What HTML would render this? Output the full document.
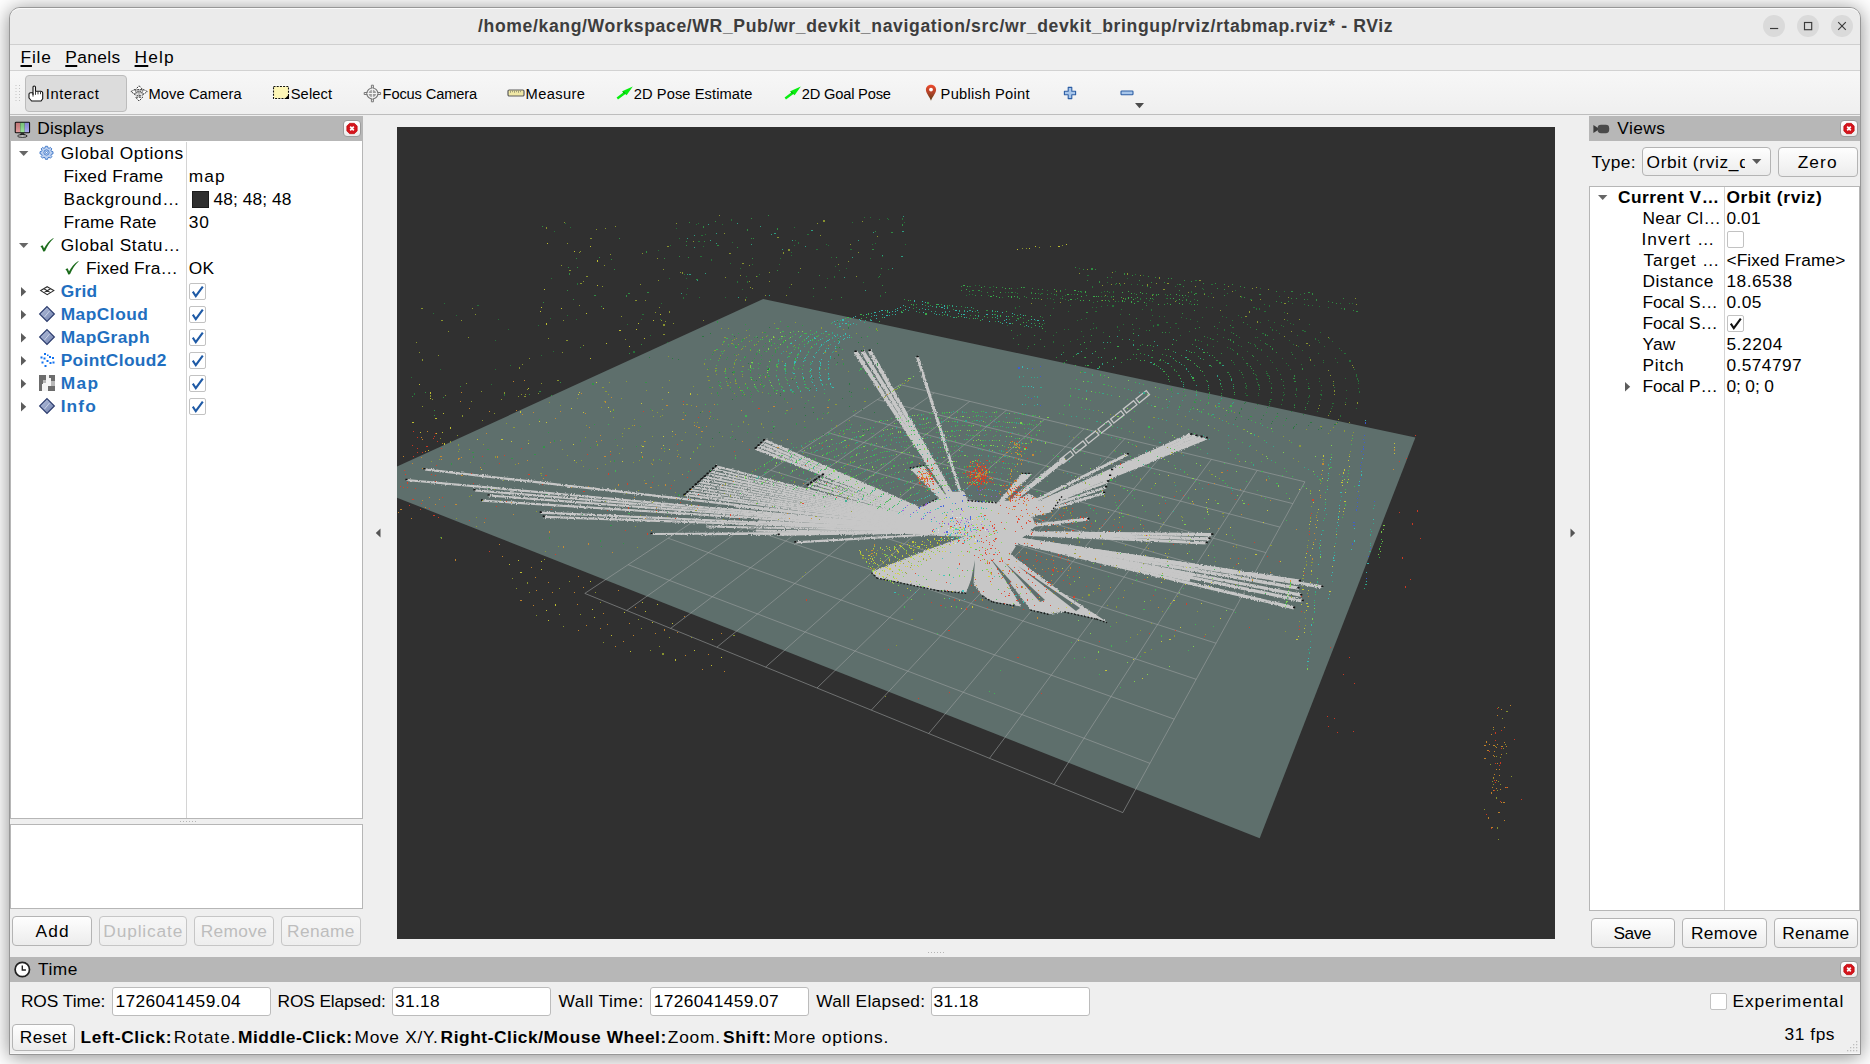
<!DOCTYPE html><html><head><meta charset="utf-8"><title>RViz</title><style>
html,body{margin:0;padding:0}
body{width:1870px;height:1064px;position:relative;overflow:hidden;background:#fff;font-family:'Liberation Sans',sans-serif;color:#000}
.a{position:absolute;box-sizing:border-box}
.t{position:absolute;white-space:pre;line-height:1;font-size:17.33px}
.t u{text-decoration-thickness:1.5px;text-underline-offset:2px}
#win{left:9px;top:7px;width:1852px;height:1048px;border:1px solid #979797;border-radius:11px 11px 0 0;background:#efefef;box-shadow:0 2px 20px rgba(0,0,0,.46);overflow:hidden}
.btn{border:1px solid #b4b4b4;border-radius:4px;background:linear-gradient(#fefefe,#ececec)}
.btn.dis{border-color:#c6c6c6;background:linear-gradient(#f6f6f6,#eeeeee)}
.inp{border:1px solid #bcbcbc;border-radius:3px;background:#fff}
.hdr{background:#b7b7b7}
.box{background:#fff;border:1px solid #b6b6b6}
.cb{width:17px;height:17px;border:1px solid #c2c2c2;border-radius:2px;background:#fff}
.cls{width:18px;height:17px;border:1px solid #9c9c9c;border-radius:4px;background:linear-gradient(#ffffff,#ececec)}
.vl{width:1px;background:#d4d4d4}
svg{position:absolute;overflow:visible}
</style></head><body>
<div id="win" class="a"></div>
<div class="a" style="left:10px;top:8px;width:1850px;height:36px;background:#ebebeb;border-radius:10px 10px 0 0;border-top:1px solid #fafafa"></div>
<div class="a" style="left:10px;top:44px;width:1850px;height:1px;background:#cfcfcf"></div>
<div class="a" style="left:1763px;top:15px;width:22px;height:22px;border-radius:11px;background:#dadada"></div>
<div class="a" style="left:1797px;top:15px;width:22px;height:22px;border-radius:11px;background:#dadada"></div>
<div class="a" style="left:1831px;top:15px;width:22px;height:22px;border-radius:11px;background:#dadada"></div>
<svg style="left:1763px;top:15px" width="92" height="22" fill="none" stroke="#3a3a3a" stroke-width="1.15"><path d="M7 13.5h8.2"/><rect x="41.5" y="7.5" width="7.2" height="7.2"/><path d="M75.2 7.2l7.6 7.6M82.8 7.2l-7.6 7.6"/></svg>
<div class="a" style="left:10px;top:70px;width:1850px;height:1px;background:#d2d2d2"></div>
<div class="a" style="left:10px;top:71px;width:1850px;height:43px;background:linear-gradient(#f7f7f7,#efefef)"></div>
<div class="a" style="left:10px;top:114px;width:1850px;height:1px;background:#bdbdbd"></div>
<svg style="left:15px;top:84px" width="6" height="20"><path d="M1 1v18M4.5 1v18" stroke="#c4c4c4" stroke-width="1" stroke-dasharray="1 2"/></svg>
<div class="a" style="left:25px;top:75px;width:102px;height:37px;background:#dcdcdc;border:1px solid #bcbcbc;border-radius:4px"></div>

<svg style="left:28px;top:85px" width="16" height="17" viewBox="0 0 16 17"><path d="M5 9.5V2.2a1.25 1.25 0 0 1 2.5 0V6.2h5.2a2 2 0 0 1 2 2v5.6l-1.6 2.2H3.6L1 13V9.2a1.5 1.5 0 0 1 1.5-1.5H5z" fill="#fff" stroke="#111" stroke-width="1.1" stroke-linejoin="round"/><path d="M7.5 6.2v3.6M10 6.4v3M12.5 6.6v2.6M5 8v3.6" stroke="#222" stroke-width=".9" fill="none"/></svg>
<svg style="left:130px;top:85px" width="18" height="17" viewBox="0 0 18 17"><rect x="8" y="4" width="2.2" height="9" fill="#bdbdbd"/><g fill="#fff" stroke="#3c3c3c" stroke-width="1" stroke-dasharray="2 .9" stroke-linejoin="round"><path d="M9.100.8L12.700 4.600H5.500Z"/><path d="M9.100 16L5.500 12.200H12.700Z"/><path d="M.9 6.600L5 4.400V6H8V7.800H5V9.400Z"/><path d="M17.300 6.600L13.200 4.400V6H10.200V7.800H13.200V9.400Z"/></g><path d="M4.200 9.200C6 11 12.200 11 14 9.200" fill="none" stroke="#3c3c3c" stroke-width=".9" stroke-dasharray="1.600 1"/></svg>
<svg style="left:272px;top:85px" width="18" height="15" viewBox="0 0 18 15"><rect x=".5" y=".5" width="17" height="14" fill="#fff" opacity=".9"/><rect x="1.5" y="1.5" width="15" height="12" fill="#fdf6b6" stroke="#111" stroke-width="1.1" stroke-dasharray="2 1.2"/><polygon points="17,9.5 17,14 12.6,14" fill="#000"/></svg>
<svg style="left:363px;top:84px" width="19" height="19" viewBox="0 0 19 19" fill="none" stroke="#777"><path d="M8.400 1.200h2v3.200h-2zM8.400 14.600h2v3.200h-2zM1.200 8.500h3.200v2h-3.200zM14.400 8.500h3.200v2h-3.200z" fill="#eee" stroke-width="1"/><circle cx="9.400" cy="9.500" r="5.500" fill="#f2f2f2" stroke-width="1.200"/><circle cx="9.400" cy="9.500" r="3.300" fill="#9a9a9a" stroke="#8a8a8a" stroke-width=".8" stroke-dasharray="1.200 .8"/><path d="M9.400 4.500v10M4.400 9.500h10" stroke-width="1" stroke="#f4f4f4"/><path d="M7.600 7.700h3.600M7.600 11.300h3.600" stroke="#ddd" stroke-width=".6" stroke-dasharray=".8 .8"/></svg>
<svg style="left:507px;top:89px" width="18" height="8" viewBox="0 0 18 8"><rect x="1" y="1" width="16" height="6" rx="1.2" fill="#f0e8a6" stroke="#5c5c5c" stroke-width="1.2"/><path d="M3.5 1.6v2.2M5.5 1.6v1.6M7.5 1.6v2.2M9.5 1.6v1.6M11.5 1.6v2.2M13.5 1.6v1.6" stroke="#8a8a70" stroke-width=".8"/></svg>
<svg style="left:615.5px;top:85.5px" width="18" height="14" viewBox="0 0 18 14"><path d="M0.6 11.6L7.2 6.4 6.2 5.2 16.8.6 10.6 9.2 9.4 8 2 13.4Z" fill="#08ee10"/><path d="M6.2 5.2L7.2 6.4 9.4 8 10.2 8.8 8.4 6.2Z" fill="#0a8a10"/></svg><svg style="left:783.5px;top:85.5px" width="18" height="14" viewBox="0 0 18 14"><path d="M0.6 11.6L7.2 6.4 6.2 5.2 16.8.6 10.6 9.2 9.4 8 2 13.4Z" fill="#08ee10"/><path d="M6.2 5.2L7.2 6.4 9.4 8 10.2 8.8 8.4 6.2Z" fill="#0a8a10"/></svg><svg style="left:925px;top:84px" width="12" height="18" viewBox="0 0 12 18"><defs><linearGradient id="pg" x1="0" y1="0" x2="0" y2="1"><stop offset="0" stop-color="#ee4a2c"/><stop offset=".5" stop-color="#b0442a"/><stop offset="1" stop-color="#5a3a10"/></linearGradient></defs><path d="M6 .8C3 .8.9 3 .9 5.8c0 3.4 3.4 6.4 5.1 11 1.700-4.600 5.100-7.600 5.100-11C11.100 3 9 .8 6 .8Z" fill="url(#pg)"/><circle cx="6" cy="5.600" r="1.900" fill="#fff"/></svg>
<svg style="left:1063px;top:86px" width="14" height="14" viewBox="0 0 14 14"><path d="M5.2 1.400h3.600v3.800h3.800v3.600h-3.800v3.800h-3.600v-3.800h-3.800v-3.600h3.800z" fill="#a8c6ea" stroke="#2c5ea4" stroke-width="1.100" stroke-linejoin="round"/></svg>
<svg style="left:1120px;top:90px" width="14" height="6" viewBox="0 0 14 6"><rect x="1" y="1" width="12" height="3.800" rx=".8" fill="#a8c6ea" stroke="#2c5ea4" stroke-width="1.100"/></svg>
<svg style="left:1135px;top:103px" width="10" height="6"><polygon points="0,0 9,0 4.500,5.200" fill="#4c4c4c"/></svg>


<div class="a hdr" style="left:10px;top:116px;width:353px;height:26px"></div>
<div class="a cls" style="left:343px;top:120px"></div><svg style="left:346px;top:123px" width="12" height="11" viewBox="0 0 12 11"><polygon points="3.6,0.3 8.4,0.3 11.2,3.1 11.2,7.9 8.4,10.7 3.6,10.7 0.8,7.9 0.8,3.1" fill="#d4141c" stroke="#b00" stroke-width=".6"/><path d="M4.2 3.7l3.6 3.6M7.8 3.7l-3.6 3.6" stroke="#fff" stroke-width="1.7"/></svg>
<svg style="left:14px;top:121px" width="17" height="17" viewBox="0 0 17 17"><rect x=".7" y=".7" width="15.400" height="11.600" rx="1.400" fill="#111"/><rect x="1.800" y="1.800" width="4.500" height="9.400" fill="#d88"/><rect x="6.300" y="1.800" width="4.400" height="9.400" fill="#8d8"/><rect x="10.700" y="1.800" width="4.300" height="9.400" fill="#99e"/><rect x="1.800" y="1.800" width="13.200" height="9.400" fill="url(#mg)"/><defs><linearGradient id="mg" x1="0" y1="0" x2="0" y2="1"><stop offset="0" stop-color="#000" stop-opacity=".12"/><stop offset="1" stop-color="#fff" stop-opacity=".18"/></linearGradient></defs><path d="M6.800 12.300h3.200l1 1.800h-5.200z" fill="#111"/><ellipse cx="8.400" cy="15" rx="4.800" ry="1.300" fill="#ddd" stroke="#111" stroke-width=".9"/></svg>
<div class="a box" style="left:10px;top:141px;width:353px;height:678px;border-top:none"></div>
<div class="a vl" style="left:186px;top:142px;height:676px"></div>
<div class="a box" style="left:10px;top:824px;width:353px;height:85px"></div>
<svg style="left:180px;top:821px" width="18" height="2"><path d="M0 .5h18" stroke="#b5b5b5" stroke-dasharray="1 2"/></svg>
<div class="a btn" style="left:12px;top:916px;width:80px;height:30px"></div>
<div class="a btn dis" style="left:99px;top:916px;width:88px;height:30px"></div>
<div class="a btn dis" style="left:194px;top:916px;width:80px;height:30px"></div>
<div class="a btn dis" style="left:281px;top:916px;width:80px;height:30px"></div>
<svg style="left:18.8px;top:151.1px" width="10" height="6"><polygon points="0,0 9.4,0 4.7,5" fill="#666"/></svg>
<svg style="left:18.8px;top:243.1px" width="10" height="6"><polygon points="0,0 9.4,0 4.7,5" fill="#666"/></svg>
<svg style="left:20.9px;top:286.6px" width="6" height="10"><polygon points="0,0 5.2,4.7 0,9.4" fill="#5c5c5c"/></svg>
<svg style="left:20.9px;top:309.6px" width="6" height="10"><polygon points="0,0 5.2,4.7 0,9.4" fill="#5c5c5c"/></svg>
<svg style="left:20.9px;top:332.6px" width="6" height="10"><polygon points="0,0 5.2,4.7 0,9.4" fill="#5c5c5c"/></svg>
<svg style="left:20.9px;top:355.6px" width="6" height="10"><polygon points="0,0 5.2,4.7 0,9.4" fill="#5c5c5c"/></svg>
<svg style="left:20.9px;top:378.6px" width="6" height="10"><polygon points="0,0 5.2,4.7 0,9.4" fill="#5c5c5c"/></svg>
<svg style="left:20.9px;top:401.6px" width="6" height="10"><polygon points="0,0 5.2,4.7 0,9.4" fill="#5c5c5c"/></svg>
<svg style="left:40px;top:146px" width="13" height="13" viewBox="-6.5 -6.5 13 13"><g fill="#bcd0f0" stroke="#3a74c6" stroke-width=".9"><path d="M-1.1-6.2h2.2l.3 1.5 1.2.5 1.3-.9 1.5 1.5-.9 1.3.5 1.2 1.5.3v2.2l-1.5.3-.5 1.2.9 1.3-1.5 1.5-1.3-.9-1.2.5-.3 1.5h-2.2l-.3-1.5-1.2-.5-1.3.9-1.5-1.5.9-1.3-.5-1.2-1.5-.3v-2.2l1.5-.3.5-1.2-.9-1.3 1.5-1.5 1.3.9 1.2-.5z"/><circle r="2.6" fill="#e6eefb"/><circle r="1.1" fill="#fff"/></g></svg>
<svg style="left:40px;top:238px" width="14" height="14" viewBox="0 0 14 14"><path d="M0.4 8.2 L2.6 7.2 C3.3 8.6 3.7 9.6 4 10.6 C6.2 6.2 9.4 2.4 13.4 0 L13.6 0.5 C10.2 3.6 7.2 8 5 13.2 L3.2 13.4 C2.6 11.4 1.6 9.6 0.4 8.2Z" fill="#1b6b1b"/></svg>
<svg style="left:65px;top:261px" width="14" height="14" viewBox="0 0 14 14"><path d="M0.4 8.2 L2.6 7.2 C3.3 8.6 3.7 9.6 4 10.6 C6.2 6.2 9.4 2.4 13.4 0 L13.6 0.5 C10.2 3.6 7.2 8 5 13.2 L3.2 13.4 C2.6 11.4 1.6 9.6 0.4 8.2Z" fill="#1b6b1b"/></svg>
<svg style="left:40px;top:286px" width="15" height="10" viewBox="0 0 15 10" fill="none" stroke="#2c2c2c" stroke-width="1.1"><path d="M7.2 .7L13.8 4.6 7.2 8.6.7 4.6Z M3.9 2.7l6.6 3.9M10.5 2.7L3.9 6.6"/></svg>
<svg style="left:39px;top:306px" width="16" height="16" viewBox="0 0 16 16"><defs><linearGradient id="dg39306" x1="0" y1="0" x2="1" y2="1"><stop offset="0" stop-color="#b9c4e0"/><stop offset="1" stop-color="#6e7eaa"/></linearGradient></defs><polygon points="8,0.6 15.4,8 8,15.4 0.6,8" fill="url(#dg39306)" stroke="#28386a" stroke-width="1.1"/><path d="M5.5 11 L10.5 5" stroke="#dfe6f5" stroke-width="1" opacity=".7"/></svg>
<svg style="left:39px;top:329px" width="16" height="16" viewBox="0 0 16 16"><defs><linearGradient id="dg39329" x1="0" y1="0" x2="1" y2="1"><stop offset="0" stop-color="#b9c4e0"/><stop offset="1" stop-color="#6e7eaa"/></linearGradient></defs><polygon points="8,0.6 15.4,8 8,15.4 0.6,8" fill="url(#dg39329)" stroke="#28386a" stroke-width="1.1"/><path d="M5.5 11 L10.5 5" stroke="#dfe6f5" stroke-width="1" opacity=".7"/></svg>
<svg style="left:39px;top:398px" width="16" height="16" viewBox="0 0 16 16"><defs><linearGradient id="dg39398" x1="0" y1="0" x2="1" y2="1"><stop offset="0" stop-color="#b9c4e0"/><stop offset="1" stop-color="#6e7eaa"/></linearGradient></defs><polygon points="8,0.6 15.4,8 8,15.4 0.6,8" fill="url(#dg39398)" stroke="#28386a" stroke-width="1.1"/><path d="M5.5 11 L10.5 5" stroke="#dfe6f5" stroke-width="1" opacity=".7"/></svg>
<svg style="left:39px;top:352px" width="16" height="16" fill="#1272f0"><rect x="5" y="1" width="2" height="2"/><rect x="1.5" y="4.5" width="2" height="2"/><rect x="4.5" y="5.5" width="2" height="2"/><rect x="10" y="4" width="2" height="2"/><rect x="13" y="5" width="2" height="2"/><rect x="7.5" y="8" width="2" height="2"/><rect x="2.5" y="9.5" width="2" height="2"/><rect x="10.5" y="10" width="2" height="2"/><rect x="13.5" y="9.5" width="2" height="2"/><rect x="5.5" y="13" width="2" height="2"/><rect x="8" y="2.5" width="1.5" height="1.5"/></svg>
<svg style="left:39px;top:375px" width="16" height="16"><rect width="16" height="16" fill="#f4f4f4"/><path d="M0 0h7v5h-3v4h-1v7h-3zM10 0h6v6h-4v-3h-2zM9 11h7v5h-7z" fill="#6c6c6c"/><path d="M4 5h3v3h-3zM12 6h4v5h-4z" fill="#b8b8b8"/></svg>
<div class="a" style="left:192px;top:191px;width:17px;height:17px;background:#2f2f2f;border:1px solid #1c1c1c"></div>
<div class="a cb" style="left:189px;top:283px"></div><svg style="left:192px;top:286px" width="12" height="12" viewBox="0 0 12 12"><path d="M0.8 5.6 L3.8 10.2 L10.8 0.6" fill="none" stroke="#1e5aa6" stroke-width="2.1" stroke-linejoin="miter"/></svg>
<div class="a cb" style="left:189px;top:306px"></div><svg style="left:192px;top:309px" width="12" height="12" viewBox="0 0 12 12"><path d="M0.8 5.6 L3.8 10.2 L10.8 0.6" fill="none" stroke="#1e5aa6" stroke-width="2.1" stroke-linejoin="miter"/></svg>
<div class="a cb" style="left:189px;top:329px"></div><svg style="left:192px;top:332px" width="12" height="12" viewBox="0 0 12 12"><path d="M0.8 5.6 L3.8 10.2 L10.8 0.6" fill="none" stroke="#1e5aa6" stroke-width="2.1" stroke-linejoin="miter"/></svg>
<div class="a cb" style="left:189px;top:352px"></div><svg style="left:192px;top:355px" width="12" height="12" viewBox="0 0 12 12"><path d="M0.8 5.6 L3.8 10.2 L10.8 0.6" fill="none" stroke="#1e5aa6" stroke-width="2.1" stroke-linejoin="miter"/></svg>
<div class="a cb" style="left:189px;top:375px"></div><svg style="left:192px;top:378px" width="12" height="12" viewBox="0 0 12 12"><path d="M0.8 5.6 L3.8 10.2 L10.8 0.6" fill="none" stroke="#1e5aa6" stroke-width="2.1" stroke-linejoin="miter"/></svg>
<div class="a cb" style="left:189px;top:398px"></div><svg style="left:192px;top:401px" width="12" height="12" viewBox="0 0 12 12"><path d="M0.8 5.6 L3.8 10.2 L10.8 0.6" fill="none" stroke="#1e5aa6" stroke-width="2.1" stroke-linejoin="miter"/></svg>
<svg style="left:375px;top:528px" width="6" height="10"><polygon points="5.5,0.5 0.8,5 5.5,9.5" fill="#555"/></svg>
<svg style="left:1570px;top:528px" width="6" height="10"><polygon points="0.5,0.5 5.2,5 0.5,9.5" fill="#555"/></svg>
<svg style="left:928px;top:952px" width="18" height="2"><path d="M0 .5h18" stroke="#b5b5b5" stroke-dasharray="1 2"/></svg>
<div class="a hdr" style="left:1589px;top:116px;width:271px;height:25px"></div>
<div class="a cls" style="left:1840px;top:120px"></div><svg style="left:1843px;top:123px" width="12" height="11" viewBox="0 0 12 11"><polygon points="3.6,0.3 8.4,0.3 11.2,3.1 11.2,7.9 8.4,10.7 3.6,10.7 0.8,7.9 0.8,3.1" fill="#d4141c" stroke="#b00" stroke-width=".6"/><path d="M4.2 3.7l3.6 3.6M7.8 3.7l-3.6 3.6" stroke="#fff" stroke-width="1.7"/></svg>
<svg style="left:1593px;top:124px" width="17" height="10"><polygon points="0.4,1 5,4 5,6 0.4,9" fill="#3c3c3c"/><rect x="4.6" y=".8" width="11.6" height="8.4" rx="3.4" fill="#4a4a4a"/></svg>
<div class="a btn" style="left:1642px;top:147px;width:129px;height:29px"></div>
<div class="a" style="left:1646.5px;top:153px;width:98.700px;height:22px;overflow:hidden"><span class="t" style="left:0;top:0.8px;letter-spacing:0.66px">Orbit (rviz_default_plugins)</span></div>
<svg style="left:1751.5px;top:159.2px" width="10" height="6"><polygon points="0,0 9.4,0 4.7,5" fill="#5a5a5a"/></svg>
<div class="a btn" style="left:1778px;top:147px;width:80px;height:30px"></div>
<div class="a box" style="left:1589px;top:186px;width:271px;height:725px"></div>
<div class="a vl" style="left:1724px;top:187px;height:723px"></div>
<svg style="left:1597.8px;top:194.9px" width="10" height="6"><polygon points="0,0 9.4,0 4.7,5" fill="#666"/></svg>
<svg style="left:1625.2px;top:381.6px" width="6" height="10"><polygon points="0,0 5.2,4.7 0,9.4" fill="#5c5c5c"/></svg>
<div class="a cb" style="left:1727px;top:231px"></div>
<div class="a cb" style="left:1727px;top:315px"></div><svg style="left:1730px;top:318px" width="12" height="12" viewBox="0 0 12 12"><path d="M0.8 5.6 L3.8 10.2 L10.8 0.6" fill="none" stroke="#111" stroke-width="2.1" stroke-linejoin="miter"/></svg>
<div class="a btn" style="left:1591px;top:918px;width:84px;height:30px"></div>
<div class="a btn" style="left:1682px;top:918px;width:85px;height:30px"></div>
<div class="a btn" style="left:1774px;top:918px;width:84px;height:30px"></div>
<div class="a hdr" style="left:10px;top:957px;width:1850px;height:25px"></div>
<div class="a cls" style="left:1840px;top:961px"></div><svg style="left:1843px;top:964px" width="12" height="11" viewBox="0 0 12 11"><polygon points="3.6,0.3 8.4,0.3 11.2,3.1 11.2,7.9 8.4,10.7 3.6,10.7 0.8,7.9 0.8,3.1" fill="#d4141c" stroke="#b00" stroke-width=".6"/><path d="M4.2 3.7l3.6 3.6M7.8 3.7l-3.6 3.6" stroke="#fff" stroke-width="1.7"/></svg>
<svg style="left:14px;top:961px" width="17" height="17"><circle cx="8.3" cy="8.5" r="7.2" fill="#fff" stroke="#222" stroke-width="1.7"/><path d="M8.3 4.4v4.6h3.6" fill="none" stroke="#222" stroke-width="1.4"/></svg>
<div class="a inp" style="left:112px;top:987px;width:159px;height:29px"></div>
<div class="a inp" style="left:392px;top:987px;width:159px;height:29px"></div>
<div class="a inp" style="left:650px;top:987px;width:159px;height:29px"></div>
<div class="a inp" style="left:931px;top:987px;width:159px;height:29px"></div>
<div class="a cb" style="left:1710px;top:993px"></div>
<div class="a btn" style="left:12px;top:1024px;width:63px;height:27px"></div>
<div class="a" style="left:10px;top:1053px;width:1850px;height:1px;background:#f8f8f8"></div>
<svg style="left:1846px;top:1040px" width="14" height="14" fill="#bdbdbd"><rect x="10" y="1" width="1.3" height="1.3"/><rect x="7" y="4" width="1.3" height="1.3"/><rect x="10" y="4" width="1.3" height="1.3"/><rect x="4" y="7" width="1.3" height="1.3"/><rect x="7" y="7" width="1.3" height="1.3"/><rect x="10" y="7" width="1.3" height="1.3"/><rect x="1" y="10" width="1.3" height="1.3"/><rect x="4" y="10" width="1.3" height="1.3"/><rect x="7" y="10" width="1.3" height="1.3"/><rect x="10" y="10" width="1.3" height="1.3"/></svg>
<svg style="position:absolute;left:397px;top:127px;overflow:hidden" width="1158" height="812" viewBox="0 0 1158 812" shape-rendering="auto">
<defs><filter id="jag" x="-2%" y="-2%" width="104%" height="104%"><feTurbulence type="fractalNoise" baseFrequency=".7" numOctaves="1" seed="3" result="n"/><feDisplacementMap in="SourceGraphic" in2="n" scale="3.2" xChannelSelector="R" yChannelSelector="G"/></filter></defs>
<rect width="1158" height="812" fill="#303030"/>
<polygon points="-36.5,356.3 862.7,711.2 1018.4,310.4 366.2,172.1" fill="#5e6f6c"/>
<path d="M187.8 466.4L503 257.6M187.8 466.4L725.8 685.6M229.7 483.5L537.3 265.8M231.2 437.7L752.9 636.3M273.6 501.4L572.8 274.3M271.1 411.2L777.2 592.1M319.9 520.2L609.5 283.2M307.9 386.8L799.2 552.3M368.6 540.1L647.5 292.3M342 364.2L819 516.2M420 561L687 301.8M373.6 343.3L837.2 483.3M474.3 583.1L727.9 311.6M403.1 323.8L853.7 453.2M531.7 606.5L770.3 321.8M430.6 305.6L868.9 425.6M592.5 631.3L814.4 332.4M456.3 288.5L882.9 400.1M657.1 657.6L860.2 343.4M480.4 272.6L895.9 376.6M725.8 685.6L907.9 354.8M503 257.6L907.9 354.8" stroke="#a0a4a4" stroke-opacity=".56" stroke-width="1" fill="none"/>
<g filter="url(#jag)" fill="#c7c7c7"><polygon points="576.5,403.8 367.8,311.9 366.6,314.5 575.5,406.2"/><polygon points="576.5,403.8 364.8,314.7 363.8,317.3 575.5,406.2"/><polygon points="576.5,403.8 361.9,317.4 360.9,320 575.5,406.2"/><polygon points="576.5,403.8 359,320.2 358,322.8 575.5,406.2"/><polygon points="576.4,403.9 426.4,346.7 425.4,349.1 575.6,406.1"/><polygon points="576.4,403.9 422.5,349.3 421.6,351.8 575.6,406.1"/><polygon points="576.4,403.9 418.6,352 417.8,354.4 575.6,406.1"/><polygon points="576.3,403.9 414.7,354.6 414,357.1 575.7,406.1"/><polygon points="576.3,403.9 410.9,357.2 410.1,359.8 575.7,406.1"/><polygon points="576.2,404.1 319.2,338.2 318.8,340.2 575.8,405.9"/><polygon points="576.2,404.1 316.4,340.9 315.9,342.8 575.8,405.9"/><polygon points="576.2,404.1 313.5,343.5 313,345.4 575.8,405.9"/><polygon points="576.2,404.1 310.6,346.1 310.1,348.1 575.8,405.9"/><polygon points="576.2,404.1 307.7,348.7 307.3,350.7 575.8,405.9"/><polygon points="576.2,404.1 304.8,351.4 304.4,353.3 575.8,405.9"/><polygon points="576.2,404.1 301.9,354 301.5,355.9 575.8,405.9"/><polygon points="576.2,404.1 299,356.6 298.7,358.6 575.8,405.9"/><polygon points="576.1,404.1 296.1,359.2 295.8,361.2 575.9,405.9"/><polygon points="576.1,404.1 293.2,361.9 292.9,363.8 575.9,405.9"/><polygon points="576.1,404.1 290.3,364.5 290,366.5 575.9,405.9"/><polygon points="576.1,404.1 287.4,367.1 287.2,369.1 575.9,405.9"/><polygon points="576.1,404 27.5,341.2 27.3,343.4 575.9,406"/><polygon points="576.1,404 9.5,351.9 9.3,354.1 575.9,406"/><polygon points="576.1,404 77.5,362.2 77.3,364.4 575.9,406"/><polygon points="576.1,404 91.7,367.4 91.5,369.6 575.9,406"/><polygon points="576.1,404 85.1,372.5 84.9,374.7 575.9,406"/><polygon points="576,404 143.8,384.5 143.6,386.7 576,406"/><polygon points="576,404 146.7,388.7 146.7,390.9 576,406"/><polygon points="576,404 254.5,405.9 254.5,408.1 576,406"/><polygon points="576,404 381.6,406.6 381.6,408.8 576,406"/><polygon points="575.9,404 398.2,414.3 398.4,416.5 576.1,406"/><polygon points="576.1,404.1 338.7,378.4 338.5,380.4 575.9,405.9"/><polygon points="576.1,404.1 319.7,380 319.5,382 575.9,405.9"/><polygon points="576.1,404.1 374.7,388.1 374.5,390.1 575.9,405.9"/><polygon points="576.1,404.1 311,386.9 310.9,388.9 575.9,405.9"/><polygon points="576,404.1 362,393.3 361.9,395.3 576,405.9"/><polygon points="576,404.1 343.3,395.7 343.2,397.7 576,405.9"/><polygon points="576,404.1 309.4,398.4 309.4,400.4 576,405.9"/><polygon points="576,404.1 358.8,402.6 358.8,404.6 576,405.9"/><polygon points="576,404.1 307.1,406.2 307.1,408.2 576,405.9"/><polygon points="576,405 526.2,379.1 541.4,371.6"/><polygon points="576,405 512.8,341.6 527.1,338.9"/><polygon points="577.5,404 460.2,223.7 456.8,225.9 574.5,406"/><polygon points="577.5,404.1 467.3,223.2 463.8,225.3 574.5,405.9"/><polygon points="577.6,404.1 474.3,222.7 470.9,224.7 574.4,405.9"/><polygon points="577.3,404.6 521.9,229.5 519.1,230.5 574.7,405.4"/><polygon points="576,405 624.4,346.9 635.1,346.9"/><polygon points="577.3,406.6 669.6,333.4 666.7,329.8 574.7,403.4"/><polygon points="576.6,406.2 731.3,328.5 729.9,325.9 575.4,403.8"/><polygon points="576.6,406.3 794.8,309 793.4,306 575.4,403.7"/><polygon points="576.6,406.3 799.9,310.2 798.6,307.2 575.4,403.7"/><polygon points="576.6,406.3 805,311.4 803.8,308.4 575.4,403.7"/><polygon points="576.5,406.3 810.2,312.6 809,309.6 575.5,403.7"/><polygon points="576.4,406 763.5,323.1 762.5,320.9 575.6,404"/><polygon points="576.4,406 758.5,329.6 757.5,327.4 575.6,404"/><polygon points="576.4,406 753.4,336.1 752.6,333.9 575.6,404"/><polygon points="576.5,406.1 715.5,344.2 714.5,341.8 575.5,403.9"/><polygon points="576.5,406.1 713.5,350 712.5,347.5 575.5,403.9"/><polygon points="576.4,406.1 711.5,355.8 710.5,353.2 575.6,403.9"/><polygon points="576.4,406.2 709.4,361.5 708.6,359 575.6,403.8"/><polygon points="576.3,406.2 707.4,367.3 706.6,364.7 575.7,403.8"/><polygon points="576,405 665,370 654.5,385"/><polygon points="576.2,406.5 691.4,393.8 691,390.4 575.8,403.5"/><polygon points="576,406.4 815.2,409.2 815.2,406 576,403.6"/><polygon points="576,406.4 812.4,413.4 812.4,410.2 576,403.6"/><polygon points="575.9,406.4 809.5,417.6 809.7,414.4 576.1,403.6"/><polygon points="575.8,406.4 925,461.4 925.4,458.2 576.2,403.6"/><polygon points="575.8,406.4 902.5,455.7 902.9,452.5 576.2,403.6"/><polygon points="575.8,406.4 901,462.8 901.6,459.6 576.2,403.6"/><polygon points="575.7,406.4 903.8,469.8 904.4,466.6 576.3,403.6"/><polygon points="575.7,406.4 905.2,475.5 905.8,472.3 576.3,403.6"/><polygon points="575.7,406.4 896.6,482.5 897.4,479.3 576.3,403.6"/><polygon points="575.8,406.3 802.8,440.5 803.2,437.5 576.2,403.7"/><polygon points="575.8,406.3 799.4,445.1 799.9,442.2 576.2,403.7"/><polygon points="575.7,406.3 796,449.8 796.6,446.9 576.3,403.7"/><polygon points="575.7,406.3 792.7,454.5 793.3,451.5 576.3,403.7"/><polygon points="508,386 526.2,379.1 541.4,371.6 553,364.8 567.3,364.8 570.9,373.7 601.2,375.5 608.4,373.7 619,373.7 631.6,366.6 643,373 633,385 639,399 623,413 613.7,427.3 576,411 567.3,409.4 543,409 513,406 493,400"/></g>
<g fill="none" stroke="#c7c7c7" stroke-width="1.3"><polygon points="666.2,336.4 676.6,328.2 673.4,324.1 663,332.4"/><polygon points="678.9,326.3 689.3,318.1 686,314 675.6,322.3"/><polygon points="691.5,316.3 701.9,308 698.7,303.9 688.3,312.2"/><polygon points="704.2,306.2 714.6,297.9 711.3,293.8 701,302.1"/><polygon points="716.8,296.1 727.2,287.8 724,283.8 713.6,292"/><polygon points="729.5,286 739.9,277.7 736.6,273.7 726.3,281.9"/><polygon points="742.2,275.9 752.5,267.6 749.3,263.6 738.9,271.9"/></g>
<polygon points="576,405 567.3,409.4 528,423.7 474.4,445.1 479.8,450.5 540.5,463 569.1,465.7 574,453 585.1,468.4 595.9,474.6 617.3,478.2 624,479.5 603,443 633.4,482.6 653,487.1 667.3,484.4 699.4,491.6 710.1,495.1 663.7,464.8 613.7,427.3" fill="#c7c7c7" filter="url(#jag)"/>
<g fill="#5e6f6c"><polygon points="593,431 611,457 614.5,455"/><polygon points="607,435 643,475 648,473"/><polygon points="621,439 679,484 683,481"/><polygon points="578,433 572,463 576,465"/></g>
<path d="M474.4 445.6L479.8 451M479.8 451L540.5 463.6M540.5 463.6L569.1 466.3M585.1 469L595.9 475.2M595.9 475.2L617.3 478.8M633.4 483.2L653 487.7M667.3 485L699.4 492.2M699.4 492.2L710.1 495.7M526.2 378.5L541.4 371M512.8 341L527.1 338.3M624.4 346.3L635.1 346.3M665 369.4L654.5 384.4M570.9 373.6L601.2 375.9M319 338.8L287.3 367.7M425.9 347.5L410.5 358.1M367.2 312.8L358.5 321.1" stroke="#181818" stroke-width="1.3" stroke-dasharray="1.6 1.8" fill="none"/>
<path d="M366.2 312.7h2.2M363.3 315.5h2.2M360.4 318.2h2.2M357.5 321h2.2M424.9 347.4h2.2M421 350h2.2M417.2 352.7h2.2M413.4 355.4h2.2M409.5 358h2.2M318 338.7h2.2M315.1 341.3h2.2M312.2 344h2.2M309.4 346.6h2.2M306.5 349.2h2.2M303.6 351.8h2.2M300.7 354.5h2.2M297.8 357.1h2.2M294.9 359.7h2.2M292.1 362.3h2.2M289.2 365h2.2M286.3 367.6h2.2M26.4 341.8h2.2M8.4 352.5h2.2M76.4 362.8h2.2M90.6 368h2.2M84 373.1h2.2M142.7 385.1h2.2M145.7 389.3h2.2M253.5 406.5h2.2M380.6 407.2h2.2M397.3 414.9h2.2M457.5 224.3h2.2M464.5 223.8h2.2M471.6 223.2h2.2M519.5 229.5h2.2M729.6 326.7h2.2M793.1 307h2.2M798.3 308.2h2.2M803.4 309.4h2.2M808.6 310.6h2.2M714 342.5h2.2M712 348.2h2.2M710 354h2.2M708 359.8h2.2M706 365.5h2.2M690.2 391.6h2.2M814.2 407.1h2.2M811.4 411.3h2.2M808.6 415.5h2.2M924.2 459.3h2.2M901.7 453.6h2.2M900.3 460.7h2.2M903.1 467.7h2.2M904.5 473.4h2.2M896 480.4h2.2" stroke="#111" stroke-width="1.6"/>
<g stroke-width="1.1" opacity=".85" fill="none" shape-rendering="crispEdges"><path d="M431.4 207.8h1.1M428.7 209.9h1.1M421.2 213.3h1.1M416.9 217.2h1.1M414.3 220h1.1M413.1 221.7h1.1M410.9 224.8h1.1M409.7 227.3h1.1M406.1 238.7h1.1M404.9 242.7h1.1M404.8 246.2h1.1M404.6 249.5h1.1M405.6 252.7h1.1M406.5 254.4h1.1M408.1 257.3h1.1M408.4 260.1h1.1M410.8 261.8h1.1M426.1 206.5h1.1M419.4 209.2h1.1M414.7 213h1.1M410.7 215.6h1.1M409.8 216.5h1.1M406.9 217.9h1.1M401 227h1.1M399.6 227.9h1.1M398.2 232h1.1M396.9 237.6h1.1M396.7 238.2h1.1M396 241h1.1M397 242.3h1.1M397.5 249.8h1.1M397 251.9h1.1M401.3 261h1.1M402.7 263.2h1.1M419.3 205.7h1.1M417.3 206.7h1.1M412.9 207.5h1.1M409.9 210.6h1.1M407 213h1.1M405.1 214.2h1.1M402 217.4h1.1M397.9 220.4h1.1M392.4 226.8h1.1M391.4 229.1h1.1M387.6 237.3h1.1M388.1 239.7h1.1M387.4 242h1.1M387.7 243h1.1M388.2 250.7h1.1M389 252.4h1.1M390 253.6h1.1M389.9 256.8h1.1M413 203.9h1.1M409 206.2h1.1M407.4 206.9h1.1M403.5 208.9h1.1M402.1 210.1h1.1M393.8 215.3h1.1M389.9 220h1.1M380.7 232.7h1.1M380.5 234.8h1.1M379.4 237.2h1.1M378.5 239h1.1M379.5 240.8h1.1M378.9 243.9h1.1M378.8 248.1h1.1M379.1 249.9h1.1M380.5 253.9h1.1M381.9 256.8h1.1M382.2 257.2h1.1M383.5 259.6h1.1M384.5 260.9h1.1M386.5 264.9h1.1M398.1 207.7h1.1M395.2 209.3h1.1M391.8 211.6h1.1M386.2 215h1.1M381.2 220.6h1.1M371.5 237.6h1.1M370 239.5h1.1M370.4 243.9h1.1M370.6 248.1h1.1M371.7 253.8h1.1M375.1 259.7h1.1M376.3 261.8h1.1M395.5 204.1h1.1M387 209.6h1.1M383.5 211.1h1.1M382.1 212.1h1.1M376.8 216.7h1.1M373.7 218.5h1.1M369.2 224.4h1.1M360.8 241.1h1.1M362.7 248.8h1.1M366.2 260h1.1M366.2 260.6h1.1M371.2 266.4h1.1M385.4 204.2h1.1M371.7 213h1.1M362.3 222.1h1.1M360.1 224.5h1.1M354.5 236.6h1.1M353.6 241.3h1.1M352.9 243.6h1.1M353.4 250.8h1.1M357.4 259.9h1.1M357.9 260.9h1.1M358.6 261.8h1.1M361.3 264.3h1.1M369.9 208.5h1.1M362.9 212.7h1.1M352.8 222.9h1.1M347.2 230.9h1.1M344.4 244.3h1.1M348.1 258h1.1M349.6 261h1.1M359.3 209.1h1.1M353.7 213.2h1.1M345.6 219.5h1.1M337.3 235.8h1.1M337.8 252.8h1.1M343.7 214.9h1.1M338.4 220.2h1.1M327.7 244h1.1M328.2 246.5h1.1M328.4 250.2h1.1M330.1 256.9h1.1M332.9 260.8h1.1M331.1 217.5h1.1M325.6 224.2h1.1M324.1 224.9h1.1M325.2 226.6h1.1M320.7 233.2h1.1M319.1 238.1h1.1M319.1 243.1h1.1M322.7 255.7h1.1M321.8 258.5h1.1M322.9 259.2h1.1M335.1 207.9h1.1M329.4 211.3h1.1M326.2 215h1.1M319.4 222.1h1.1M312.7 232.4h1.1M447.9 191.8h1.1M450.4 190.9h1.1M453 191.4h1.1M463.4 187.8h1.1M465.9 188.1h1.1M471.1 187h1.1M434.1 196.6h1.1M464.1 191.5h1.1M469.2 190.9h1.1M489.7 185h1.1M505.6 183.4h1.1M439.8 200.2h1.1M450.5 198h1.1M484.7 190.8h1.1M503.5 185h1.1M511.3 173.9h1.1M539.4 177.5h1.1M597.5 184.4h1.1M609.3 184.8h1.1M619.7 188.3h1.1M628.1 188.2h1.1M633.8 189.3h1.1M514.1 177.8h1.1M542 179.4h1.1M602.7 189h1.1M611 189.4h1.1M614.6 189.6h1.1M622.5 190.7h1.1M631 193.4h1.1M508.1 179.7h1.1M578.1 188.9h1.1M586.6 189.9h1.1M594.5 190.4h1.1M625.5 195.2h1.1M642.3 196.7h1.1M528.4 187h1.1M546.8 187.4h1.1M559.3 190.9h1.1M561.2 189.9h1.1M563.9 189.6h1.1M575.6 191.2h1.1M582.6 193.2h1.1M602.8 195.2h1.1M614.9 196.1h1.1M622.9 197.7h1.1M637.7 198.9h1.1M645.3 201.8h1.1M566.4 158.6h1.1M569.6 159.4h1.1M583.5 160.7h1.1M599 160.7h1.1M607.9 161.2h1.1M611.7 161.2h1.1M624 160.8h1.1M656.6 162.9h1.1M677.4 163.3h1.1M687.9 165h1.1M724.7 165.9h1.1M731 164.8h1.1M733.8 166.8h1.1M743.3 165.6h1.1M745.1 166.6h1.1M760.7 167.1h1.1M779.3 167.4h1.1M785.1 168.3h1.1M797 167.7h1.1M568.9 162.7h1.1M602.6 165.9h1.1M637.7 166.7h1.1M670.4 167.5h1.1M680 167.8h1.1M683.5 169.6h1.1M696.4 169.1h1.1M698.8 169.6h1.1M700.7 169.6h1.1M715.5 169.9h1.1M724.3 170.4h1.1M730.7 171h1.1M733.8 170.2h1.1M735.7 172.2h1.1M739.5 170.5h1.1M752.9 171.2h1.1M775.9 171.8h1.1M782 172.8h1.1M593.4 169.2h1.1M595.8 168.9h1.1M599.2 169.2h1.1M601.7 170.7h1.1M610.9 169.3h1.1M613.8 170h1.1M617 169.6h1.1M635.3 171.2h1.1M673.4 172.8h1.1M682.5 173.2h1.1M686.1 173.6h1.1M692 173.4h1.1M707.7 173.7h1.1M724.9 174h1.1M733.9 175h1.1M737.1 176.4h1.1M746.6 175.8h1.1M760.8 177.5h1.1M773 177.3h1.1M782.1 176.6h1.1M785.3 177.1h1.1M792 176.8h1.1M797 177.7h1.1M770.7 252.7h1.1M770.5 249.4h1.1M766.4 244.8h1.1M756.8 237h1.1M746.6 233.1h1.1M743.3 233.3h1.1M707.3 248.3h1.1M782 280h1.1M786.5 262.4h1.1M782.9 251.8h1.1M763.3 232.7h1.1M718 231h1.1M709.5 235.2h1.1M702 240h1.1M792.9 282.5h1.1M798.5 265.9h1.1M795.4 251h1.1M772.7 229.7h1.1M754.9 223.5h1.1M690.4 238.5h1.1M804.3 285h1.1M805.5 282.6h1.1M809.9 254.6h1.1M805 244.6h1.1M802.7 243.4h1.1M800 239.6h1.1M796.6 236.7h1.1M792.8 233.5h1.1M790.4 232.5h1.1M770.6 222.9h1.1M749.7 218.2h1.1M720.4 219.6h1.1M697.5 224.6h1.1M687.7 230.4h1.1M677.7 238.3h1.1M821.4 279.4h1.1M813.2 238.6h1.1M794.3 225.6h1.1M775.2 217.6h1.1M678.9 227.4h1.1M833.4 279h1.1M837.2 265.8h1.1M806.4 225.4h1.1M735.9 206.5h1.1M711.6 209.2h1.1M686.9 215.8h1.1M586.1 381.2h1.1M576 380.1h1.1M560.6 381.6h1.1M558.5 382.4h1.1M547.1 385.7h1.1M590.1 374.9h1.1M582.5 374.6h1.1M538.2 374.2h1.1M602.2 364.6h1.1M592.8 362.9h1.1M587.8 362.7h1.1M562.9 362.2h1.1M526.6 371.3h1.1M521.9 372.5h1.1M501.5 385.2h1.1M601.6 357.5h1.1M599 357.4h1.1M589.1 357.1h1.1M586.7 356.8h1.1M574.5 356h1.1M572 356.4h1.1M559.8 357.1h1.1M555.1 358.1h1.1M552.2 357.3h1.1M549.7 357.6h1.1M544.9 358.4h1.1M542.9 359.4h1.1M540.9 360.3h1.1M534.7 362.5h1.1M531.4 362h1.1M527.9 364.1h1.1M521.5 363.8h1.1M520.8 365.7h1.1M516.7 367.2h1.1M514.2 367.8h1.1M511.6 370.3h1.1M510.1 371.4h1.1M507.9 372.1h1.1M502.1 374.9h1.1M500.9 376.1h1.1M497.3 378.2h1.1M496.3 379.5h1.1M491.6 381.2h1.1M492.1 382.9h1.1M489.6 383.9h1.1M602.8 351.6h1.1M585.5 351.6h1.1M583.2 350.7h1.1M580.8 350.4h1.1M573.5 350.5h1.1M571.1 350.6h1.1M568.6 350.5h1.1M566.1 350.4h1.1M558.8 350.8h1.1M554.2 351.9h1.1M544.9 353.7h1.1M542.3 353.5h1.1M540.2 354.3h1.1M535.2 354.8h1.1M532.5 354.8h1.1M524 357.6h1.1M511.7 362.2h1.1M509.7 363h1.1M507.5 363.7h1.1M503.2 365.2h1.1M496.6 369.3h1.1M493.9 369.9h1.1M492.8 371.2h1.1M492.4 372.7h1.1M490.6 373.7h1.1M489.4 374.9h1.1M487.6 375.9h1.1M486.5 377.2h1.1M482.7 377.6h1.1M482.4 379.1h1.1M481 380.3h1.1M479.7 381.5h1.1M611 347.2h1.1M594.4 345.1h1.1M589.4 345.6h1.1M584.6 345.3h1.1M577.4 344.5h1.1M570.1 344.7h1.1M567.7 345h1.1M565.3 345.2h1.1M560.4 345.2h1.1M553.2 345.8h1.1M539.2 348.1h1.1M537.1 348.8h1.1M534.4 348.6h1.1M528.4 351.1h1.1M525.3 350.7h1.1M524.1 352.3h1.1M517.2 353.8h1.1M509.9 355h1.1M508.9 356.6h1.1M500.2 359.2h1.1M496.1 360.8h1.1M486.3 367h1.1M483.9 367.7h1.1M478.1 372.2h1.1M472.7 375.3h1.1M471.2 377.9h1.1M616.7 342.3h1.1M614.3 342.2h1.1M609.8 341.2h1.1M605.2 340.4h1.1M597.9 340.1h1.1M593.3 339.3h1.1M586 339.5h1.1M581.2 339.7h1.1M576.4 339.5h1.1M571.6 338.9h1.1M569.2 339.6h1.1M566.9 340h1.1M562 339.5h1.1M557.3 340.3h1.1M554.8 339.9h1.1M538.7 342.7h1.1M536.2 342.7h1.1M533.9 343.1h1.1M522.6 345.5h1.1M515 346.2h1.1M513.6 347.5h1.1M495.8 354.6h1.1M491.2 355.7h1.1M489.1 356.5h1.1M485 358.1h1.1M482.1 358.5h1.1M482.6 360.6h1.1M477.9 362h1.1M473.7 365.4h1.1M472.5 366.5h1.1M470.2 367.4h1.1M465.5 369h1.1M461.9 374.2h1.1M459.9 375.2h1.1M615.3 336.7h1.1M610.7 336.1h1.1M608.3 336.1h1.1M601.6 334.6h1.1M596.8 334.4h1.1M594.2 335.2h1.1M580.2 334h1.1M554.2 335.1h1.1M552 335.5h1.1M544.9 336.1h1.1M542.3 335.7h1.1M540 336.1h1.1M537.9 336.8h1.1M533.6 338h1.1M531.3 338.4h1.1M528.8 338.4h1.1M526.8 339.1h1.1M524.3 339.3h1.1M522.3 340.1h1.1M519.8 340.2h1.1M507.3 344.1h1.1M501.9 344.3h1.1M496.5 347.1h1.1M494.2 347.6h1.1M491.7 348.1h1.1M486.3 350.7h1.1M484.4 351.6h1.1M479.5 352.7h1.1M478.5 354h1.1M474.6 355.7h1.1M471.9 356.2h1.1M472.8 358.4h1.1M467 361h1.1M463.7 363h1.1M450.5 369.9h1.1M618.9 331.2h1.1M609.5 330.5h1.1M602.4 330.1h1.1M597.8 329.6h1.1M576.8 328.7h1.1M569.8 329.1h1.1M562.6 328.1h1.1M560.5 329.6h1.1M558 328.8h1.1M555.8 329.5h1.1M532.5 331.6h1.1M530.2 332h1.1M514.4 335h1.1M512.6 336h1.1M510 336h1.1M501.2 338.2h1.1M496.4 339h1.1M488.9 342.4h1.1M481.1 345.6h1.1M477.3 347.2h1.1M473.5 348.9h1.1M470.5 351h1.1M465.8 352.3h1.1M459.2 354.5h1.1M453.6 359.1h1.1M450.7 361.3h1.1M448.6 363.7h1.1M444.8 365.7h1.1M441.5 367.8h1.1M437.7 372.9h1.1M626.8 326.7h1.1M621.8 327h1.1M613.3 324.4h1.1M606.1 324.5h1.1M601.5 323.9h1.1M585.2 323.4h1.1M557.2 323.7h1.1M552.7 324.4h1.1M550.3 324.2h1.1M545.8 324.9h1.1M543.3 324.8h1.1M541.3 325.6h1.1M512.2 330.5h1.1M508 331.7h1.1M502.9 331.9h1.1M496.8 333.9h1.1M493.9 333.9h1.1M493 335.5h1.1M488 336.1h1.1M486.3 337h1.1M482.5 338.6h1.1M478.7 340.2h1.1M472.2 342.1h1.1M464.5 345.4h1.1M463.1 346.5h1.1M460.9 347.2h1.1M457.5 349.1h1.1M455.7 350h1.1M451 353.1h1.1M448.7 353.8h1.1M445.7 355.9h1.1M443.1 356.6h1.1M435.2 361.9h1.1M434.8 363.3h1.1M428.3 369.2h1.1M425.7 370h1.1M607.2 319.3h1.1M586.4 319h1.1M581.9 318.2h1.1M579.6 318.6h1.1M577.3 318.5h1.1M565.8 318.7h1.1M563.5 318.7h1.1M558.9 318.8h1.1M556.7 319.5h1.1M554.3 319.1h1.1M547.5 320h1.1M535.9 320.4h1.1M522.4 322.5h1.1M520.4 323.2h1.1M509.5 325.5h1.1M507.1 325.7h1.1M496.3 328.2h1.1M492.3 329.5h1.1M485.4 330.8h1.1M482.2 332.8h1.1M479.6 333h1.1M473.7 335.3h1.1M467.3 337.2h1.1M461.8 339.7h1.1M453.9 342.8h1.1M453.3 344.3h1.1M448.5 345.5h1.1M447.4 346.7h1.1M440.9 349.1h1.1M434.3 354.7h1.1M431.1 355.2h1.1M429.1 357.7h1.1M427.4 358.7h1.1M420.9 362.9h1.1M419.3 365.5h1.1M630.9 316.7h1.1M617.2 315.6h1.1M599.2 313.7h1.1M596.8 313.9h1.1M587.8 313.4h1.1M585.4 313.6h1.1M569.4 312.6h1.1M558.1 314h1.1M553.5 313.9h1.1M551.3 314.3h1.1M544.5 314.9h1.1M542.2 314.9h1.1M539.9 315h1.1M526.5 316.7h1.1M524.7 317.8h1.1M522 317.3h1.1M515.7 319h1.1M510.5 318.7h1.1M509.1 320.2h1.1M506.6 320.2h1.1M495.7 322.5h1.1M489.4 324.1h1.1M486.9 324.3h1.1M485.3 325.3h1.1M482.6 325.4h1.1M479 327.1h1.1M477.2 328h1.1M473.4 329.4h1.1M466.8 331.1h1.1M465.2 332.1h1.1M462.9 332.6h1.1M455.4 335.7h1.1M450.8 336.9h1.1M447.4 338.8h1.1M440.9 342.6h1.1M437.7 342.9h1.1M434 346.4h1.1M431.9 347.1h1.1M428.5 349.1h1.1M424.9 351h1.1M421.9 353.1h1.1M414.8 358.6h1.1M412.2 360.9h1.1M408.5 362.9h1.1M635.8 312.9h1.1M633.4 313h1.1M629.7 311.1h1.1M627.1 311.6h1.1M619.9 311.9h1.1M611.6 309.5h1.1M598.1 308.6h1.1M595.6 309.6h1.1M589.1 307.9h1.1M580 308.3h1.1M577.7 308.6h1.1M575.4 308.9h1.1M573.2 308.1h1.1M568.5 307.1h1.1M557.4 309.1h1.1M555.1 308.8h1.1M543.9 309.9h1.1M532.5 310.5h1.1M528.3 311.6h1.1M515.2 313.8h1.1M513 314.1h1.1M508.6 314.8h1.1M505.9 314.5h1.1M493.1 317.4h1.1M478.4 321.2h1.1M476.7 322.2h1.1M468.5 324.6h1.1M466.6 325.4h1.1M459.5 326.6h1.1M454.4 329.3h1.1M453 330.4h1.1M447 332.5h1.1M441.9 335.2h1.1M435.5 337.3h1.1M430.7 338.5h1.1M429.6 339.7h1.1M428.7 341h1.1M427.4 342.2h1.1M424.2 342.5h1.1M420.6 345.9h1.1M417.4 347.9h1.1M408.5 352.8h1.1M400.1 359.5h1.1M399.2 360.7h1.1M397 361.7h1.1M396.2 362.9h1.1M639 308h1.1M633.8 308.7h1.1M628.2 306.3h1.1M620.9 306.9h1.1M610.2 305.1h1.1M601.5 303.9h1.1M599 304.7h1.1M592.5 303.4h1.1M583.5 303.5h1.1M581.3 303.3h1.1M576.8 303.8h1.1M561 303.3h1.1M554.4 304h1.1M541.1 305.3h1.1M538.7 305.1h1.1M527.7 306.4h1.1M525.7 307.1h1.1M516.7 307.9h1.1M514.2 307.8h1.1M504 310.6h1.1M501.7 310.8h1.1M493.6 313h1.1M486.7 313.9h1.1M474.1 317h1.1M472.9 318.2h1.1M464.2 320.2h1.1M462 320.7h1.1M457.6 321.8h1.1M454.8 323.9h1.1M452.6 324.5h1.1M448.3 325.6h1.1M444.2 326.9h1.1M436.6 330h1.1M432.3 331.4h1.1M429.8 333.6h1.1M425.2 334.9h1.1M421.1 336.4h1.1M416.5 339.4h1.1M410.5 343.5h1.1M405.6 345h1.1M402.3 348.5h1.1M394 353.6h1.1M389 358.3h1.1M639.6 303.4h1.1M635 303.3h1.1M626.9 301.1h1.1M609 300.1h1.1M602.5 299.3h1.1M600.3 299.3h1.1M598 299.7h1.1M591.4 298.7h1.1M582.5 299h1.1M573.7 299h1.1M571.4 298.7h1.1M567 298.8h1.1M564.7 298.8h1.1M560.3 298.9h1.1M558.1 299h1.1M542.6 300.1h1.1M536 300.7h1.1M534.1 301.7h1.1M531.5 300.8h1.1M529.2 300.9h1.1M527.1 301.5h1.1M524.7 301.3h1.1M520.7 302.5h1.1M516.4 303.2h1.1M514.2 303.5h1.1M492.5 307h1.1M491.2 308.3h1.1M484.2 309h1.1M478 310.5h1.1M470.2 313.1h1.1M467.8 313.4h1.1M457.7 316.3h1.1M452 318.5h1.1M449.3 318.6h1.1M445.7 320.2h1.1M439.3 322h1.1M435.6 323.6h1.1M433.8 324.4h1.1M432.1 325.3h1.1M430.2 326h1.1M428.6 327h1.1M425.9 327.4h1.1M417.7 332h1.1M415.2 332.5h1.1M411.4 334.2h1.1M397.3 343.2h1.1M392.9 346.3h1.1M388.7 348.1h1.1M385.6 350.2h1.1M384.7 351.5h1.1M376.2 356.7h1.1M376 358.1h1.1M642.7 298.7h1.1M640.2 298.9h1.1M638.6 297.8h1.1M636 298.2h1.1M633.9 297.8h1.1M632 297h1.1M629.6 297.2h1.1M627.3 297.4h1.1M625.2 297h1.1M614.4 295.8h1.1M607.9 295.3h1.1M605.8 294.7h1.1M601.4 294.6h1.1M592.6 293.9h1.1M588.1 295.1h1.1M577.2 293.9h1.1M575 294.1h1.1M566.2 294.1h1.1M557.4 294.8h1.1M555.2 294.7h1.1M548.6 294.8h1.1M533 295.5h1.1M527 297.4h1.1M524.6 297.3h1.1M512.1 299.7h1.1M502.5 299.5h1.1M492.6 302.4h1.1M487.5 302.2h1.1M476.1 306.2h1.1M474 306.7h1.1M467.1 307.6h1.1M463.7 309.2h1.1M461.5 309.7h1.1M457.3 310.7h1.1M451.5 312.7h1.1M441.8 316.1h1.1M423.9 322.1h1.1M416.8 325.5h1.1M409.5 328.8h1.1M406.6 330.8h1.1M404.2 331.4h1.1M398.5 334h1.1M398.4 335.5h1.1M393.1 338.2h1.1M387.1 340.8h1.1M377 348.2h1.1M375 349.1h1.1M370.1 352.3h1.1M645.3 294.7h1.1M637.1 293.1h1.1M619.7 291.6h1.1M617.5 291.5h1.1M600.2 290.2h1.1M598.1 289.9h1.1M593.8 289.7h1.1M589.3 290.3h1.1M585 289.3h1.1M582.8 289.5h1.1M578.5 289h1.1M576.3 289.4h1.1M569.8 290.2h1.1M563.2 289.9h1.1M550 289.7h1.1M543.8 291.3h1.1M541.4 290.8h1.1M532.9 291.9h1.1M528.5 292h1.1M524.2 292.6h1.1M521.6 291.8h1.1M518.2 294.2h1.1M515.5 293.4h1.1M511.2 294h1.1M509.3 294.7h1.1M502.8 295.4h1.1M498.6 296.3h1.1M473.3 301h1.1M466.9 302.3h1.1M464.8 302.8h1.1M456.8 305.1h1.1M454.6 305.5h1.1M446.3 307.7h1.1M443 309.4h1.1M440.8 309.9h1.1M435.2 312.1h1.1M427.5 314.8h1.1M424.8 315.1h1.1M423.8 316.3h1.1M417.7 318.3h1.1M416.2 319.3h1.1M410.3 321.5h1.1M397.3 327.1h1.1M393.9 329h1.1M386.9 334.1h1.1M370.4 342.3h1.1M368.7 344.8h1.1M367.4 345.9h1.1M637.6 288.9h1.1M635.4 288.9h1.1M627.1 287.5h1.1M625.1 287h1.1M616.5 286.2h1.1M607.8 286.1h1.1M599.3 285h1.1M594.9 285.4h1.1M586.3 284.5h1.1M584.1 284.2h1.1M579.7 285.2h1.1M577.6 285.2h1.1M575.4 284.6h1.1M569 285.8h1.1M560.3 285h1.1M549.4 285.3h1.1M547.3 286h1.1M545.2 286h1.1M534.4 286.8h1.1M532.2 286.9h1.1M525.8 287.4h1.1M521.3 287.5h1.1M511.1 289.7h1.1M500.5 291.2h1.1M498.6 291.9h1.1M493.7 291.6h1.1M488.2 293.7h1.1M483.4 293.8h1.1M477.7 295.6h1.1M462.6 298.1h1.1M451.6 302.3h1.1M449.4 302.7h1.1M445.6 304h1.1M442.7 303.9h1.1M436.8 305.7h1.1M432.4 306.7h1.1M429.2 308.5h1.1M422.9 310.2h1.1M421.6 311.2h1.1M418.9 311.5h1.1M414.1 314.1h1.1M411.5 314.4h1.1M407.9 316.1h1.1M399.3 320.3h1.1M391.4 323.3h1.1M391.1 324.8h1.1M384.4 328.4h1.1M381.5 328.8h1.1M376.2 331.5h1.1M373.6 333.6h1.1M371.8 334.6h1.1M369.8 335.4h1.1M369.3 336.7h1.1M366.9 339h1.1M362.8 339.2h1.1M361.1 341.7h1.1M357.5 343.6h1.1M355.2 344.4h1.1M353.5 346.9h1.1M348 351.4h1.1M678 394.3h1.1M675.6 391.6h1.1M670.1 383.4h1.1M645.9 368.6h1.1M642.5 366.6h1.1M639.4 364.3h1.1M626.2 360.1h1.1M698.6 386.3h1.1M696 383.7h1.1M691.4 378.5h1.1M681.4 368.6h1.1M650.3 354.1h1.1M642.4 350.8h1.1M633.3 348.6h1.1M725.4 389.4h1.1M724.1 383.6h1.1M721.3 381h1.1M719.3 378.4h1.1M717.8 375.6h1.1M704.7 366.5h1.1M703.3 363.7h1.1M640.7 336.8h1.1M748 384.1h1.1M737 371.1h1.1M734.5 368.7h1.1M726.4 361.5h1.1M717.6 354.8h1.1M713.4 353h1.1M660.4 329.4h1.1M655.8 328.5h1.1M642.9 324.9h1.1M637.7 324.9h1.1M761.9 368.5h1.1M739.2 349.9h1.1M734.8 348.2h1.1M686.5 326.1h1.1M683 324.3h1.1M679 322.8h1.1M653.7 315.6h1.1M790.7 371h1.1M783 363.6h1.1M750.6 339h1.1M740.6 333.1h1.1M735.9 331.7h1.1M732.6 329.8h1.1M724.2 326.9h1.1M681.1 310.9h1.1M645.5 304.5h1.1M801.6 356.3h1.1M797.5 354.2h1.1M786.6 345h1.1M777.2 338.7h1.1M759.9 329.1h1.1M738.2 318.7h1.1M734.5 317.1h1.1M722.4 312.9h1.1M718.9 311.3h1.1M710.9 308.6h1.1M703 306h1.1M681.6 300.9h1.1M830.1 358.7h1.1M828 356.2h1.1M825.4 353.8h1.1M778.9 325.2h1.1M776.8 322.8h1.1M772.9 321.2h1.1M755.7 312.3h1.1M751.9 310.7h1.1M731.7 304.1h1.1M723.9 301.4h1.1M715.1 299.5h1.1M707.8 296.6h1.1M703.3 295.8h1.1M692.2 291.5h1.1M686.9 291.7h1.1M666.1 287.2h1.1M661.6 286.7h1.1M867.9 371.5h1.1M860.2 363.9h1.1M848.9 354.2h1.1M826.5 336.1h1.1M803 322.3h1.1M800 320.3h1.1M767.8 305.1h1.1M755.3 301.4h1.1M751.4 300h1.1M732.9 292.9h1.1M725 290.5h1.1M692.2 282.5h1.1M683.9 280.8h1.1M671.7 278h1.1M666.6 278.6h1.1M888.8 366.5h1.1M879.4 356.4h1.1M872.2 351.8h1.1M864.4 344.7h1.1M853.5 335.6h1.1M840.4 327.3h1.1M832.5 323.8h1.1M796.9 306.3h1.1M790.6 302.7h1.1M736.8 284.2h1.1M692.5 273.7h1.1M684.6 271.8h1.1M680.7 270.8h1.1M672.7 269h1.1M905.9 359.2h1.1M895.2 349.5h1.1M889.3 344.8h1.1M878.3 335.7h1.1M845.1 315.7h1.1M838.1 312.1h1.1M821.2 303.2h1.1M799.6 293.6h1.1M779.9 287.1h1.1M765.3 281.6h1.1M749.8 276.9h1.1M741.9 274.7h1.1M729.5 272.2h1.1M709.5 267.7h1.1M701.6 265.9h1.1M697.5 265.2h1.1M677.5 261.2h1.1M672.9 261.3h1.1M929.9 359.5h1.1M923.7 354.7h1.1M922.4 352.1h1.1M917.3 347.2h1.1M866.8 313.6h1.1M839.7 299.3h1.1M831.3 296.6h1.1M817.3 290.2h1.1M814 288.6h1.1M810.6 287h1.1M795.5 281.6h1.1M761.3 270.7h1.1M733.9 263.7h1.1M726.8 261.2h1.1M718 260.3h1.1M710.5 258.3h1.1M706.4 257.6h1.1M690.4 254.8h1.1M678.6 252.5h1.1M956.6 359.5h1.1M949.6 354.7h1.1M933.4 340.4h1.1M931.1 338h1.1M874.7 304.2h1.1M869.5 300.1h1.1M862.5 296.7h1.1M858.1 295.4h1.1M854.2 293.9h1.1M843.5 289.1h1.1M834 284h1.1M811.2 276h1.1M803.2 273.7h1.1M788.3 268.7h1.1M761.5 261.1h1.1M746 257.2h1.1M738.2 255.4h1.1M703.3 248h1.1M694.8 247.4h1.1M680.3 399.5h1.1M661.5 463.3h1.1M711.1 449.8h1.1M723.3 426.5h1.1M720.6 471.9h1.1M738.7 453h1.1M738.7 448.3h1.1M739.6 390.2h1.1M673.5 515.2h1.1M713.1 499.1h1.1M728.9 488.9h1.1M757.5 463h1.1M770.4 438.9h1.1M762.7 391.8h1.1M687.2 530.7h1.1M713.7 519h1.1M728.7 514.7h1.1M770.7 481.4h1.1M773.2 477.1h1.1M785.9 461.5h1.1M792.1 424.3h1.1M701.9 547.2h1.1M742.7 529.6h1.1M817.1 442.9h1.1M816.7 430.4h1.1M815.8 418.4h1.1M806.6 391.6h1.1M723.3 560.4h1.1M790.6 523.2h1.1M816 499.5h1.1M835.3 408.5h1.1M578.4 422.8h1.1M569.6 443.3h1.1M584.6 443.7h1.1M608.3 439.2h1.1M534.1 443.6h1.1M552.1 448h1.1M601.9 449.3h1.1M528.6 452.6h1.1M522 457.1h1.1M600.8 462.8h1.1M527.2 467.2h1.1M582.9 472.9h1.1M598.7 472.7h1.1M501.3 467.4h1.1M509.9 470.5h1.1M547.9 480.3h1.1M558.8 480h1.1M934.1 327.5h1.1M930.8 348.4h1.1M928.1 365.5h1.1M928.3 377.8h1.1M927.3 391.3h1.1M917.7 467.3h1.1M917.3 475.7h1.1M915.6 495.7h1.1M913.1 504.7h1.1M984.2 412.1h1.1M983.8 416.7h1.1M981.9 422h1.1M981.8 430.6h1.1M954.6 311.1h1.1M954.2 317.5h1.1M950.8 343.7h1.1M950.5 346.3h1.1M949.7 349.8h1.1M948.3 362.6h1.1M947.5 378h1.1M944.8 390.4h1.1M893.3 456h1.1M890.9 465.4h1.1M890.2 470.5h1.1M889.3 472.3h1.1M888.3 476.7h1.1M888.8 477.9h1.1M444.9 362.8h1.1M435.3 317.8h1.1M337.9 331h1.1M414 325.9h1.1M410.6 273.7h1.1M429.9 286.1h1.1M456.2 284.4h1.1M343 366.4h1.1M312.9 343.7h1.1M336.9 357.7h1.1M261.7 332.3h1.1M413.3 337.5h1.1M320.3 277.6h1.1M364.4 356.3h1.1M281.9 368.6h1.1M302.4 317.2h1.1M290.7 344.3h1.1M360.3 376.7h1.1M231.4 386.3h1.1M426.6 379.9h1.1M354.7 274.9h1.1M430.8 273.7h1.1M255.8 349.2h1.1M416.4 368.5h1.1M376.9 379.5h1.1M332.7 310.6h1.1M393.9 316.7h1.1M267.3 321.2h1.1M210.5 297.5h1.1M398.6 360.1h1.1M361.2 310.8h1.1M296.3 325h1.1M356.8 354.3h1.1M217.6 344h1.1M414.3 359.6h1.1M717.9 324.7h1.1M838.1 331.7h1.1M864 334.5h1.1M737 363.3h1.1M725.1 340.1h1.1M838.3 485.7h1.1M757 346.9h1.1M798 497.4h1.1M885 348.6h1.1M746.4 482.1h1.1M830.5 315.6h1.1M764.2 509h1.1M757.3 358.8h1.1M764.4 448.7h1.1M893.6 315.8h1.1M841 458.3h1.1M867.6 466.6h1.1M886.8 341.6h1.1M889.2 393.5h1.1M852.8 318.1h1.1M506.6 480h1.1M602.9 543.5h1.1M671.7 450.5h1.1M591.9 564.6h1.1M676.6 531.2h1.1M540.3 506.3h1.1M596.5 566.5h1.1M439 237.8h1.1M482.2 194.2h1.1M434.3 293.5h1.1M379.4 201.5h1.1M312.6 285.8h1.1M364.6 212.7h1.1M453.8 297.6h1.1M387.7 286.8h1.1M454.2 210.6h1.1M341 299.7h1.1M398.8 233.3h1.1M379.4 263.4h1.1M376.4 299.2h1.1M482.2 294.1h1.1M351.2 242.7h1.1M476 300.2h1.1M360.9 236.1h1.1M475.2 310.1h1.1M415.4 280.4h1.1M433.5 301.9h1.1M308.3 232.2h1.1M445 222.3h1.1M333.7 297.1h1.1M400 228.8h1.1M342.8 233.1h1.1M463 310h1.1M454.7 311.6h1.1M476.1 249.7h1.1M429.2 257.9h1.1M383.3 194.8h1.1M400.5 241.8h1.1M395.3 265.5h1.1M419.7 292h1.1M428.7 214.3h1.1M464.6 223.6h1.1M412.4 244.3h1.1M401.3 221h1.1M413.2 235.7h1.1M359.8 263.5h1.1M344.4 263.2h1.1M461.9 243.1h1.1M463.4 242h1.1M348.4 289h1.1M308.3 277.1h1.1M426.9 266.8h1.1M355.9 241.4h1.1M470.7 235.9h1.1M396.2 219.6h1.1M469.6 209.5h1.1M336.1 217.2h1.1M422.6 241.3h1.1M397.1 222.4h1.1M386.4 264h1.1M441 213.7h1.1M367.2 258.1h1.1M372.2 242h1.1M362.2 225.2h1.1M356.6 217.3h1.1M421.1 208.4h1.1M345.9 265.7h1.1" stroke="#3cc04e"/><path d="M387.2 214h1.1M385.1 216.5h1.1M379.5 222.7h1.1M377.5 224h1.1M377.5 225h1.1M374.7 228.1h1.1M372.7 232.3h1.1M372.8 233.5h1.1M371.5 237.9h1.1M370.1 247.1h1.1M370.5 249.5h1.1M377 264h1.1M391.9 206.9h1.1M387.7 208.3h1.1M380.9 211.9h1.1M372.3 220.4h1.1M367.3 224.9h1.1M364 232.7h1.1M362.6 236.8h1.1M361.8 238.7h1.1M363.6 252.3h1.1M364 254.6h1.1M364.4 257.7h1.1M373.2 268.5h1.1M368.2 216.1h1.1M365.5 219.9h1.1M359.1 227h1.1M357.2 231.3h1.1M355.2 233.8h1.1M352.9 245h1.1M366.3 210.5h1.1M360.3 215.8h1.1M353.3 221.5h1.1M348.2 229.3h1.1M346.7 232.3h1.1M347.7 258.8h1.1M351.2 261.5h1.1M353.1 264.8h1.1M353.5 267.3h1.1M367.4 205.6h1.1M356.9 210.8h1.1M336.4 245h1.1M337.5 251.1h1.1M340.6 260h1.1M344.6 265.4h1.1M344.5 213h1.1M338.7 219.3h1.1M330.3 230.4h1.1M329.2 232.9h1.1M333.2 262.2h1.1M334.5 264.3h1.1M339 269.6h1.1M330.6 219.6h1.1M322.5 230.3h1.1M320.7 254.7h1.1M315.6 225.6h1.1M315.1 227.4h1.1M310.7 241.1h1.1M319.6 266h1.1M320.8 268.4h1.1M507.3 172.8h1.1M513.3 173.9h1.1M530.4 176h1.1M543.8 177.4h1.1M550.1 179h1.1M552.3 178.3h1.1M564.2 179.6h1.1M567.5 180.2h1.1M575.5 181.9h1.1M589.4 183.7h1.1M642.7 189.7h1.1M515.8 178h1.1M519.3 177.5h1.1M527.5 178.8h1.1M532.7 178.9h1.1M555.5 182.7h1.1M578.3 184.5h1.1M581 185.9h1.1M597.4 187.8h1.1M620.4 191.7h1.1M516.2 181.2h1.1M519.2 180.8h1.1M573 188.5h1.1M589.6 190.6h1.1M612.2 192.4h1.1M628.8 195.7h1.1M637.1 196.7h1.1M644.8 197.1h1.1M522.3 185.4h1.1M545 188.1h1.1M552.5 189.1h1.1M572.3 191.5h1.1M580 191.9h1.1M597.6 194.5h1.1M626.5 199.5h1.1M633.7 200.2h1.1M564 159.5h1.1M587.2 159.9h1.1M604.5 160.8h1.1M614 161.4h1.1M626.4 160.6h1.1M635.3 161.6h1.1M641.3 162.1h1.1M644.5 162.8h1.1M662.7 164h1.1M680.5 164.1h1.1M683 164.7h1.1M709.8 164.9h1.1M739 167.8h1.1M748.5 166.5h1.1M755.4 167.5h1.1M758.6 168h1.1M770.2 168.2h1.1M772.7 167.5h1.1M782.1 168.1h1.1M788.1 168.7h1.1M563.6 163.3h1.1M572 164.2h1.1M575.4 163.6h1.1M581.4 163.2h1.1M589.5 165.2h1.1M595.9 164.5h1.1M614.4 165.5h1.1M634.3 166h1.1M649.9 167.7h1.1M656.6 167.3h1.1M688.7 168.6h1.1M728.1 172h1.1M749.2 171.3h1.1M755.1 171.4h1.1M772.8 171.9h1.1M779.2 173.2h1.1M785.2 173.4h1.1M789.2 173h1.1M793.2 174.9h1.1M800.1 173.1h1.1M578 168.3h1.1M583.7 168.6h1.1M620 170h1.1M622.2 171.2h1.1M627.1 169.8h1.1M629.1 170.1h1.1M637.9 171.1h1.1M640.7 171.2h1.1M664.8 171.9h1.1M670.7 173.4h1.1M680.1 171.8h1.1M699.5 174.5h1.1M703.8 173.6h1.1M710.9 173.4h1.1M712.1 174.3h1.1M718.2 174.8h1.1M727.2 174.7h1.1M740.4 174.8h1.1M767.2 177.1h1.1M770 176.3h1.1M800 177.8h1.1M677.8 140.7h1.1M686.1 142.6h1.1M694.4 142h1.1M697.6 142.7h1.1M726.5 147h1.1M734.7 148.7h1.1M750.9 149.1h1.1M757.9 150.1h1.1M771.3 151.1h1.1M773.6 151.6h1.1M787.3 153.9h1.1M794 154.1h1.1M805.8 156.1h1.1M817.7 156.7h1.1M826.5 157.9h1.1M835 157.8h1.1M842.9 159.4h1.1M846.7 160.6h1.1M879.3 164.2h1.1M894.4 164.9h1.1M906.7 166.3h1.1M911.4 165.9h1.1M914.8 167h1.1M945.6 171.2h1.1M710 150.3h1.1M741.7 153.8h1.1M754.2 155.7h1.1M766.5 155.7h1.1M782.4 157.5h1.1M786.1 159.1h1.1M819.9 161.7h1.1M826.5 162.5h1.1M862.4 167.4h1.1M894.3 171.1h1.1M899 171.9h1.1M906.6 172.7h1.1M919.1 173h1.1M930.6 174.4h1.1M934.7 175.1h1.1M939.2 176.5h1.1M689.9 153.1h1.1M701.6 155h1.1M718.7 156.5h1.1M745.3 158.9h1.1M750.2 159.2h1.1M753.1 160.3h1.1M782.1 163.1h1.1M798.4 166.7h1.1M806.6 166.4h1.1M826.7 168.8h1.1M846.8 170.5h1.1M879.2 174.5h1.1M883.7 175.2h1.1M891.1 174.5h1.1M911.1 178.3h1.1M947.1 182h1.1M955.6 183.7h1.1M959.4 184.1h1.1M770.6 278.8h1.1M775.2 265.1h1.1M774.2 263h1.1M773.6 261.1h1.1M772.2 254.2h1.1M768.9 247.2h1.1M765.1 242.7h1.1M761.2 239.9h1.1M758.8 238.3h1.1M739.1 231.9h1.1M733.1 232.5h1.1M730 232.6h1.1M723.6 235.5h1.1M706 250.3h1.1M783.2 278.8h1.1M785.7 269.7h1.1M786.3 264.3h1.1M785.6 255.8h1.1M781.4 248.3h1.1M778.8 244.1h1.1M777.1 243h1.1M773.5 239.6h1.1M767.7 235.6h1.1M766 233.9h1.1M762.4 233.4h1.1M754.4 230.4h1.1M746.9 227.7h1.1M743 226.9h1.1M739.3 227.7h1.1M736.3 227.3h1.1M715.3 232.6h1.1M794.6 280.2h1.1M797.4 275.9h1.1M796.9 274.6h1.1M798.4 272.5h1.1M799 263.5h1.1M796.4 253.8h1.1M792.8 247.1h1.1M786.9 238.6h1.1M779.1 234.5h1.1M777.6 233.5h1.1M769.3 228.5h1.1M764.8 227.2h1.1M740.4 222.3h1.1M701.3 230.9h1.1M693.6 235.4h1.1M688.1 238.8h1.1M684.4 244.8h1.1M808.6 277.9h1.1M810.5 271h1.1M811 268.7h1.1M811.7 266.8h1.1M811.5 265.2h1.1M810.9 262.5h1.1M811.1 260.5h1.1M809.2 253.4h1.1M806.9 248.4h1.1M802.1 240.9h1.1M799.1 238.6h1.1M784.1 228.8h1.1M775.7 224.9h1.1M767.7 222.1h1.1M755.6 219.8h1.1M753 218.1h1.1M745.3 217.8h1.1M742.5 218.4h1.1M707.2 221.5h1.1M686.5 230.8h1.1M823.1 273.9h1.1M823.9 268.3h1.1M823.5 266.4h1.1M824.9 262.8h1.1M823.5 259.5h1.1M823 257.5h1.1M822.6 253.2h1.1M814.1 239.7h1.1M806.3 232.6h1.1M800.9 229.5h1.1M796.9 225.9h1.1M791.9 224.5h1.1M735.6 213.2h1.1M724.5 212.5h1.1M713.3 215.2h1.1M689.3 221.8h1.1M675.5 229.3h1.1M669.2 233.9h1.1M666.7 235.4h1.1M665.6 236.4h1.1M827.8 288.9h1.1M830.7 285.1h1.1M830.9 283.8h1.1M832.1 280.9h1.1M835.4 272.7h1.1M836.6 267.4h1.1M836.1 261.9h1.1M835.9 257.3h1.1M834 251.5h1.1M832.8 249.5h1.1M832 247.8h1.1M830.4 245.7h1.1M822.4 236h1.1M819.4 233.3h1.1M816.6 230.9h1.1M814.7 228.9h1.1M809.5 225.2h1.1M798.5 219.8h1.1M795.2 217.7h1.1M779.2 213.4h1.1M692.8 214.1h1.1M683.1 217.2h1.1M666 225.8h1.1M658.5 230.3h1.1M847.9 256.2h1.1M845.1 247.9h1.1M843.9 245.9h1.1M833.8 233.9h1.1M824 226.3h1.1M797.7 213h1.1M767.6 205.9h1.1M765.2 205.1h1.1M752.3 203.7h1.1M694.1 208.8h1.1M853.4 289.6h1.1M857.8 281.9h1.1M861.7 262.3h1.1M861 257.1h1.1M855.9 246.2h1.1M855.5 243.7h1.1M854.2 241.8h1.1M852.5 239.3h1.1M849.4 236.4h1.1M839.7 227h1.1M813.1 211.5h1.1M806.6 209.2h1.1M735 197.1h1.1M646.6 219.9h1.1M869.1 285.1h1.1M874.1 265.4h1.1M873.9 261.8h1.1M871.7 251.8h1.1M855.6 229.4h1.1M855.3 228.6h1.1M836.1 215h1.1M833.1 213h1.1M830.9 212.2h1.1M801.8 200.7h1.1M797.5 201.4h1.1M739.1 191.8h1.1M643.1 212.5h1.1M636.7 217.4h1.1M630.9 219.9h1.1M877.9 291.4h1.1M879.4 289.1h1.1M886.2 258.9h1.1M883.6 252.4h1.1M860.1 221.5h1.1M850.9 215.2h1.1M838.8 208.2h1.1M835.7 206.8h1.1M816.7 199.6h1.1M732 187.9h1.1M636.5 208.4h1.1M621.2 217.7h1.1M886 298.5h1.1M888.1 293.9h1.1M896.7 280.8h1.1M897.1 278.9h1.1M898.3 267.4h1.1M897.4 254.6h1.1M896.4 251.3h1.1M896.7 249h1.1M878.8 225.5h1.1M875.2 222h1.1M872.6 219.2h1.1M867.7 216.2h1.1M832.5 198.5h1.1M785.1 186.6h1.1M689.4 185.2h1.1M643.6 199.2h1.1M616 211.2h1.1M907.7 282.6h1.1M907.8 280.5h1.1M910.3 276.9h1.1M911.4 261.5h1.1M905.2 242.5h1.1M904.8 241.3h1.1M894.5 227.9h1.1M869.5 208.4h1.1M867.8 208h1.1M859.2 202.2h1.1M845.5 195.3h1.1M797 183.3h1.1M748.7 178.9h1.1M653 188.1h1.1M614.2 203.6h1.1M201.5 130.4h1.1M243.9 217.4h1.1M217.3 142.6h1.1M145.1 99.7h1.1M171.6 147h1.1M180.3 140.9h1.1M197.4 168.5h1.1M228.9 169h1.1M213.7 132.6h1.1M179.3 131.1h1.1M145.7 175.5h1.1M248.9 125h1.1M281.8 129.7h1.1M170.6 140.1h1.1M182.8 220.7h1.1M203.6 179.6h1.1M175.7 172.8h1.1M222.1 111.5h1.1M231.4 166.1h1.1M267 131.6h1.1M170.1 163.1h1.1M232.2 226.7h1.1M250.4 165.6h1.1M494.4 105.1h1.1M443.6 170.5h1.1M292.3 95.3h1.1M306.9 114.8h1.1M299.4 152.1h1.1M478.3 104.1h1.1M379.9 143.5h1.1M428 160.2h1.1M401 145.7h1.1M483.6 141.8h1.1M339.8 120.6h1.1M289.3 114.3h1.1M476 122.9h1.1M353.7 111.6h1.1M355.3 131.4h1.1M416.3 161.9h1.1M370.8 88.8h1.1M488.3 165.3h1.1M356.1 111.9h1.1M475.2 122.7h1.1M290.5 130.2h1.1M350 103h1.1M289.3 118.9h1.1M438.7 130.8h1.1M422.3 148.6h1.1M306.2 100h1.1M354 91.6h1.1M481.8 149.2h1.1M379.7 102h1.1M320.4 118.7h1.1M318.3 94.9h1.1M504.5 98h1.1M484.7 158.3h1.1M151 305.2h1.1M217.6 312.3h1.1M183.1 314.5h1.1M154 268.2h1.1M36.7 288.9h1.1M75.8 330h1.1M62.7 259.4h1.1M191.9 342.5h1.1M27.5 265.4h1.1M114.4 331.1h1.1M15.3 269.7h1.1M53.5 337h1.1M163.3 255.6h1.1M131.6 267.5h1.1M215.7 284.4h1.1M36.7 283.9h1.1M243.9 331h1.1M142.4 264.6h1.1M146.4 320h1.1M90.4 322.2h1.1M195.4 257h1.1M239.3 319.3h1.1M253 282.5h1.1M192.5 320.8h1.1M248.4 255.9h1.1M141.7 292.1h1.1M196.6 297.5h1.1M45.7 270.2h1.1M287.6 286.7h1.1M243.3 299.5h1.1M157 314h1.1M148.6 367.9h1.1M198.9 317.9h1.1M280.8 368h1.1M185.3 387.5h1.1M86.9 336.1h1.1M226.1 416.2h1.1M75.4 325.3h1.1M183.1 313.9h1.1M90.8 361.1h1.1M216.6 334h1.1M152.1 411h1.1M137.4 327.9h1.1M213.4 398.7h1.1M203.7 419.4h1.1M202.9 414h1.1M43.4 410.8h1.1M270.1 385.8h1.1M372.2 249.9h1.1M347.8 230.5h1.1M340.8 206.6h1.1M388.7 245.3h1.1M425.7 286.1h1.1M414 212.2h1.1M364 228.6h1.1M373.4 305.9h1.1M403.2 240.7h1.1M356.4 253.2h1.1M337.5 219h1.1M347.8 268.9h1.1M352.5 270.3h1.1M448.9 295.6h1.1M480.3 238h1.1M377.9 275.8h1.1M328.2 241.7h1.1M399.1 297h1.1M355.2 251.8h1.1M390.4 199.6h1.1M449.2 298.4h1.1M334 212.8h1.1M361.3 247.4h1.1M316 291.9h1.1M352.1 202.8h1.1M374.7 294.6h1.1M374 216h1.1M336.8 227.1h1.1M399.1 256.7h1.1M312.2 260.9h1.1M467.6 246h1.1M348.2 197.1h1.1M312.6 260.6h1.1M466.9 295.8h1.1M403.8 231.9h1.1M418.3 213.6h1.1M396.7 266.4h1.1M454 269.8h1.1M407.9 276.2h1.1M341.3 216.6h1.1M407.4 300.4h1.1M472.2 200.4h1.1M366.3 247.1h1.1M345 268.2h1.1M321.5 257.6h1.1M304.7 300.9h1.1M439.4 220.8h1.1M380.3 217.4h1.1M469.6 262h1.1M396.5 231.7h1.1M478.6 203h1.1M404.8 198.6h1.1M319.6 195h1.1M366 260.5h1.1M334.8 309.8h1.1M350.1 305.1h1.1M346.1 212.4h1.1M387 272h1.1M332.1 241.3h1.1M445.6 237h1.1" stroke="#2f9a44"/><path d="M452.1 208.2h1.1M451.6 210.2h1.1M449.8 210.7h1.1M447.3 211.2h1.1M445.6 212.8h1.1M442.2 215h1.1M440.8 216.8h1.1M438 219.3h1.1M437.7 221.8h1.1M433.2 229.8h1.1M431.1 234.7h1.1M430.7 237.4h1.1M430.5 246.2h1.1M431.4 251.3h1.1M431.1 252.8h1.1M432.6 256.4h1.1M433 257.4h1.1M435.4 260.3h1.1M448 207h1.1M446.1 208.1h1.1M442.6 209.9h1.1M430.5 221.2h1.1M427.9 224h1.1M426.1 226.3h1.1M424 232.9h1.1M422.3 234.2h1.1M423 236h1.1M422.5 238.5h1.1M421.7 241h1.1M422 242.7h1.1M422.1 245.3h1.1M422.7 248.5h1.1M422 250.2h1.1M422.9 252.3h1.1M423.4 253.7h1.1M425.3 257.6h1.1M438.2 209.3h1.1M436.9 208.7h1.1M431.6 212.7h1.1M430.4 213.6h1.1M428.5 214.1h1.1M424.1 218h1.1M419.1 225.1h1.1M415.9 229.1h1.1M416.6 230.6h1.1M414.7 234.8h1.1M413.7 242.2h1.1M412.6 243.7h1.1M413.8 249.3h1.1M413.6 248.8h1.1M413.3 250.5h1.1M415.2 255.2h1.1M417.1 258.5h1.1M418.5 261.7h1.1M419.3 263.2h1.1M423 212.3h1.1M407.7 230.6h1.1M406.9 231.1h1.1M406 234.6h1.1M404.6 246.9h1.1M405.5 251h1.1M411.5 263.4h1.1M428.4 204.8h1.1M417.6 211.3h1.1M417.3 211h1.1M412.9 213.9h1.1M411.2 214.4h1.1M402.5 224h1.1M399.9 230.1h1.1M397.4 235h1.1M396.5 236h1.1M396.4 246.7h1.1M398.8 255.9h1.1M400.3 259.6h1.1M403.2 264.4h1.1M411.1 209.3h1.1M408.5 211.4h1.1M393.9 225.3h1.1M388.2 236.7h1.1M387.4 238.5h1.1M392 258.6h1.1M402.6 209.7h1.1M397.8 213.2h1.1M393.4 216.6h1.1M380.6 252.2h1.1M386.3 263.2h1.1M437.2 194.5h1.1M445.4 193h1.1M455.8 190.9h1.1M458.2 189.5h1.1M469.2 187.8h1.1M477.3 185.1h1.1M477.9 185.9h1.1M481.7 184.5h1.1M484.4 183.8h1.1M489.9 183.9h1.1M500.1 181.8h1.1M502.9 180.2h1.1M505.6 178.7h1.1M437.5 197.7h1.1M444.8 196.2h1.1M461.8 192.2h1.1M476.7 188.9h1.1M478.8 188.5h1.1M484.9 187.6h1.1M492.2 185.6h1.1M495.3 184.6h1.1M497.7 184.4h1.1M499.9 183.5h1.1M442.4 199.7h1.1M448.4 196.8h1.1M452.7 197.6h1.1M456 196.3h1.1M463 193.8h1.1M474.1 193.1h1.1M478.7 191.6h1.1M487.1 190.1h1.1M489.4 188.9h1.1M498.3 187.7h1.1M516.6 174h1.1M524.5 174.5h1.1M527.8 175.4h1.1M547 179h1.1M580.1 183.3h1.1M600.3 184.3h1.1M604.9 185.8h1.1M614.7 186.5h1.1M625.6 188.9h1.1M525 177.7h1.1M544.4 180.9h1.1M547.1 181.4h1.1M558.4 183.2h1.1M570.3 184.3h1.1M575.1 184.7h1.1M589.4 187.1h1.1M595.2 187.9h1.1M609.3 189.6h1.1M633.5 192.9h1.1M637 192.3h1.1M640.4 193.2h1.1M645.8 193.7h1.1M511.5 180.9h1.1M527.8 182.5h1.1M544.7 185.7h1.1M560.7 186.9h1.1M563.5 187.4h1.1M566.4 187.8h1.1M606.5 193.2h1.1M609 192.2h1.1M507.8 182.9h1.1M525.5 185.1h1.1M538.6 187.1h1.1M566.5 190.3h1.1M591.9 194.9h1.1M600.5 194.6h1.1M605.3 196.3h1.1M608.6 195.6h1.1M612.4 196.2h1.1M628.9 198.9h1.1M588.6 381.4h1.1M583.6 381h1.1M570.6 379.6h1.1M552.8 382.6h1.1M549.5 385.1h1.1M544.6 386.4h1.1M534.1 394.5h1.1M555.2 376.5h1.1M540.4 381.7h1.1M537.8 382.2h1.1M532.8 383.5h1.1M527.1 386.5h1.1M526.2 389.6h1.1M589.2 368.1h1.1M574 368.6h1.1M571.5 368.6h1.1M551.9 370.6h1.1M539.8 372.9h1.1M520.3 385.4h1.1M512.7 389.4h1.1M597.7 363.4h1.1M595.2 363.3h1.1M590.5 362.3h1.1M570.3 361.2h1.1M560.5 362.8h1.1M558.2 363.2h1.1M540.9 365.5h1.1M537 367.4h1.1M532.1 368.3h1.1M530.3 369.3h1.1M528.2 370.2h1.1M524.1 371.8h1.1M520.3 373.6h1.1M516.6 373.6h1.1M514.9 376.5h1.1M506.1 381.7h1.1M503.5 384.1h1.1M501.1 386.6h1.1M566.5 415h1.1M552.7 425.9h1.1M598 425.5h1.1M544.6 431.7h1.1M560 441.9h1.1M546.4 448.5h1.1M556.2 450.2h1.1M596.7 449.6h1.1M521.3 448.4h1.1M553.1 456.9h1.1M565.4 464h1.1M517.5 465.1h1.1M551.7 471.7h1.1M567.2 472.8h1.1M618.4 468.5h1.1M497.4 465.5h1.1M625.8 475h1.1M559.8 415.3h1.1M561.5 411h1.1M577.9 402.8h1.1M542.8 399.7h1.1M566.1 411.6h1.1M572.6 403h1.1M563.9 407.5h1.1M566.3 400.3h1.1M558.2 402h1.1M559.4 402.7h1.1M552.9 407.6h1.1M581.9 414.6h1.1M549.8 409.5h1.1M599.5 405.8h1.1M586.8 392h1.1M536.7 404.1h1.1M592 398.9h1.1M581 389.8h1.1M555.8 394.2h1.1M560.3 406.5h1.1M555.8 411h1.1M585.6 389.5h1.1M572.2 409.2h1.1M552.4 408.1h1.1M553.8 391.4h1.1M567 402.1h1.1M578 400.3h1.1M570.2 407h1.1M567.1 401.3h1.1M553.2 394.2h1.1M560.9 402.4h1.1M543.2 411.1h1.1M566.6 403h1.1M573.8 410.1h1.1M538.8 401.4h1.1M596.6 412.4h1.1M554.3 406.2h1.1M559.7 412.2h1.1M560.3 394.7h1.1M571.8 412.1h1.1M576.4 402.6h1.1M538.5 394.1h1.1M555.4 400.5h1.1M577.5 399.1h1.1M566.5 396.7h1.1M553.5 406.3h1.1M575.6 402.8h1.1M624.9 240h1.1M630.3 241.4h1.1M631 259.4h1.1M634 259.2h1.1M636.2 260.4h1.1M625.2 277.7h1.1M639.5 277.9h1.1M932.8 332.9h1.1M931.1 346.2h1.1M930.5 351.4h1.1M929.8 362.5h1.1M927.7 381.2h1.1M924.3 407.2h1.1M922.5 413.6h1.1M922.5 427.1h1.1M921.1 437.3h1.1M917 478.1h1.1M914.1 498h1.1M912.7 520.2h1.1M910.9 531.9h1.1M910.4 534.9h1.1M943.4 365.7h1.1M941.9 378.6h1.1M942.3 381.4h1.1M941 390h1.1M939.5 395.8h1.1M940.5 398.1h1.1M936.8 428.6h1.1M936.2 431h1.1M936.4 433.6h1.1M934.8 445.4h1.1M934.2 448.8h1.1M932.1 467.8h1.1M931.3 471.4h1.1M968.3 293.5h1.1M964.7 331.1h1.1M963.6 344.1h1.1M963.6 348h1.1M961.9 354.2h1.1M961.4 358.8h1.1M956.5 401.8h1.1M956.5 414h1.1M953.5 422.8h1.1M975.6 392.4h1.1M970.4 436.4h1.1M969.2 445.6h1.1M969.2 454.3h1.1" stroke="#30c8c0"/><path d="M435.8 224.6h1.1M435.3 225.7h1.1M432.9 231h1.1M430.7 240.3h1.1M430.7 241.4h1.1M431 247.9h1.1M430.5 249.9h1.1M433.5 259.9h1.1M441 211.5h1.1M436.7 214.3h1.1M432.8 217.8h1.1M429 221.8h1.1M428.1 225.2h1.1M422.8 237.3h1.1M421.6 247.3h1.1M424.1 256.1h1.1M425.3 258.9h1.1M427.1 262.4h1.1M439.7 208h1.1M434.8 211h1.1M427 215.8h1.1M426 217.1h1.1M423.1 219.3h1.1M421.6 220.6h1.1M421.8 222.1h1.1M420.6 223.5h1.1M417.9 226.2h1.1M414 236.6h1.1M413.1 237.4h1.1M413.1 241.3h1.1M413.2 246.4h1.1M414.6 252.3h1.1M414.3 254.3h1.1M434.7 206h1.1M424.6 211.2h1.1M419 217h1.1M414.6 220.2h1.1M410.8 225.9h1.1M408.9 228.3h1.1M407.4 233.3h1.1M406.9 257.3h1.1M410.2 261.8h1.1M424.3 206.5h1.1M407 219.2h1.1M400.7 226.7h1.1M395.2 245.2h1.1M401.1 261.7h1.1M419.3 204.1h1.1M415 207.6h1.1M389.8 230.8h1.1M387.8 243.2h1.1M387.5 244.9h1.1M388.1 246.6h1.1M393.4 263h1.1M395.4 264.8h1.1M385.9 224.6h1.1M384.1 226.4h1.1M380.8 234h1.1M380.9 236.4h1.1M379.2 248.2h1.1M383.7 262.1h1.1M435.3 195.1h1.1M440.2 193.9h1.1M442.8 193.4h1.1M474.3 186.4h1.1M488.3 183.5h1.1M498 182.4h1.1M442.1 197h1.1M451.3 194.1h1.1M473.6 189.2h1.1M458.5 197.9h1.1M467.3 195.2h1.1M468.3 193.1h1.1M472.5 193h1.1M492.3 188.1h1.1M494.6 187.3h1.1M505 185.4h1.1M541.1 177.9h1.1M555.1 179h1.1M559.3 179.4h1.1M569.8 180.9h1.1M573.6 180.9h1.1M594.5 184h1.1M616.9 187.2h1.1M622.9 187.4h1.1M530.7 179.2h1.1M535.2 179.8h1.1M539.1 180h1.1M550.2 181h1.1M561.8 184h1.1M566.5 184h1.1M572.4 183.8h1.1M600 189h1.1M626.1 191.2h1.1M522.2 182.2h1.1M524.8 181.5h1.1M531 182.3h1.1M533.9 184.7h1.1M537.8 184.1h1.1M547.6 185h1.1M552 184.9h1.1M580.8 189h1.1M598.1 190.3h1.1M600.2 191.5h1.1M619.3 193.7h1.1M634.2 196.5h1.1M510.7 183.3h1.1M518.8 184.8h1.1M536.9 186.3h1.1M541.8 187.6h1.1M550 188h1.1M556.4 190.8h1.1M569.3 190.4h1.1M577.7 191.8h1.1M585.3 192.8h1.1M631.2 199.5h1.1M641.7 199.8h1.1M769.9 280.3h1.1M773.9 269.5h1.1M762.8 241.4h1.1M755.7 237.2h1.1M753.4 235.7h1.1M716.1 239.2h1.1M780.8 282.2h1.1M784.9 273.5h1.1M786.2 259.7h1.1M785.7 257.8h1.1M784 254.1h1.1M770.4 236.3h1.1M750.8 228.8h1.1M705.1 237h1.1M700.4 241.9h1.1M694.5 248.9h1.1M792.2 284.7h1.1M798.8 268h1.1M798.5 258.1h1.1M793.8 249.3h1.1M791 244.2h1.1M788.6 242h1.1M783.5 237.2h1.1M781.5 235.7h1.1M775.6 231.8h1.1M703.5 230.1h1.1M811 258.7h1.1M788.4 230.9h1.1M778.2 225.5h1.1M759.7 218.9h1.1M735.9 218h1.1M694.7 226.2h1.1M815.4 287.1h1.1M818.8 280.3h1.1M821.4 276.9h1.1M823.6 271.1h1.1M822.6 256.2h1.1M821.7 252.8h1.1M820.3 249.9h1.1M819.5 248.5h1.1M811.7 238.2h1.1M802.7 231.6h1.1M789.1 223.3h1.1M756.7 214.1h1.1M731.5 212.4h1.1M709.6 215.3h1.1M706.3 215.9h1.1M683.8 224.4h1.1M680.4 226.5h1.1M834.9 276.8h1.1M835.9 275.4h1.1M835.9 259.5h1.1M834.3 253h1.1M825.4 238.7h1.1M812.1 228.1h1.1M805.3 222.5h1.1M802.2 221.7h1.1M776.3 212.8h1.1M741 208.1h1.1M720.3 209.4h1.1M663.5 227.5h1.1M581.9 356.3h1.1M529.2 362.7h1.1M519.4 366.9h1.1M503.6 373.8h1.1M500 377.5h1.1M495.3 380.7h1.1M600.3 351.6h1.1M561.1 350.3h1.1M556.2 350.8h1.1M551.6 351.9h1.1M603.8 346.3h1.1M599.1 345.8h1.1M596.8 345.3h1.1M574.9 344.3h1.1M551 346.6h1.1M548.7 347h1.1M546.3 347.2h1.1M514.6 354h1.1M506.9 357.3h1.1M493.2 361.2h1.1M483.4 369.2h1.1M607.3 341.2h1.1M574 339.3h1.1M547.9 341.2h1.1M529 343.6h1.1M520 345.6h1.1M505.6 350.6h1.1M501.4 352h1.1M494.1 355.5h1.1M476.6 363.1h1.1M474.7 364h1.1M464.9 372h1.1M460.7 372.3h1.1M617.3 337.6h1.1M605.9 336h1.1M592.1 334h1.1M589.8 333.6h1.1M582.5 334.2h1.1M535.8 337.5h1.1M515.6 341.5h1.1M510.9 342.3h1.1M497.5 345.6h1.1M475.6 354.4h1.1M464.9 361.9h1.1M460.9 363.7h1.1M459.9 364.9h1.1M448.4 374h1.1M616.3 331.5h1.1M607.4 329.7h1.1M595.6 329.1h1.1M590.9 329h1.1M583.9 328.7h1.1M579.2 328.4h1.1M550.8 328.9h1.1M544.2 330.6h1.1M539.5 331h1.1M523.6 333.5h1.1M491.2 341.9h1.1M479.3 346.4h1.1M468.2 351.7h1.1M446.6 364.7h1.1M438.1 371.5h1.1M603.9 324h1.1M596.7 324.6h1.1M592.3 323h1.1M582.9 322.9h1.1M580.6 322.9h1.1M564.4 324.3h1.1M534.5 326.5h1.1M532.5 327.3h1.1M529.8 326.9h1.1M525.2 327.5h1.1M520.6 328.1h1.1M491.3 336.5h1.1M468.3 343.7h1.1M466.9 344.8h1.1M629.6 322.5h1.1M623.3 320.8h1.1M597.9 319.3h1.1M588.7 318.8h1.1M561.3 319.4h1.1M545.2 320.1h1.1M540.8 320.7h1.1M494 328.6h1.1M488.3 330.9h1.1M478.1 334.1h1.1M472.2 336.3h1.1M465.6 338.1h1.1M458.5 341.6h1.1M456.8 342.5h1.1M440.8 350.7h1.1M626.3 316.3h1.1M624.1 316h1.1M622 315.4h1.1M614.9 315.2h1.1M608.2 314.7h1.1M592.3 313.5h1.1M574 312.7h1.1M567.2 312.9h1.1M548.9 313.9h1.1M546.6 314.1h1.1M538.1 316.3h1.1M529.1 317.2h1.1M519.9 318h1.1M503.8 319.9h1.1M492.3 324.3h1.1M475.6 328.9h1.1M452.6 336.1h1.1M445.8 339.8h1.1M617.9 311.2h1.1M602.6 308.8h1.1M586.7 308.8h1.1M570.9 308.4h1.1M550.5 308.9h1.1M546 309.4h1.1M541.9 310.7h1.1M530.3 310.9h1.1M523.7 311.9h1.1M521.7 312.6h1.1M502 315.9h1.1M499.2 315.6h1.1M489.3 318.9h1.1M487.2 319.4h1.1M475.3 323.3h1.1M462 326.3h1.1M432.8 337.8h1.1M423.2 343.7h1.1M417.5 346.4h1.1M409.7 351.6h1.1M407.8 354.1h1.1M614.7 305.2h1.1M612.4 305.3h1.1M585.7 303.5h1.1M558.8 303.5h1.1M556.7 304.3h1.1M545.5 304.8h1.1M543 304.3h1.1M520.5 306.3h1.1M507.4 308.5h1.1M499 310.5h1.1M496.8 310.8h1.1M488.1 312.6h1.1M477.2 317.3h1.1M468.2 318.9h1.1M460.2 321.5h1.1M447.3 326.9h1.1M438.6 329.3h1.1M431.6 332.8h1.1M426.5 333.8h1.1M419.8 337.5h1.1M416.3 341h1.1M412.1 342.5h1.1M405.6 346.5h1.1M633.3 302.3h1.1M631.2 301.8h1.1M611.2 300.3h1.1M604.7 299.4h1.1M595.8 299.3h1.1M589.2 298.7h1.1M553.7 299.3h1.1M506 305.4h1.1M485.6 307.7h1.1M481.7 309.1h1.1M459.4 315.5h1.1M448.1 319.9h1.1M410.1 335.3h1.1M407.5 337.5h1.1M394.3 345.3h1.1M620.8 296.7h1.1M618.8 296h1.1M616.9 295.2h1.1M599 295.2h1.1M597 294.3h1.1M583.8 293.6h1.1M581.6 294.5h1.1M579.4 293.5h1.1M568.4 294h1.1M559.7 295h1.1M546.3 294.6h1.1M544.1 295h1.1M522.4 297.3h1.1M518.3 298.4h1.1M514.2 299.3h1.1M498.8 301h1.1M459.2 310h1.1M455.1 311.2h1.1M445.4 314.5h1.1M439 316.2h1.1M429.5 319.8h1.1M425.3 321.1h1.1M419.4 323.3h1.1M418.2 324.5h1.1M402.4 332.3h1.1M393.6 336.8h1.1M634.8 293.1h1.1M621.8 291.9h1.1M609 290.3h1.1M591.6 289.3h1.1M580.7 288.8h1.1M556.7 290.4h1.1M530.3 291h1.1M512.9 292.9h1.1M487.5 297.5h1.1M475.5 300.7h1.1M404.9 325.6h1.1M392.7 330.1h1.1M382.3 335.5h1.1M366.5 347.2h1.1M360.6 350h1.1M359.4 351.2h1.1M629.3 287.6h1.1M620.7 286.9h1.1M609.8 286.5h1.1M588.4 285.4h1.1M566.8 285.1h1.1M564.6 285h1.1M555.9 284.9h1.1M553.7 285.2h1.1M523.8 288h1.1M513.2 289.4h1.1M486.1 294.2h1.1M452.5 300.8h1.1M430.9 307.6h1.1M415.7 313.3h1.1M403.6 319h1.1M396.3 320.5h1.1M394.3 322.9h1.1M374.8 332.5h1.1M631.8 360.4h1.1M617.2 357.5h1.1M612.2 357h1.1M693.2 381.2h1.1M629.1 347.1h1.1M685.8 353.5h1.1M674.2 348.2h1.1M670 346.7h1.1M630.9 335.6h1.1M732 366.2h1.1M671.9 334.3h1.1M775.5 384.1h1.1M767.7 373.4h1.1M732.7 345.8h1.1M703.3 331.4h1.1M675.3 321.1h1.1M644.1 314.7h1.1M778 358.7h1.1M752.5 341.5h1.1M745.8 337.6h1.1M671.5 309.9h1.1M805.3 361.4h1.1M783.3 342.9h1.1M748.7 324h1.1M713.9 310.6h1.1M694 304.2h1.1M834.9 363.7h1.1M833.9 361h1.1M785.7 328.9h1.1M762.4 315.9h1.1M719.5 300.4h1.1M711.9 297.7h1.1M699.4 294.5h1.1M678.7 289.7h1.1M674.1 289.3h1.1M809.6 326.2h1.1M783.2 311.2h1.1M696.3 283.5h1.1M687.5 282.3h1.1M870.6 349.3h1.1M855.7 338h1.1M830.5 321.4h1.1M811.9 312.7h1.1M807.9 311.2h1.1M805.7 308.9h1.1M768.5 293.7h1.1M760.6 291.2h1.1M873.8 333.9h1.1M852.3 319.3h1.1M831.2 308.5h1.1M753.6 278.1h1.1M713.9 268.1h1.1M705.4 266.9h1.1M689.2 264h1.1M681.4 262.2h1.1M920.3 349.6h1.1M910.6 342.8h1.1M907.2 340.6h1.1M876.3 319.5h1.1M869.2 315.8h1.1M856.8 308h1.1M836 297.7h1.1M824.8 293.1h1.1M802.3 284.6h1.1M772 274.6h1.1M746.4 266h1.1M741.8 265.5h1.1M730.5 262.3h1.1M694.2 255.7h1.1M945.1 349.7h1.1M864.6 298.9h1.1M780.4 266.6h1.1M742.2 256.2h1.1M687.4 245.5h1.1M621.9 250h1.1M625.5 249.7h1.1M633.7 250.5h1.1M636.9 250.6h1.1M640.1 250.3h1.1M625.4 259.5h1.1M628.2 259.8h1.1M643.4 260.2h1.1M628 268.9h1.1M630.7 270.1h1.1M636.6 269.9h1.1M640.3 270h1.1M628.2 277.6h1.1M636.9 278.4h1.1M932.5 335.8h1.1M931 338h1.1M927.9 375.2h1.1M927.3 383.9h1.1M928.5 387.5h1.1M925.6 393.8h1.1M925.4 403.8h1.1M921.8 416.3h1.1M921.6 421h1.1M922.6 424.6h1.1M919.5 455h1.1M917.9 465h1.1M916.9 473.5h1.1M916.5 485h1.1M913.7 507.9h1.1M912.7 514.4h1.1M911.3 522.7h1.1M911.7 526h1.1M909.7 538.6h1.1M943.7 369.5h1.1M943.1 373.4h1.1M941 386.7h1.1M938.7 401.1h1.1M938.8 404.6h1.1M938.5 410.9h1.1M937.6 416.2h1.1M936.6 425.3h1.1M935.2 454.4h1.1M976.6 378.3h1.1M975.6 381.7h1.1M976 396.1h1.1M973.3 402.3h1.1M974.3 404.5h1.1M972.7 408h1.1M973.1 416.5h1.1M972.8 418.9h1.1M972.4 424.4h1.1M968.4 457.4h1.1M967 461.2h1.1M395 113.6h1.1M300.3 153.7h1.1M363 99.7h1.1M289.6 111.2h1.1M319 106.4h1.1M292.4 147.6h1.1M408 119.1h1.1M475.6 105.8h1.1M494.7 141.9h1.1M297.2 120.6h1.1M505.4 104.4h1.1M341.3 170.8h1.1M460.6 113.5h1.1M504.4 129.9h1.1M485.2 128.2h1.1M384.5 122.4h1.1M372 168.4h1.1M446.6 150.4h1.1M414.4 103.9h1.1M313.1 113.2h1.1M310.5 97.6h1.1M284.2 166.2h1.1M307.8 146.1h1.1M455.2 130.5h1.1M354.2 117.6h1.1M290.1 147.1h1.1M416.1 169.6h1.1M373.5 107.7h1.1M318.8 116.3h1.1M377.4 106.8h1.1M340 96.9h1.1M296.5 108.8h1.1M506.2 89.9h1.1M468.1 163.1h1.1" stroke="#2cb090"/><path d="M620.1 122.6h1.1M632.2 121.4h1.1M637.6 119.7h1.1M661.4 119.2h1.1M668.8 117.7h1.1M631.9 458.6h1.1M664.5 441.3h1.1M642.2 470.2h1.1M681.8 450.8h1.1M701.8 401.3h1.1M669.2 480.3h1.1M674.2 476.7h1.1M692.2 486.9h1.1M741.6 444.6h1.1M748 428.7h1.1M747.1 408.8h1.1M681.2 513.5h1.1M763.6 455.3h1.1M770.2 430.5h1.1M761.1 388.2h1.1M776.4 473.1h1.1M787.7 457.3h1.1M708.4 543.8h1.1M736.2 532.6h1.1M764.1 514.9h1.1M783.3 500.2h1.1M804 476.1h1.1M811.9 459.4h1.1M813.9 455.3h1.1M744.8 551.9h1.1M823.2 491.5h1.1M841.5 445h1.1M840.9 436.6h1.1M832.6 400.8h1.1M550.1 409.3h1.1M555.9 414.4h1.1M555.6 416.3h1.1M544.3 410.2h1.1M546.7 413.6h1.1M550.1 413.8h1.1M549 417.2h1.1M552.9 418.6h1.1M537.1 411.4h1.1M536.5 412.8h1.1M540.1 416h1.1M547.1 420.8h1.1M530.2 412.6h1.1M532.6 414.7h1.1M533.3 415.8h1.1M532.7 417.3h1.1M545.2 424.3h1.1M524.6 414.7h1.1M524.4 417.4h1.1M529 418.9h1.1M528.7 420.4h1.1M530.6 421.2h1.1M530.4 422.8h1.1M532.2 423.6h1.1M537.8 427.6h1.1M515.4 415h1.1M517.7 415.9h1.1M516.1 418.9h1.1M520.4 419.2h1.1M522.3 420h1.1M526.8 427.2h1.1M531.7 429.9h1.1M510.3 417.1h1.1M511.8 418.1h1.1M513.4 421.8h1.1M516.1 423.8h1.1M515.5 425.4h1.1M519.1 428.6h1.1M521.5 429.2h1.1M523.8 429.8h1.1M528.6 432.4h1.1M502.4 418.4h1.1M503.4 419.6h1.1M505.5 421.8h1.1M508.7 426.5h1.1M512 428.3h1.1M513.4 430.8h1.1M516.9 432.5h1.1M496.8 419.4h1.1M496.9 422h1.1M499.3 422.8h1.1M499.6 424h1.1M501.2 425h1.1M504.8 428.1h1.1M505.1 429.4h1.1M507.1 431.7h1.1M512.2 435.9h1.1M516.7 438.8h1.1M521 439.9h1.1M488.5 419.4h1.1M491.7 420.2h1.1M491.9 422.7h1.1M493 423.8h1.1M493.8 427.7h1.1M495.1 428.7h1.1M497.6 430.8h1.1M501.7 432.3h1.1M503.6 434.5h1.1M503 436.4h1.1M507.9 439.1h1.1M510 439.7h1.1M514.5 442.6h1.1M482.5 420.4h1.1M485.1 422.5h1.1M487.1 423.4h1.1M488.3 429.8h1.1M491.8 433h1.1M494.7 436.5h1.1M498 436.7h1.1M497.9 439.9h1.1M501.5 439.9h1.1M500.5 442.1h1.1M504.2 443.7h1.1M476 421.5h1.1M477.1 425.2h1.1M478.9 426.2h1.1M483 433.3h1.1M484.5 434.3h1.1M486 435.3h1.1M488.7 437.3h1.1M489.7 438.4h1.1M488.4 440.5h1.1M490.1 441.4h1.1M492.4 442h1.1M497.9 446.2h1.1M500.4 446.6h1.1M501.7 447.7h1.1M468.7 422.7h1.1M471.4 428.8h1.1M473.6 429.6h1.1M473 431.1h1.1M474.8 432h1.1M475.8 433.1h1.1M477.2 435.6h1.1M477.7 436.9h1.1M479.5 437.7h1.1M483.9 440.6h1.1M487.2 444h1.1M491.9 448.4h1.1M496.7 451.3h1.1M499.1 451.8h1.1M499.9 453.2h1.1M462.2 423.8h1.1M462.5 425h1.1M465.4 428.4h1.1M470.6 432.5h1.1M468.8 434.3h1.1M471.8 436.3h1.1M472.8 440.3h1.1M478.2 446h1.1M481.6 447.7h1.1M485.4 449.3h1.1M494.5 455.1h1.1M577.4 416.8h1.1M548.3 424.7h1.1M561.3 428.1h1.1M566.1 428.5h1.1M576.5 450.6h1.1M591.4 449.1h1.1M605.9 447.1h1.1M539.3 453.2h1.1M594.1 457.8h1.1M512.6 454.7h1.1M530.8 459.8h1.1M554.9 464.6h1.1M509.6 461.4h1.1M561.8 473.7h1.1M553.6 479.5h1.1M563.8 481.6h1.1M574.5 480h1.1M809 375.5h1.1M809.5 382.1h1.1M810.2 384.2h1.1M613.6 344.9h1.1M612.7 357.1h1.1M613.9 365h1.1M474.1 434.7h1.1M475.8 443.1h1.1M573.2 411.3h1.1M535.8 405.9h1.1M548.4 390.4h1.1M550.5 407.1h1.1M581.5 403.7h1.1M579.3 397.2h1.1M579.3 390.8h1.1M561.5 406.6h1.1M568.5 406.8h1.1M553.8 393.4h1.1M543.7 413.2h1.1M567.3 408.7h1.1M548.9 387.5h1.1M566.2 384.9h1.1M572.9 411.6h1.1M553 401h1.1M570.9 398.3h1.1M540.5 402.6h1.1M574.8 392.5h1.1M560.5 412.1h1.1M541.4 413.8h1.1M566.3 401h1.1M584.9 394.6h1.1M560.1 390.9h1.1M574.1 420.4h1.1M526.5 382.5h1.1M592.3 409.5h1.1M577.2 410.4h1.1M579.7 392.5h1.1M925.9 329h1.1M924.8 343.7h1.1M924.9 351.2h1.1M921.6 363.1h1.1M920.9 382.5h1.1M920.3 393.5h1.1M918.9 400.9h1.1M915.7 417.9h1.1M914.7 421.5h1.1M913 428.5h1.1M913.5 444h1.1M912.7 455.1h1.1M910.5 463.3h1.1M909.4 476.1h1.1M910.4 479.7h1.1M909.1 483.1h1.1M907.2 501.9h1.1M906.5 505.6h1.1M947.1 343h1.1M946.1 346h1.1M944.8 353.1h1.1M944.4 355.8h1.1M944.5 358.8h1.1M942.1 384.6h1.1M940.6 392.9h1.1M939 407.7h1.1M936.9 419.3h1.1M934.7 439.5h1.1M932.4 464.8h1.1M915.6 375.7h1.1M913 394.8h1.1M912 397.8h1.1M908.8 426.9h1.1M908.2 430.8h1.1M906.6 441.3h1.1M906 444.3h1.1M905.8 448.8h1.1M905.4 462.9h1.1M903.9 477.8h1.1M900.6 509.9h1.1M899.4 512.1h1.1M952.2 329.6h1.1M951.3 333.5h1.1M951.7 339.9h1.1M950.6 352.2h1.1M949.5 355.5h1.1M947.6 365.7h1.1M947.4 374.4h1.1M946.7 381.7h1.1M945.8 384.4h1.1M996.9 316.6h1.1M996.6 320.3h1.1M996.7 326.1h1.1M111.5 437.9h1.1M120.8 433.7h1.1M123.4 445.4h1.1M148.9 483.2h1.1M151.2 493.9h1.1M143.7 434.1h1.1M144.1 442.9h1.1M157.5 478h1.1M194.5 482.5h1.1M197.2 490.9h1.1M193.2 454.3h1.1M213.7 508.3h1.1M232.7 524.2h1.1M227.2 485.5h1.1M245.3 475.3h1.1M248.3 484.3h1.1M254.6 495.3h1.1M260 477.7h1.1M277.7 533h1.1M274.7 496.2h1.1M297.2 523.1h1.1M313.6 538.3h1.1M314.5 512.1h1.1M324.2 530.6h1.1M193 231.8h1.1M147.2 162.2h1.1M232.2 219.6h1.1M222.4 203.4h1.1M256.3 193.9h1.1M143 184.5h1.1M262.7 187.2h1.1M177.1 124.5h1.1M149.3 197h1.1M199.5 134h1.1M240.5 196.7h1.1M189.2 186.1h1.1M163.5 181.1h1.1M238.6 202.9h1.1M205.8 181.3h1.1M144 180.9h1.1M192.6 119.9h1.1M199.6 158.3h1.1M149.6 116.7h1.1M247 211.1h1.1M209 216.4h1.1M271.6 322.4h1.1M180.5 267.8h1.1M38.7 306.2h1.1M292.8 331.5h1.1M243.6 276.9h1.1M38.4 291.9h1.1M122.5 285h1.1M45.9 286.5h1.1M245.4 319.1h1.1M176.5 333.2h1.1M80.3 312.3h1.1M15.4 295.8h1.1M104.4 312.5h1.1M30.6 323.4h1.1M176.3 317.5h1.1M213.1 284.2h1.1M53 301h1.1M225.3 334.1h1.1M181.9 265.7h1.1M114.3 314.2h1.1M210.5 280.2h1.1M21.7 257.1h1.1M274.8 304.4h1.1M149.3 295.5h1.1M32.5 271.5h1.1M186.3 285.9h1.1M44.5 305.3h1.1M265.9 318.3h1.1M198.8 255.2h1.1M46.9 317h1.1M244.2 325.2h1.1M32.9 266h1.1M174.2 281.3h1.1M141.5 294.8h1.1M22.5 305.9h1.1M270.8 265.5h1.1M130.9 261.8h1.1M265.8 309.8h1.1M293.3 267h1.1M130.6 316.6h1.1M83.9 342.6h1.1M828.8 407.7h1.1M811.8 401.7h1.1M770.5 348.9h1.1M795.3 374.9h1.1M882.5 434.4h1.1M810.7 372.8h1.1M858.4 427.6h1.1M751.7 408.1h1.1M870.1 383.8h1.1M749.9 450.3h1.1M797.5 362.6h1.1M902 362.7h1.1M767.5 426.5h1.1M773.2 327.4h1.1M790 426.4h1.1M811.2 428.5h1.1M865.9 395.6h1.1M721.8 390.2h1.1M788.6 440.4h1.1M766.7 452.8h1.1M757.6 356.4h1.1M772.4 512.9h1.1M710.5 385.2h1.1" stroke="#d6d630"/><path d="M368.6 209.3h1.1M365.1 210.6h1.1M360.9 214.8h1.1M358.8 217.4h1.1M357 218.6h1.1M353.3 223.1h1.1M345.4 239.9h1.1M344.5 247.3h1.1M344.8 249.9h1.1M348 256.3h1.1M365.1 205.8h1.1M351.6 214.4h1.1M347.8 219.1h1.1M344.6 221.6h1.1M343.5 222.8h1.1M341.2 227.2h1.1M339.3 228.4h1.1M338.5 232.5h1.1M337.6 233.4h1.1M337.2 236.5h1.1M337.2 237.9h1.1M335.6 240.7h1.1M336.2 247.8h1.1M337.9 254h1.1M338.4 256.1h1.1M341.7 260.9h1.1M343.2 263.6h1.1M347.1 267.8h1.1M352.2 208.5h1.1M348.8 210.9h1.1M347.3 211.7h1.1M340.5 217.9h1.1M327.8 242h1.1M327.2 244.9h1.1M328.5 254.2h1.1M330.4 258.4h1.1M336.8 266.7h1.1M339 211.9h1.1M337 212.4h1.1M335.2 213.4h1.1M334.4 216.2h1.1M327 223.4h1.1M322.6 228.6h1.1M321.9 231.2h1.1M318.4 241.7h1.1M318.1 244h1.1M318.7 247.4h1.1M324.1 261.4h1.1M326.9 214.1h1.1M324.5 217.1h1.1M317.4 223.7h1.1M309.5 242.5h1.1M310.4 249.4h1.1M311.4 253.9h1.1M315 260.4h1.1M689.8 142.7h1.1M714.7 145.2h1.1M730.1 147h1.1M742.9 148.2h1.1M762 151h1.1M802.4 153.9h1.1M830.8 159.1h1.1M855.3 161.1h1.1M858.5 160.4h1.1M871.1 162.5h1.1M958 171.8h1.1M682.1 146.5h1.1M758.5 156.1h1.1M770.4 156.3h1.1M798 159.7h1.1M835.3 164.6h1.1M891.3 170.4h1.1M958.6 177.9h1.1M714.3 157.4h1.1M722.2 156.4h1.1M726.5 156.4h1.1M766.4 162.5h1.1M791 165.1h1.1M843.3 169.9h1.1M854.2 173.2h1.1M862.5 172.9h1.1M887.4 176.5h1.1M624.6 121.8h1.1M629.1 121.8h1.1M641.5 120.5h1.1M652.7 119.5h1.1M665.2 118.1h1.1M909 302.1h1.1M920.7 281.8h1.1M921.7 278.5h1.1M913.2 233h1.1M899.2 218.1h1.1M886.6 209.5h1.1M860 195h1.1M848.4 189.9h1.1M823 183.1h1.1M778.2 174.9h1.1M725.9 171.9h1.1M716.3 172.3h1.1M705.2 173.2h1.1M923.4 299.1h1.1M931.1 288.3h1.1M933.1 284.2h1.1M936.8 267.4h1.1M937.3 264h1.1M936 258.3h1.1M935.5 254.3h1.1M932.9 248.2h1.1M931.2 243.4h1.1M912 218.2h1.1M909.4 216.7h1.1M894.2 204.9h1.1M851.8 185h1.1M754.6 168.4h1.1M708.2 168.8h1.1M662.6 175.3h1.1M931.1 306.1h1.1M933 303.4h1.1M936.2 300.6h1.1M938.9 296.7h1.1M940.7 292.2h1.1M948 277.5h1.1M887.3 192.6h1.1M815.7 170.4h1.1M807.3 167.6h1.1M644 172.8h1.1M634.1 176.2h1.1M946.6 304h1.1M951.6 295.9h1.1M959.9 276h1.1M955.7 240.3h1.1M954.6 238.6h1.1M931 210.6h1.1M902.2 192.9h1.1M889.7 186.6h1.1M750.2 158h1.1M705.3 158.6h1.1M659.3 164.1h1.1M673.9 388.8h1.1M672.7 386h1.1M666.4 381.2h1.1M659.1 373.6h1.1M622.6 357.9h1.1M624.3 346.3h1.1M706.7 369h1.1M688.2 356h1.1M682.3 351.5h1.1M665.9 345.2h1.1M723.3 359.3h1.1M668.1 332.7h1.1M753.6 361.3h1.1M742.7 352h1.1M714.1 336.8h1.1M793.3 376.5h1.1M777.2 355.8h1.1M727.7 328.7h1.1M716.6 323.7h1.1M676 310.6h1.1M818.2 373.9h1.1M789.9 347.2h1.1M763.9 330.8h1.1M698.9 304.7h1.1M668.7 298.3h1.1M822.3 351.5h1.1M814.4 347.4h1.1M783.5 326.6h1.1M746.8 310h1.1M735.5 305.5h1.1M864.1 369.1h1.1M736.1 294.6h1.1M716.5 288.6h1.1M712.6 287.5h1.1M701 283.8h1.1M783.9 299.3h1.1M780 297.9h1.1M764.7 292.3h1.1M756.4 290.1h1.1M912.9 364h1.1M865.2 327.4h1.1M858.6 323.4h1.1M816.9 301.9h1.1M794.5 292.9h1.1M787.7 289.7h1.1M896.3 331.6h1.1M860.5 309.7h1.1M846.4 302.8h1.1M829.1 294.4h1.1M822 291.2h1.1M757.5 269.5h1.1M714.1 259.4h1.1M960.7 364.7h1.1M941.8 347.4h1.1M902.4 319h1.1M891.8 313.3h1.1M885.7 309.4h1.1M836.6 285.9h1.1M825.5 281.6h1.1M817.9 279h1.1M769.5 262.9h1.1M682.9 245.7h1.1M624.7 460h1.1M659.6 444.4h1.1M677.4 426.7h1.1M677.5 422.5h1.1M682 415h1.1M682.2 407.2h1.1M656.2 466.5h1.1M673 457.7h1.1M693.5 440.3h1.1M698.1 432.5h1.1M705 417h1.1M702.5 409h1.1M656.3 485.6h1.1M685.2 470.6h1.1M691.4 468h1.1M695.6 464.3h1.1M701.4 461.5h1.1M718.9 438.3h1.1M727.6 418.9h1.1M723 403.2h1.1M722 395.6h1.1M717 392.2h1.1M710.1 478.4h1.1M726.7 463.7h1.1M734.9 456.6h1.1M745.6 436.7h1.1M748.6 420.6h1.1M748.8 416.7h1.1M750.4 412.8h1.1M745.6 401.2h1.1M742.6 393.7h1.1M718.6 495.7h1.1M764.9 451h1.1M764.7 446.5h1.1M770.1 434.7h1.1M770.9 426.5h1.1M771.9 422.6h1.1M766.2 395.4h1.1M732.8 510.3h1.1M739.8 507.8h1.1M743.3 503.2h1.1M753.5 496.3h1.1M765 484.4h1.1M780.3 469.5h1.1M790.8 408.6h1.1M783.7 389.9h1.1M747.4 525.3h1.1M753.6 522.2h1.1M776.7 509h1.1M799.8 484.9h1.1M817.8 434.6h1.1M809.7 402.8h1.1M807.7 507.3h1.1M838.3 457.5h1.1M839 420.3h1.1M837.2 412.4h1.1M825.9 389.8h1.1M825.4 386.1h1.1M550.8 410.4h1.1M552.3 412.8h1.1M551.7 417.5h1.1M541.5 417h1.1M534.8 418.1h1.1M534.4 419.7h1.1M535.7 420.7h1.1M540.3 421.9h1.1M542.1 424.3h1.1M527.1 415.5h1.1M533.9 424.4h1.1M525 421.9h1.1M524.4 425.1h1.1M532.5 431.3h1.1M510.6 415.8h1.1M511.7 419.5h1.1M516.4 422.3h1.1M518.2 427.4h1.1M526.1 432h1.1M529.2 433.9h1.1M504.3 416.8h1.1M508.9 425h1.1M511.2 427.1h1.1M520.6 434.1h1.1M498.5 417.8h1.1M500.3 426.7h1.1M511.3 434.7h1.1M513.8 438.6h1.1M494.5 426.1h1.1M501.2 434h1.1M505.6 436.8h1.1M512.5 440.1h1.1M485.2 426.5h1.1M491.8 431.6h1.1M491.5 434.6h1.1M495.5 434.7h1.1M497.9 438.3h1.1M507.8 445.4h1.1M509.1 446.4h1.1M475.5 422.9h1.1M479.5 423.4h1.1M478.7 427.5h1.1M478.6 428.9h1.1M485.9 436.8h1.1M494.9 444.2h1.1M469.2 423.9h1.1M470.6 424.9h1.1M472.5 427.2h1.1M480.7 440.3h1.1M489.8 447.8h1.1M463.4 427.5h1.1M465.4 431h1.1M473.8 441.4h1.1M476.4 442h1.1M481.6 446.1h1.1M489 450.9h1.1M487.5 453.5h1.1M486.5 270.2h1.1M488 269.2h1.1M492.2 266.2h1.1M495.6 263.7h1.1M496.6 262.9h1.1M498.4 262.6h1.1M505 256.5h1.1M507.1 256.3h1.1M509.7 254.7h1.1M516.1 249.4h1.1M925.4 332.1h1.1M925.6 334.9h1.1M922.8 353.9h1.1M922.7 356.4h1.1M919.8 385.2h1.1M918.5 388.2h1.1M914.4 435.9h1.1M914.1 438.7h1.1M913.9 447.5h1.1M910.3 466.2h1.1M907.2 485.8h1.1M908.1 491.8h1.1M907.6 498.9h1.1M914.3 379.3h1.1M912.9 391h1.1M912.2 401.3h1.1M910.9 413.1h1.1M910 418.1h1.1M909.6 420.4h1.1M908.9 434.7h1.1M908.8 438h1.1M905.4 451.2h1.1M905.2 459.6h1.1M902.1 494.4h1.1M955.7 305.9h1.1M955 308.1h1.1M953.7 313.9h1.1M952.6 324.1h1.1M952.3 327.4h1.1M946 387.6h1.1M1099.9 701h1.1M1113.5 649.7h1.1M1095.9 602.7h1.1M1096.8 647.2h1.1M1099.1 671h1.1M1100.5 580.5h1.1M1100.7 712.5h1.1M1096.1 651.1h1.1M1099.1 629.7h1.1M1109.4 584.9h1.1M1086.6 682.2h1.1M1100.5 654.7h1.1M1099.6 663.7h1.1M1094.6 654.9h1.1M1105.8 621.1h1.1M1105 591.7h1.1M1096.1 657.1h1.1M1103 630.7h1.1M1102.7 657.2h1.1M1101.6 648.9h1.1M1093.3 637.7h1.1M1107.8 617.4h1.1M1109.3 626.3h1.1M1098.3 619.7h1.1M114.9 451.3h1.1M118.9 461.3h1.1M129.5 456h1.1M132.2 465.6h1.1M138.6 488.3h1.1M161.5 487.9h1.1M166.3 499.8h1.1M161.9 461.6h1.1M172.3 454.2h1.1M183.2 487.7h1.1M205.7 515.3h1.1M197.5 465.4h1.1M203 475.6h1.1M240.7 492.8h1.1M243.5 501.2h1.1M253.2 523.5h1.1M261.7 519.4h1.1M265.4 527h1.1M271.6 510.8h1.1M294.2 510.4h1.1M336.4 508.3h1.1M263.6 193.1h1.1M278.5 96.3h1.1M205 159.4h1.1M149 101h1.1M182.2 178.2h1.1M172.4 143.5h1.1M193.4 111.4h1.1M169.4 213.8h1.1M165.8 193.2h1.1M238.4 173.7h1.1M167.2 95.7h1.1M266.4 198h1.1M227.7 212.9h1.1M247.8 173.9h1.1M245.3 126.3h1.1M266.4 207.8h1.1M206.7 138.6h1.1M271.9 185h1.1M185.8 218.1h1.1M261.8 180.1h1.1M271.3 229.4h1.1M217.5 99.3h1.1M150.6 211.7h1.1M223.7 189.8h1.1M170.3 116.6h1.1M208.2 101.5h1.1M260.3 131.7h1.1M182.6 124.7h1.1M164.2 138.1h1.1M199.3 102.8h1.1M181.6 125.3h1.1M257.9 185.6h1.1M164.5 225.6h1.1M185.8 154.7h1.1M212.8 127.2h1.1M270.4 119.9h1.1M243 157.2h1.1M189.4 149.6h1.1M275.7 196.9h1.1M183.4 156.2h1.1M260.6 153.3h1.1M265.6 142.7h1.1M268.2 194.4h1.1M345.4 136.8h1.1M380.4 110.2h1.1M347.6 173h1.1M458.9 149.3h1.1M460.9 125.6h1.1M352.9 160.4h1.1M322.1 88.7h1.1M385.5 126h1.1M393.8 157.3h1.1M453.2 117.4h1.1M422.7 108.2h1.1M300.9 96.6h1.1M283 145.9h1.1M480 109.7h1.1M354.5 161.6h1.1M327.8 150.6h1.1M402.7 141.3h1.1M326.9 106.4h1.1M371.5 145.1h1.1M440.8 137.5h1.1M465.3 94.6h1.1M388.6 168.8h1.1M391.4 123h1.1M284.5 146h1.1M368.2 168.2h1.1M450.6 134.8h1.1M419.6 96.5h1.1M371.9 154.5h1.1M352.1 154.6h1.1M343 148.6h1.1M426.4 94h1.1M351.6 138.1h1.1M359.4 149.4h1.1M295.5 114.2h1.1M332.4 126.9h1.1M44.4 193.7h1.1M125.1 237.7h1.1M64 193.2h1.1M47.9 268.2h1.1M50.6 204.4h1.1M74.9 181.9h1.1M19.1 215.6h1.1M127.3 253.7h1.1M24.4 181.6h1.1M22 225.2h1.1M68.5 256.6h1.1M122.2 241h1.1M70.5 210.7h1.1M130 262.4h1.1M84.2 264.5h1.1M40.6 228.1h1.1M132.1 231.1h1.1M78.1 187.7h1.1M24.9 232.7h1.1M25 233.8h1.1M128.1 267.2h1.1M160.4 253.2h1.1M188.7 298.5h1.1M248 314.1h1.1M141.3 266.7h1.1M224.9 321.7h1.1M208.2 337.6h1.1M256.2 289.8h1.1M85 293.1h1.1M152.3 275.6h1.1M264.3 333.1h1.1M72.9 335.8h1.1M183.7 333.2h1.1M265 260.2h1.1M295.8 324.7h1.1M61 318h1.1M255.2 283.6h1.1M300.1 321h1.1M116.4 300.1h1.1M52.7 315h1.1M205.4 260.6h1.1M225.3 306.9h1.1M131.5 297.9h1.1M33.9 334.7h1.1M224.7 309.9h1.1M41.6 332.1h1.1M204.1 280.9h1.1M224.3 271.2h1.1M260.3 285.4h1.1M244.3 318.7h1.1M185.5 339.2h1.1M61.7 322.4h1.1M295.6 259.2h1.1M180.2 271.1h1.1M97 286.3h1.1M289.4 277.7h1.1M224.6 321.2h1.1M103.5 272.1h1.1M229.3 254.3h1.1M143.9 256.4h1.1M210.9 267.9h1.1M169.7 328.9h1.1M212.1 255.9h1.1M43.3 311.1h1.1M179 335.6h1.1M265.1 288.7h1.1M97.8 330h1.1M65.2 289h1.1M286.3 285.4h1.1M107 266h1.1M271.5 253.7h1.1M72.3 322.3h1.1M162.7 313.1h1.1M33 269h1.1M264.7 282.2h1.1M300.3 267.4h1.1M248.6 263.1h1.1M60.2 308.4h1.1M262.5 289.5h1.1M255.3 309.9h1.1M300 295.7h1.1M199.9 318h1.1M253.6 336.1h1.1M271.6 336.4h1.1M208.4 264.2h1.1M145.3 340.9h1.1M293.5 278.3h1.1M296.8 295.3h1.1M35 272.9h1.1M219.6 318.5h1.1M234.9 298.3h1.1M188 310.6h1.1M159.7 342.7h1.1M264.5 272.3h1.1M24.6 279.6h1.1M74.2 274.1h1.1M120.9 269.9h1.1M123.7 267.6h1.1M163.1 278.5h1.1M283.2 330.7h1.1M108.9 296.1h1.1M127.4 269.8h1.1M74.1 368.6h1.1M147.8 424.5h1.1M243.2 388.4h1.1M284.4 313.4h1.1M261.1 358.8h1.1M238.1 399.6h1.1M143.4 346.3h1.1M270 389.7h1.1M144 348.6h1.1M85.1 373.9h1.1M79.1 390.3h1.1M105.7 353.4h1.1M217.5 361.1h1.1M130.6 313.2h1.1M71.8 369.5h1.1M164.5 322.4h1.1M256.1 374.3h1.1M240.6 363.8h1.1M44.3 411h1.1M97 362.2h1.1M117.9 337.1h1.1M235.9 335.1h1.1M147.2 432.7h1.1M139.3 384.7h1.1M85.7 317.8h1.1M239.7 420.4h1.1M246.5 353.5h1.1M60.7 324.6h1.1M78.5 399.6h1.1M58.6 391.2h1.1M161.1 419.1h1.1M103.3 373.3h1.1M448.5 320.3h1.1M438.4 277.6h1.1M298.4 383.3h1.1M384.2 313.3h1.1M457.9 283.4h1.1M231.4 301.3h1.1M256.1 333h1.1M418.4 389.9h1.1M366 300.7h1.1M327 366.4h1.1M226.9 301.2h1.1M416.7 312.2h1.1M405.6 326.4h1.1M298.8 307.2h1.1M376.1 352.2h1.1M451.6 293.1h1.1M422 392.1h1.1M280.9 327.4h1.1M278 365.6h1.1M375.2 379.1h1.1M236.9 292.7h1.1M435.6 361.1h1.1M326.1 392.4h1.1M389.4 283.7h1.1M450 371h1.1M215.8 283h1.1M441.6 306.5h1.1M258.8 385.4h1.1M206.6 274.2h1.1M229.3 366.9h1.1M404.6 320.1h1.1M381 392.7h1.1M292.9 372.4h1.1M207.8 374.5h1.1M412.8 351.3h1.1M447 341.9h1.1M403.4 375.2h1.1M454.2 384.2h1.1M266.7 324.5h1.1M221.8 326.1h1.1M461.1 360.6h1.1M338.9 349.7h1.1M293.6 378h1.1M270.5 346.5h1.1M216 290.8h1.1M241.6 333.9h1.1M390.1 275.3h1.1M359.3 376.3h1.1M274.9 309.9h1.1M254.5 375.5h1.1M355.1 344.3h1.1M313.1 319.7h1.1M316 319.1h1.1M303.5 310.6h1.1M337.9 328.4h1.1M406.5 294.9h1.1M287.1 368.9h1.1M383.6 348.6h1.1M327.5 357h1.1M325.3 309.1h1.1M212.8 334.4h1.1M452.5 335h1.1M396.7 355h1.1M333.2 369h1.1M287.8 305.2h1.1M276.7 353.1h1.1M279.7 323.9h1.1M779.2 364.4h1.1M836.1 440.3h1.1M812.3 343.1h1.1M718.7 480h1.1M784.6 390.5h1.1M762.3 376.8h1.1M870.7 492.7h1.1M848.2 431.6h1.1M838.9 418.2h1.1M752.7 473.7h1.1M763 399.6h1.1M730.4 387.3h1.1M873.4 418.9h1.1M893.6 470h1.1M718.1 440.8h1.1M756.3 424.6h1.1M887.9 504.8h1.1M722.1 386.1h1.1M900.9 334.3h1.1M767.8 471.7h1.1M720 426.2h1.1M844.3 450.5h1.1M769.5 320.4h1.1M774.4 325.1h1.1M651.7 462.3h1.1M407.9 445.3h1.1M405.1 449.1h1.1M696.1 451.3h1.1M595.3 482.8h1.1M699.3 532.3h1.1M487.8 569.4h1.1M498.9 518.7h1.1M514.4 492.4h1.1M424.9 291.9h1.1M480.5 260h1.1M439.2 299h1.1M385 234.3h1.1M459.1 206.3h1.1M438.4 224.8h1.1M450.9 244.3h1.1M479.6 203.6h1.1M388.8 224.6h1.1M444.7 232.4h1.1M446.5 306.9h1.1M397.9 195.7h1.1M375.2 311.2h1.1M377.5 221.2h1.1M364.3 297h1.1M313 289.9h1.1M380.3 239.3h1.1M465.6 219.5h1.1M330.9 201.9h1.1M327.4 210.5h1.1M370.7 284.3h1.1M334.7 304.9h1.1M351.1 297.3h1.1M363.1 257.1h1.1M432.3 272.4h1.1M417 269.2h1.1M424 201h1.1M332.6 255.5h1.1M368.2 250h1.1M414.2 219.7h1.1M323.9 201.9h1.1M427.4 225.7h1.1M478.9 202h1.1M430.5 285.9h1.1M393.7 251.4h1.1M377.3 196.4h1.1M320.2 292.4h1.1M397 218.3h1.1M314.1 266.2h1.1M307.1 237h1.1M427.6 242.9h1.1M305.9 193.7h1.1M304.9 284.7h1.1M346.3 295h1.1M430.6 218.5h1.1M467.4 274.5h1.1M445.6 202.6h1.1M364.7 265.4h1.1M376.8 210.1h1.1M348.6 203.7h1.1M380.5 201.3h1.1M404.2 270.8h1.1M467.1 261.4h1.1" stroke="#95a22e"/><path d="M592.5 421.1h1.1M580.5 430.4h1.1M585 428.5h1.1M562.3 437h1.1M602.4 434.5h1.1M564.5 443.5h1.1M610.6 446.1h1.1M518.2 446.1h1.1M548.7 455.3h1.1M573.5 458.7h1.1M550.2 463.3h1.1M575.6 465.1h1.1M580.7 464.8h1.1M585.8 464.6h1.1M556.6 473h1.1M577.7 473.4h1.1M608.2 469.6h1.1M506.1 468.5h1.1M533.7 475.9h1.1M543.4 478.1h1.1M569.1 482h1.1M630 473h1.1M639.6 470.9h1.1M535.7 402.5h1.1M585.8 415.3h1.1M534.5 404.2h1.1M576.6 409.2h1.1M543.6 399.5h1.1M562.4 400.5h1.1M570.9 399.8h1.1M562.2 397.3h1.1M553.4 399.3h1.1M569.5 405.8h1.1M562.3 403.3h1.1M559.9 394.2h1.1M545 394.1h1.1M598 412.1h1.1M573.7 409.6h1.1M542.5 410.6h1.1M585.4 401h1.1M561.3 414.9h1.1M592.5 394.6h1.1M566.9 413.2h1.1M565.4 416.4h1.1M596.9 401.8h1.1M584.3 389.2h1.1M557.8 391.5h1.1M581.9 408.8h1.1M573.1 391.4h1.1M558.7 396.9h1.1M587.8 388.2h1.1M562.9 405.9h1.1M587.4 388.7h1.1M577.5 358.6h1.1M582.5 350.6h1.1M586.6 349.6h1.1M583.7 348.4h1.1M584 349.6h1.1M584.6 352h1.1M578.2 351.9h1.1M583.3 346.3h1.1M583.7 348.7h1.1M587.3 341.1h1.1M595.9 355.6h1.1M581.8 346.1h1.1M580 342h1.1M591.8 336.9h1.1M577.8 342h1.1M584.2 355.1h1.1M586.7 355h1.1M581.2 354h1.1M585.8 352.1h1.1M576.3 347.8h1.1M584.5 348.5h1.1M581.3 347.5h1.1M587.8 342.4h1.1M580.8 353.6h1.1M572.5 348h1.1M581.2 333h1.1M582.8 347.5h1.1M585.8 350.2h1.1M594.6 350.7h1.1M587.9 360.8h1.1M584.7 348.1h1.1M584.1 357.9h1.1M576.3 343.2h1.1M584.1 339.4h1.1M589 348.6h1.1M588.2 339.6h1.1M587.8 351.4h1.1M592.9 354.5h1.1M582.9 344.7h1.1M587.7 341.5h1.1M583.3 347.2h1.1M581.8 346.8h1.1M584.7 343.8h1.1M583.7 343.2h1.1M578.2 354.3h1.1M583.8 349.7h1.1M584.4 354.2h1.1M577.6 357.1h1.1M580 353h1.1M584 342.8h1.1M582.2 343.4h1.1M585.5 345.4h1.1M575.4 351.7h1.1M575.2 351.5h1.1M580.6 344.3h1.1M584 347.3h1.1M578.5 338.8h1.1M574.6 352h1.1M578 346.8h1.1M574.8 349.5h1.1M572.4 350.4h1.1M588.4 349.9h1.1M587.7 346.6h1.1M576.9 344h1.1M586.7 349.2h1.1M585.2 346.2h1.1M578 349.2h1.1M592.9 350.7h1.1M581.1 346.6h1.1M580.2 347.6h1.1M585.9 354.6h1.1M569.3 345.1h1.1M586.8 339.3h1.1M596.7 345.9h1.1M573.1 349.4h1.1M577.4 351h1.1M585.6 357.7h1.1M593.7 355.9h1.1M582.2 350h1.1M588.5 343.4h1.1M578.3 347.6h1.1M582 354.3h1.1M585.6 344.7h1.1M576.9 353.9h1.1M588 341.8h1.1M580.8 362.5h1.1M581.4 353.8h1.1M581.1 351.7h1.1M566.4 346.8h1.1M580.7 349.8h1.1M584.6 343.6h1.1M584.9 345.7h1.1M587 361.8h1.1M588.6 346.9h1.1M579.6 349.7h1.1M580.5 344h1.1M577.6 335.9h1.1M591 352.9h1.1M570 340h1.1M577.2 341.4h1.1M571.3 357.2h1.1M584.9 351.6h1.1M575.3 338.5h1.1M592.1 354.6h1.1M578.3 349.4h1.1M580.7 348.6h1.1M579.8 357.8h1.1M588.8 348.5h1.1M588.2 350.1h1.1M582 344.3h1.1M578.4 345.7h1.1M581.6 337.1h1.1M583.3 340h1.1M577 347.9h1.1M586.3 353h1.1M577.2 344.2h1.1M587.5 338.8h1.1M586.1 339.4h1.1M587.3 351.2h1.1M581.3 343.2h1.1M578.2 342.2h1.1M585 345.7h1.1M589.1 343h1.1M578.2 349.7h1.1M572.8 338.2h1.1M585.3 354.8h1.1M582.1 348.8h1.1M581.5 342.1h1.1M585.1 350.7h1.1M585.2 345.2h1.1M571.6 350.4h1.1M580.3 350h1.1M588.4 342.5h1.1M581.5 349h1.1M586.2 351.8h1.1M590 346.6h1.1M571.9 356.9h1.1M581.4 359.6h1.1M571 345.1h1.1M578 346.5h1.1M583.6 346.6h1.1M583.5 357.7h1.1M584.4 351.5h1.1M575.6 353.5h1.1M581.2 356.7h1.1M588.9 355h1.1M581 352h1.1M581.8 354.1h1.1M581.2 353.4h1.1M576.4 344.5h1.1M578.7 350.4h1.1M579.8 341.6h1.1M585.3 348.4h1.1M580.9 341h1.1M578.9 351.7h1.1M578 348h1.1M577.5 348.6h1.1M573.3 353.7h1.1M579.4 336.7h1.1M583.2 339.9h1.1M587.6 346.5h1.1M573.3 346.8h1.1M588 347h1.1M583.4 356.2h1.1M578.7 345.7h1.1M571.4 348.8h1.1M580.9 360.9h1.1M572.8 357.2h1.1M573.2 345h1.1M581.9 349.4h1.1M575.4 344.2h1.1M576.4 357.3h1.1M576.2 347.8h1.1M586.5 349h1.1M586.8 353.5h1.1M576.3 348h1.1M576.2 357h1.1M588.2 341h1.1M584 341.1h1.1M570.2 347.1h1.1M590.1 343h1.1M579.1 345.4h1.1M584.7 352.5h1.1M570 344.8h1.1M573.2 334.7h1.1M585.9 340.4h1.1M585.1 338.4h1.1M583.2 335.6h1.1M590.6 349.6h1.1M586.1 349.4h1.1M578.1 341.9h1.1M589.4 333.8h1.1M632.2 307.3h1.1M629.7 331.7h1.1M623.4 324.9h1.1M608.5 322.1h1.1M628.4 321h1.1M614.1 314.8h1.1M612.9 306.7h1.1M605.4 334.7h1.1M617.5 331.9h1.1M619.8 314.2h1.1M620.2 331.6h1.1M626.3 319.3h1.1M530.7 357.3h1.1M525.7 346.6h1.1M524.7 359.2h1.1M534.6 351.4h1.1M530.2 356.6h1.1M534.4 341.1h1.1M536.1 362.1h1.1M526.7 352.9h1.1M525.2 352h1.1M520.4 350.6h1.1M528.7 350.3h1.1M522.7 352.7h1.1M531.8 344.7h1.1M523.6 347.9h1.1M534.5 343.3h1.1M530 351.4h1.1M531.1 349.2h1.1M521.4 344.4h1.1M532.9 346.3h1.1M529.8 354.4h1.1M525.3 347.8h1.1M530.2 353h1.1M528.8 357.9h1.1M527.3 346.8h1.1M522.4 356.8h1.1M528.6 351.2h1.1M537.2 336.4h1.1M532.7 349.2h1.1M522.5 341.8h1.1M535.4 354.7h1.1M525.5 350.9h1.1M532.2 358.8h1.1M531.7 359.2h1.1M522.1 349.4h1.1M526.5 351.6h1.1M527.7 342.8h1.1M533.1 348.5h1.1M531.8 346.7h1.1M533.7 347.5h1.1M524.3 351h1.1M528.2 346.3h1.1M526.7 357.8h1.1M531.8 347.3h1.1M526.5 353.5h1.1M534.5 351.7h1.1M524.1 346.5h1.1M533.6 346.7h1.1M532.7 351.2h1.1M526.9 353h1.1M526.1 342.4h1.1M532.1 347.2h1.1M525.8 351.8h1.1M534.4 352h1.1M535.6 357h1.1M530.4 342.5h1.1M529.9 346.9h1.1M530.2 334h1.1M522.2 355.5h1.1M617.4 379.3h1.1M614.5 369h1.1M613.3 374.6h1.1M624.1 383.9h1.1M614.1 368.6h1.1M623.7 370.5h1.1M621 376.5h1.1M615.3 373.4h1.1M630.9 373.2h1.1M616.5 364.7h1.1M621.6 372.5h1.1M629.1 382.9h1.1M615.7 364.6h1.1M625 370.1h1.1M612.6 369.1h1.1M619.3 370.7h1.1M619.4 365.6h1.1M614.5 361.7h1.1M622.5 365.9h1.1M616 379.2h1.1M625.6 376.7h1.1M611.6 361.9h1.1M613.6 370.4h1.1M613.3 373h1.1M627.7 363.6h1.1M616.2 367.8h1.1M622.3 365.8h1.1M620.7 359.6h1.1M619.6 361.6h1.1M604.8 359.5h1.1M602.8 378.8h1.1M626.2 359.7h1.1M606.6 359.7h1.1M629.6 371.2h1.1M635.5 370.4h1.1M602.6 367.7h1.1M609 380.3h1.1M622.1 360.4h1.1M627.1 374.5h1.1M634.6 371.7h1.1M619.2 368.9h1.1M618.8 364.5h1.1M617.6 364.7h1.1M621.4 368.5h1.1M616.9 361.1h1.1M629 366.2h1.1M627.2 371.3h1.1M622.1 368.6h1.1M613.2 363h1.1M613.4 357.4h1.1M623.2 368.1h1.1M617.8 353.4h1.1M617 370.1h1.1M606.6 356.8h1.1M619.3 360.7h1.1M626.7 370.2h1.1M622.8 367.6h1.1M617.7 367.7h1.1M618.9 360.9h1.1M614.6 371.6h1.1M610.3 365.4h1.1M648.2 444.1h1.1M653.3 458.8h1.1M636.8 450h1.1M626.6 416.1h1.1M638 432.3h1.1M631.2 452.4h1.1M600.8 446.8h1.1M590.3 480.9h1.1M620.6 443.5h1.1M623.2 429.9h1.1M646.5 459.2h1.1M611.8 456.2h1.1M625.8 482.7h1.1M664.2 444.6h1.1M618 404.2h1.1M630.7 442h1.1M656 442.9h1.1M606.6 464.5h1.1M628.7 445.6h1.1M682.3 440.8h1.1M606.9 476.5h1.1M676 449.2h1.1M611.9 426.6h1.1M703 463.8h1.1M630.6 460.4h1.1M632.7 447.7h1.1M655.4 443h1.1M619.8 460.9h1.1M637.3 478.6h1.1M621.7 472.3h1.1M618.1 416.3h1.1M671.9 436.7h1.1M626.6 443.3h1.1M635.4 449.1h1.1M664.3 429.2h1.1M634.4 418.2h1.1M612.8 454.2h1.1M595 451.9h1.1M646.3 474.5h1.1M656 436.7h1.1M610.5 432.6h1.1M578.1 452.5h1.1M594.3 445.8h1.1M667.6 430.7h1.1M639.1 426.6h1.1M616.5 467.7h1.1M655.7 444.8h1.1M589.9 436.9h1.1M621.6 445.1h1.1M596.3 432.5h1.1M605 450.1h1.1M605.2 434h1.1M612.2 466.4h1.1M629.2 466.2h1.1M676.4 470h1.1M627.6 437.6h1.1M660.6 444.2h1.1M634.6 455.9h1.1M666.2 453.8h1.1M648.7 462.3h1.1M600.3 427.1h1.1M644.3 429.9h1.1M603.7 466.2h1.1M679.6 444.1h1.1M669.7 434.8h1.1M640.9 467.7h1.1M615.2 444.8h1.1M647.5 465.3h1.1M644.3 416.4h1.1M653.8 448.2h1.1M639.8 446.8h1.1M689.1 459.2h1.1M611.8 444h1.1M616.9 440.9h1.1M653.9 432.2h1.1M653.1 478.9h1.1M637.7 458.2h1.1M624.5 433.9h1.1M628.6 446.6h1.1M611.8 432.2h1.1M619.4 473.5h1.1M599.6 442h1.1M638.6 434.2h1.1M652.4 455.3h1.1M593.3 454.8h1.1M634.8 405.5h1.1M634.1 444.2h1.1M624.3 460h1.1M613.1 458.6h1.1M642.8 435.6h1.1M621.2 430.2h1.1M640 433.9h1.1M671.8 456.1h1.1M650.4 455.1h1.1M662.7 431.7h1.1M629.4 432.4h1.1M623.8 459.5h1.1M661 428h1.1M611.4 468.3h1.1M649.1 390.9h1.1M693.9 396.2h1.1M735.5 401.4h1.1M638.1 394.2h1.1M676 403.2h1.1M632.4 394.2h1.1M648.1 404.5h1.1M639 380.1h1.1M716.1 398.4h1.1M619.2 389.4h1.1M675.3 391.3h1.1M685.9 391h1.1M696.9 381.8h1.1M663.8 390.9h1.1M675 403.2h1.1M622 392.1h1.1M675.2 396.9h1.1M688.8 393.2h1.1M620.5 392h1.1M611.1 386.2h1.1M721.2 403.2h1.1M634 407h1.1M722.3 373.3h1.1M629.5 386.2h1.1M655.7 397.2h1.1M650.5 402.7h1.1M693 399.5h1.1M624.7 401.9h1.1M671 397.2h1.1M666.9 385.5h1.1M624.8 389.8h1.1M640.9 382.1h1.1M645.4 393.1h1.1M675 384.1h1.1M644.9 387.7h1.1M688.5 385.8h1.1M629.1 396h1.1M643 384.2h1.1M661.7 387.4h1.1M711.9 404.4h1.1M624.1 399.8h1.1M689 397.6h1.1M670.9 393.2h1.1M689 393.7h1.1M631.1 393.2h1.1M667.9 376.7h1.1M663.2 388.4h1.1M619.7 395h1.1M674.7 381.5h1.1M704.6 398.3h1.1M683.2 390h1.1M639 397.6h1.1M603.7 395.5h1.1M595.1 399h1.1M592 435.2h1.1M561.4 413.2h1.1M596.5 397.2h1.1M596.1 413.9h1.1M586.6 432.3h1.1M570.3 411.6h1.1M588 423.1h1.1M593.6 421.6h1.1M582.9 403.3h1.1M590.3 422.9h1.1M601.7 425.9h1.1M584.3 414.5h1.1M582.5 433.8h1.1M594.4 433.6h1.1M594.7 418.4h1.1M584.8 420.2h1.1M588.8 413.7h1.1M598.4 403.7h1.1M597.2 414.1h1.1M587.6 426h1.1M596.4 427.3h1.1M598.4 411.7h1.1M592.3 415.6h1.1M597.3 406.9h1.1M592.2 436.1h1.1M588.7 427.9h1.1M583.9 411.1h1.1M606.6 401.8h1.1M580 400.1h1.1M598.2 421.2h1.1M596.1 404.3h1.1M579.8 414.4h1.1M586.8 369.5h1.1M576.9 428.2h1.1M581.5 423.4h1.1M588.9 409.5h1.1M596.9 400.4h1.1M570.2 424.9h1.1M591.6 417.1h1.1M915.4 373h1.1M913.6 386.1h1.1M912.8 388.4h1.1M911.8 404.1h1.1M911.5 407.5h1.1M909.6 424.1h1.1M907.3 446.5h1.1M904.2 469.5h1.1M904 484.7h1.1M902 499.9h1.1M901.6 502.8h1.1M1014.5 397h1.1M1020.2 384h1.1M1013.3 452.5h1.1M1008.2 460h1.1M1002.3 334.5h1.1M1001.8 385.9h1.1M1018.3 308.4h1.1M1022.9 411.6h1.1M1005 431h1.1M1008.8 331.2h1.1M945.9 547.1h1.1M930.6 599.2h1.1M936.6 591.2h1.1M951.6 530.6h1.1M939.7 605.9h1.1M956.9 556.1h1.1M930.2 589.5h1.1M956.3 604.1h1.1M932.8 520.3h1.1M1103.6 621.1h1.1M1098.3 636.7h1.1M1108.4 660.2h1.1M1098.1 605.5h1.1M1097.9 606.2h1.1M1097.5 655.9h1.1M1088.8 687.4h1.1M1103 674.8h1.1M1117.2 612.7h1.1M1093.9 701.6h1.1M1096.9 663.8h1.1M1096.5 653.4h1.1M1100.1 581.3h1.1M1091.8 624.1h1.1M1104.3 603.7h1.1M1103.1 636h1.1M1123.7 672.8h1.1M1097.6 613.1h1.1M1102.3 638.9h1.1M36.9 309.8h1.1M36.4 388.4h1.1M41.1 390.1h1.1M17.6 361.7h1.1M16.1 304.5h1.1M37.9 306.9h1.1M45.3 370.8h1.1M7.2 343.2h1.1M20.3 321.2h1.1M37.6 354.9h1.1M10.1 360.2h1.1M39.7 314.9h1.1M35.7 311.5h1.1M6.2 360.3h1.1M23.1 382.1h1.1M47.3 379.4h1.1M15.4 372.3h1.1M24.9 325.7h1.1M37.5 348.1h1.1M14.5 318.5h1.1M3.3 359.1h1.1M39 338.1h1.1M20.3 310.8h1.1M9.8 356h1.1M23.8 376.5h1.1M11.8 378.4h1.1M29.4 319.2h1.1M31.9 381.1h1.1M7.9 347.1h1.1M33.7 347.5h1.1M16 329.1h1.1M19.6 325.8h1.1M190.1 327.5h1.1M85.2 329.9h1.1M249.6 407h1.1M229.5 357h1.1M73.5 346.3h1.1M153.9 382.4h1.1M102.2 336.7h1.1M71.8 393.5h1.1M186.4 364.4h1.1M144.7 357.9h1.1M283.1 375.4h1.1M148.4 348.3h1.1M293 343.4h1.1M108.7 374.7h1.1M301.5 337.7h1.1M43.5 321.9h1.1M76.2 356.2h1.1M99 379.9h1.1M301.1 367.7h1.1M227.5 403.8h1.1M87.9 391.6h1.1M107 328.9h1.1M124.2 321.2h1.1M92.3 424.4h1.1M258.6 383.6h1.1M231.1 381h1.1M300.8 378.3h1.1M158.3 427.8h1.1M131.4 347.3h1.1M255.3 355.7h1.1M332.8 388h1.1M272.7 361.6h1.1M405.4 376.7h1.1M245.6 284.7h1.1M341.9 391.5h1.1M285.8 274.9h1.1M209.9 383.9h1.1M280.3 317.9h1.1M351.9 322.4h1.1M211.1 347h1.1M312.1 284.5h1.1M290.9 372.9h1.1M429.3 356.4h1.1M425.2 318.9h1.1M278.1 391.3h1.1M450.7 318.6h1.1M274 358.4h1.1M213.3 327.8h1.1M394.2 281.6h1.1M361.4 281.4h1.1M407.5 338.6h1.1M289.6 350.7h1.1M300.8 290.6h1.1M336.8 324.8h1.1M438.9 370.2h1.1M768.2 376.5h1.1M839 437.1h1.1M856.7 415.9h1.1M830 343.8h1.1M869.8 429.7h1.1M725.2 400h1.1M746.6 452.2h1.1M746 398.3h1.1M762.5 385.3h1.1M850.7 377.8h1.1M707.6 392.3h1.1M776.9 369.6h1.1M776 417.7h1.1M851.8 500.8h1.1M749.1 408.9h1.1M751.5 506.4h1.1M788.6 477h1.1M810.9 357.2h1.1M810.7 387.5h1.1M785.9 368.3h1.1M720.9 400.6h1.1M840.7 431.8h1.1M722.6 337h1.1M807.2 509.6h1.1M837.6 372.6h1.1M777.8 503.2h1.1M755.8 468.5h1.1M882.2 434.6h1.1M833.8 366.4h1.1M702.6 439.9h1.1M551.4 503.9h1.1M701.5 514.2h1.1M409.3 473h1.1M643.5 566.5h1.1M490.8 522.3h1.1M620.4 530.2h1.1M521.3 571.4h1.1M551.7 565.1h1.1" stroke="#e63a20"/><path d="M613.5 343h1.1M613.1 347h1.1M613.5 349.5h1.1M613 351.6h1.1M613.9 359h1.1M612.1 362.9h1.1M614.3 367.8h1.1M612.3 371h1.1M476.6 418h1.1M474.4 423.2h1.1M474.4 426.5h1.1M476.2 428.3h1.1M474.1 441.5h1.1M588.8 346h1.1M582.6 346.5h1.1M578.9 345.1h1.1M572.4 339.6h1.1M572.4 355.1h1.1M588.2 344.8h1.1M573.7 357.8h1.1M577.6 350.3h1.1M578.6 350.2h1.1M574 345.2h1.1M588.6 344h1.1M573.7 347.4h1.1M574.9 336.5h1.1M593.6 351.8h1.1M580.2 349h1.1M570.2 349.8h1.1M588.7 343.2h1.1M573 348.3h1.1M574.4 347.8h1.1M577.8 343h1.1M575.1 354.4h1.1M585.3 342.1h1.1M583.8 347.7h1.1M582.4 345.4h1.1M581.4 339.3h1.1M579.3 350.5h1.1M577.8 342.2h1.1M589 356.1h1.1M586.2 336.5h1.1M579.8 348.3h1.1M590.2 355.6h1.1M592 344.3h1.1M585.9 347.4h1.1M584 347.1h1.1M581.4 349h1.1M579.6 348.6h1.1M591.6 351.8h1.1M583.1 352h1.1M588.2 348h1.1M571.5 344.8h1.1M573 335.2h1.1M585 343.8h1.1M580.3 357.6h1.1M581.6 346.8h1.1M586.5 355.6h1.1M587.8 346.1h1.1M580.1 338h1.1M581.3 347h1.1M618.5 318.2h1.1M627.1 322.8h1.1M624.9 333.5h1.1M622 321h1.1M623.3 333.5h1.1M612.7 320.3h1.1M622.5 327.8h1.1M613.5 326.2h1.1M617.8 325.5h1.1M620.4 327.5h1.1M620.2 323.9h1.1M618.4 325.9h1.1M635.4 328h1.1M620 336.1h1.1M634.1 315h1.1M624 329h1.1M605.5 328.9h1.1M613.8 326.4h1.1M624 324.5h1.1M611.5 317.9h1.1M620.8 320.1h1.1M617.4 317.7h1.1M611.5 329.3h1.1M623.8 337h1.1M616.5 316h1.1M622 318h1.1M614.9 314.9h1.1M619.7 317.8h1.1M609.4 325.5h1.1M619.5 319.4h1.1M618.3 339.2h1.1M624.7 316.6h1.1M613.8 326.9h1.1M527.9 354.5h1.1M529 349.4h1.1M534.9 362.8h1.1M525.4 350.3h1.1M525.7 342.8h1.1M530.6 345.4h1.1M532.2 352h1.1M531.2 347.2h1.1M528.9 345.9h1.1M536.9 349.2h1.1M525.2 344.5h1.1M523.8 346.6h1.1M522.1 353.3h1.1M525.2 348h1.1M526.8 352.8h1.1M524.6 349.7h1.1M534.6 356.7h1.1M534.8 340.9h1.1M522.2 345.3h1.1M526.6 355h1.1M528.2 352.6h1.1M528.3 351.6h1.1M520.6 351.2h1.1M522.2 336.7h1.1M528.1 360.4h1.1M537.7 354.4h1.1M526.6 346.9h1.1M530 363.4h1.1M530.9 349.5h1.1M532 351.9h1.1M520.3 348.4h1.1M525.9 351.4h1.1M612 381.1h1.1M613.6 364h1.1M613.8 355.3h1.1M620.2 367.4h1.1M616.7 354h1.1M613.9 366.6h1.1M618.1 374.4h1.1M625.3 363.1h1.1M629.3 372.3h1.1M638.2 370.7h1.1M618.7 354h1.1M623.5 364.4h1.1M617.9 359.2h1.1M609.4 358.6h1.1M621.4 368.9h1.1M605.9 358.2h1.1M618 373.9h1.1M626.1 373.7h1.1M602 366.5h1.1M608.4 362.9h1.1M611.5 373h1.1M620.3 367.7h1.1M610.8 371.9h1.1M620.2 368.7h1.1M627.8 363.6h1.1M603.3 364.3h1.1M609.7 366.5h1.1M610.7 367h1.1M628.8 378h1.1M670 448.1h1.1M614.8 480.6h1.1M682.4 429.8h1.1M606.1 443.8h1.1M636.2 438.1h1.1M594 447.2h1.1M713 460.7h1.1M656.6 440.6h1.1M639.5 491h1.1M579.1 458.3h1.1M621.5 425.4h1.1M672.8 441h1.1M604.2 432h1.1M649.9 457.8h1.1M654.2 453.2h1.1M671 443.7h1.1M698 431.4h1.1M644.5 449.3h1.1M593.6 446.6h1.1M632.7 463.1h1.1M609.6 460.6h1.1M584.7 473h1.1M619.3 459.1h1.1M702.2 458.9h1.1M655.5 414.5h1.1M671.1 432.9h1.1M591.8 426.1h1.1M654.7 429.4h1.1M589.5 435h1.1M618.5 434.6h1.1M641.3 463.1h1.1M642.3 473.2h1.1M590.9 444.3h1.1M650.8 441.1h1.1M603.6 451.4h1.1M654.8 457.8h1.1M637.9 441.1h1.1M604.3 446.6h1.1M628.7 426h1.1M638.9 428.2h1.1M661.2 481.6h1.1M630.1 416.1h1.1M659 441.5h1.1M610.4 437.9h1.1M645.1 442.6h1.1M649.1 432.6h1.1M604.7 443.5h1.1M628.2 461.9h1.1M618.7 457.8h1.1M656.1 433.3h1.1M658 464.7h1.1M601 386.2h1.1M644 397.3h1.1M659 405.9h1.1M659.5 399.3h1.1M654.2 385.6h1.1M637.9 396.8h1.1M654.5 388.1h1.1M670.8 401.9h1.1M686.4 400.8h1.1M616.9 382.9h1.1M634.6 386.5h1.1M651 369.5h1.1M669.4 406.9h1.1M651.1 397.3h1.1M615.3 382.2h1.1M658.2 391.6h1.1M669.3 381h1.1M675.7 394.5h1.1M642 392.3h1.1M666.1 388.2h1.1M667 401.6h1.1M687.9 401.6h1.1M645.8 379.2h1.1M631.5 388.7h1.1M622.8 388.7h1.1M645.7 387h1.1M638.1 387.7h1.1M661.5 380.6h1.1M490.3 267.4h1.1M490.2 267.3h1.1M510.6 253.3h1.1M925.4 337h1.1M924.2 347.4h1.1M922.9 368.5h1.1M922.6 370.7h1.1M919 390.8h1.1M917.9 397.2h1.1M917.3 406.4h1.1M917.5 412.5h1.1M916 415.2h1.1M915.3 432h1.1M911.1 469.3h1.1M997 323h1.1M996.1 342.2h1.1M1109.3 619.7h1.1M1100.2 636.6h1.1M1087.4 631.4h1.1M1089.1 615h1.1M1091.2 691h1.1M1096.4 618.3h1.1M1101.4 685.2h1.1M1108 660.2h1.1M1096.5 629.1h1.1M1098.8 642.5h1.1M1094.1 666h1.1M1104.3 675.6h1.1M1095.2 660.1h1.1M1097.1 624.6h1.1M1110 660.3h1.1M1102.1 642.3h1.1M1106.6 615.4h1.1M1099.9 617.4h1.1M1094 607.8h1.1M1096.1 628.2h1.1M1102.2 648.4h1.1M1092.1 617.3h1.1M1099.2 620.9h1.1M1104 582.7h1.1M1102.6 662.8h1.1M1107 600.6h1.1M1106.5 693.2h1.1M1112.9 578.8h1.1M1096.1 650.6h1.1M1096.2 600.1h1.1M1096.2 663.8h1.1M1090.4 623.5h1.1M1097.2 647.7h1.1M1098.5 661.1h1.1M1106.4 675.9h1.1M1097.3 624.5h1.1M1094.4 700.3h1.1M1100.2 588.9h1.1M1087.4 618.3h1.1M1104.4 619.2h1.1M1098.6 653.5h1.1M1103.9 627.2h1.1M101.9 417.1h1.1M105.2 429.1h1.1M123.4 473.1h1.1M136.2 478.8h1.1M133.6 440.3h1.1M137.7 450.7h1.1M139.3 463.3h1.1M144.8 472.1h1.1M151.2 455.6h1.1M154.6 465.4h1.1M180.8 503.6h1.1M176.7 465.1h1.1M180.2 477.5h1.1M188.9 498.2h1.1M180.9 449.2h1.1M185.6 460.4h1.1M202.6 501.7h1.1M206.1 486.3h1.1M209.6 497.5h1.1M218.2 519.1h1.1M225.8 514.8h1.1M221.3 463.1h1.1M231.8 496.3h1.1M235.8 508.4h1.1M238 480.9h1.1M257.8 506.3h1.1M266.9 503h1.1M280.3 505.6h1.1M288.1 528.8h1.1M286.5 489.8h1.1M304.7 542.3h1.1M310.5 527.2h1.1M326.5 544.3h1.1M323.6 506.3h1.1M255.1 337.6h1.1M187.8 286.2h1.1M116.2 254.2h1.1M200 341.2h1.1M264.3 321.6h1.1M245 330h1.1M119 283.5h1.1M99.6 330h1.1M61.5 331.6h1.1M236.5 298.3h1.1M183.9 266.3h1.1M64.2 265.9h1.1M136.1 285.9h1.1M285.4 292.7h1.1M203.2 308.2h1.1M270 278.1h1.1M212.8 324.5h1.1M301.4 300.3h1.1M213.7 270.9h1.1M162.5 284.7h1.1M124.5 287.3h1.1M207.4 329.4h1.1M152.6 315.6h1.1M285.8 277.2h1.1M199.3 314.4h1.1M129.8 333.1h1.1M207.7 275h1.1M297.1 298.7h1.1M92.2 284.5h1.1M191.9 300.9h1.1M72.3 281.7h1.1M88.5 306.7h1.1M127 253.2h1.1M43.4 329.5h1.1M278.1 307.6h1.1M60.7 332h1.1M120.8 336.4h1.1M157.9 291.6h1.1M62.6 274.6h1.1M24.8 341.4h1.1M28.1 324.6h1.1M1.1 385.2h1.1M28 380.6h1.1M41.6 372.6h1.1M32.3 370.4h1.1M44.8 316.3h1.1M24.2 310.1h1.1M25 373.3h1.1M44.1 332.8h1.1M15 336.5h1.1M37.7 377.5h1.1M30.1 304.4h1.1M14.1 391.4h1.1M25.1 312.6h1.1M5.6 329.5h1.1M23.6 330.4h1.1M3.4 382.9h1.1M259 380.1h1.1M278.6 371.3h1.1M87 395.2h1.1M57.8 433h1.1M165.6 420h1.1M214.8 425.1h1.1M115.5 387.9h1.1M191.2 417h1.1M58.4 377.9h1.1M64.4 348.9h1.1M151.9 405h1.1M267.8 358h1.1M247 314.1h1.1M173.9 360.3h1.1M145.5 351.4h1.1M83 340.6h1.1M63.6 330.9h1.1M113.6 375.7h1.1M190.6 359.2h1.1M253.6 403.8h1.1M220.9 358h1.1M236.9 370.5h1.1M390.1 312.7h1.1M316.5 277.1h1.1M253.4 360.6h1.1M405.8 356.4h1.1M391.7 391.4h1.1M309.1 299.8h1.1M299.5 381.2h1.1M380.4 320.6h1.1M298.9 299.9h1.1M312.1 291.5h1.1M389.8 386.4h1.1M247.8 391.9h1.1M204 313.4h1.1M430.4 280.8h1.1M376.4 279.9h1.1M285.3 347.4h1.1M414.2 391.1h1.1M248.4 356.7h1.1M269.2 278.3h1.1M304.4 304.4h1.1M345.2 314.8h1.1M450.3 337.8h1.1M293.7 362.1h1.1M325 358.3h1.1M358.1 342.5h1.1M287.9 288.5h1.1M344.2 283.7h1.1M335.6 354.7h1.1M279.6 329.9h1.1M299.3 279.6h1.1M440.5 364.7h1.1M716.5 368.9h1.1M898.6 402.4h1.1M792 416.8h1.1M713.9 351.2h1.1M824.4 345.5h1.1M795.6 376.7h1.1M761.3 480.1h1.1M833.3 431.1h1.1M835.7 419.7h1.1M704.6 363.7h1.1M854.6 453h1.1M841.9 334.3h1.1M725.9 470.3h1.1M872.8 445.9h1.1M751.1 421.3h1.1M893.1 454h1.1M821.1 401.3h1.1M842.6 362.7h1.1M739.1 319.4h1.1M843.8 387.9h1.1M817.3 356.1h1.1M868.6 353h1.1M773.2 476.1h1.1M873.2 373.5h1.1" stroke="#d88e28"/><path d="M563.6 382h1.1M533.8 392.9h1.1M585.2 374.1h1.1M580 374.1h1.1M564.5 374h1.1M557.9 376.6h1.1M546.1 379h1.1M543.4 379.3h1.1M530 385.9h1.1M527.7 388.5h1.1M525.8 391.1h1.1M566.4 368.4h1.1M549.1 370.6h1.1M530.8 375.8h1.1M523.3 379.8h1.1M522 381h1.1M515.5 385.4h1.1M599.9 364.2h1.1M580.3 363h1.1M568 362.2h1.1M555.6 363.4h1.1M550.5 363.7h1.1M508 380.7h1.1M550.7 401.1h1.1M548 408.4h1.1M535.1 403.7h1.1M548.9 388.2h1.1M567.7 400h1.1M573 390h1.1M570.8 395.7h1.1M567.9 398.7h1.1M572.7 392.5h1.1M580.2 414h1.1M549.6 407.5h1.1M546.8 396.4h1.1M566.8 399.2h1.1M554.6 391h1.1M572.5 391.7h1.1M556.5 398.6h1.1M552.5 391.8h1.1M586.9 374.3h1.1M568.2 391.8h1.1M549.4 405h1.1M557.8 406.1h1.1M621.4 241h1.1M634.5 241.4h1.1M642.8 239.3h1.1M643.2 249.1h1.1M633.5 271.1h1.1M643.1 278.7h1.1M968.1 296h1.1M967.2 308.9h1.1M965.7 312.6h1.1M967.1 315.4h1.1M965.5 319.2h1.1M965.5 322h1.1M964.3 324.2h1.1M965.8 327.8h1.1M964.2 335.5h1.1M963.3 338.8h1.1M962.8 341.2h1.1M963 351.6h1.1M962.2 356.5h1.1M960.2 364.6h1.1M961.7 368.5h1.1M959.6 371.9h1.1M959.5 375.7h1.1M960 379.4h1.1M958.6 383h1.1M956.4 395.4h1.1M956.4 398.3h1.1M955.3 417h1.1M977.3 374.9h1.1M972.5 421.4h1.1M970.5 429.8h1.1M968.7 451.4h1.1" stroke="#3a5ce0"/><path d="M536.5 390.3h1.1M572.3 373.6h1.1M532.4 385.2h1.1M523.6 392h1.1M599 369.6h1.1M593.7 369.7h1.1M581.6 367.6h1.1M529.3 377h1.1M527.5 378h1.1M525.7 379.1h1.1M518.9 383.3h1.1M512.9 387.9h1.1M585.3 362.6h1.1M582.8 363.1h1.1M510.2 378.1h1.1M505.4 383.1h1.1M574.3 404.4h1.1M569.6 408.4h1.1M543.2 417.5h1.1M553.1 415.8h1.1M542.2 396.1h1.1M558.9 393.8h1.1M569 394.6h1.1M554.6 384.1h1.1M589.4 402.8h1.1M547.2 405.7h1.1M591.1 404.4h1.1M551 397h1.1M563.9 393.9h1.1M596.3 401.2h1.1M564.5 383.7h1.1M566.6 407h1.1M564.9 402.7h1.1M562.8 387.1h1.1M560.7 395.5h1.1M560.2 409.4h1.1M583.9 397.2h1.1M559.9 405.3h1.1M562.7 395.9h1.1M578.7 403.5h1.1M574.3 397.5h1.1M542.6 414.9h1.1M571.5 398.1h1.1M572.5 401.9h1.1M576.2 400.7h1.1M569.7 392.3h1.1" stroke="#a05ae0"/><path d="M404.7 204.2h1.1M401.2 204.7h1.1M392.8 210.1h1.1M387.9 213.2h1.1M383.2 217.8h1.1M372.2 234.4h1.1M370.3 243.2h1.1M370 245.1h1.1M372.8 255.7h1.1M374.1 258.4h1.1M379.3 266.1h1.1M393 205.9h1.1M384.4 209.8h1.1M371 222h1.1M361.7 250.7h1.1M383 205.6h1.1M375.7 210h1.1M374 212.3h1.1M371.7 214.1h1.1M362 223.5h1.1M354.4 235.9h1.1M353.1 239h1.1M353.3 240.2h1.1M354 252.6h1.1M356.5 257.7h1.1M578.5 380.7h1.1M573.4 380.7h1.1M593 374.6h1.1M587.9 374h1.1M570 375.1h1.1M586.5 368.4h1.1M584.2 367.5h1.1M546.9 371.3h1.1M542.4 372.6h1.1M565.5 362.6h1.1M546.2 365.1h1.1M512.6 377.3h1.1M603.4 358.9h1.1M596.5 357.4h1.1M579.4 355.8h1.1M576.9 356.7h1.1M569.5 356h1.1M566.9 355.5h1.1M547.4 358.1h1.1M538.9 361.2h1.1M512.7 368.9h1.1M609.9 352.9h1.1M595.1 352.1h1.1M592.8 351.6h1.1M578.4 349.7h1.1M563.6 350.3h1.1M515.6 360.5h1.1M513.1 361h1.1M503.2 367.1h1.1M591.9 345h1.1M541.2 347.1h1.1M532 349h1.1M521.8 352.8h1.1M512.6 354.8h1.1M480.6 369.8h1.1M476 373.1h1.1M611.9 341.9h1.1M588.2 340.3h1.1M550.3 341h1.1M545.6 341.6h1.1M480 361.1h1.1M620.1 337.1h1.1M599 335.1h1.1M577.8 333.7h1.1M575.4 334.2h1.1M558.9 334.6h1.1M556.4 334.4h1.1M549.7 335.8h1.1M513.8 342.4h1.1M508.2 342.3h1.1M500.9 345.9h1.1M489 350.4h1.1M457.9 365.9h1.1M454.7 368h1.1M620.6 332.5h1.1M612.2 329.9h1.1M581.5 328.9h1.1M567.4 328.4h1.1M546.4 330.1h1.1M537.8 332.5h1.1M505.7 337.2h1.1M493.5 341.4h1.1M487.8 343.8h1.1M475.6 348.2h1.1M471.7 349.8h1.1M459.7 356.5h1.1M457.9 357.4h1.1M447.6 361.8h1.1M443.4 366.8h1.1M439.2 368.8h1.1M619.6 326.4h1.1M594.6 323.3h1.1M561.9 323.5h1.1M547.8 323.9h1.1M516.2 329h1.1M484.2 337.7h1.1M475.3 340h1.1M475.9 342.5h1.1M469.5 342.5h1.1M459.3 348.2h1.1M453.4 350.7h1.1M453.2 352.3h1.1M439.1 360h1.1M430.7 365.2h1.1M432 367.1h1.1M627.4 322h1.1M618.4 320.9h1.1M616.1 320.7h1.1M611.3 320.9h1.1M605.1 318.6h1.1M600.3 319.1h1.1M595.8 318.4h1.1M593.4 318.8h1.1M584.3 317.6h1.1M575 317.2h1.1M543 320.5h1.1M529.5 322.2h1.1M527 322h1.1M511.8 325.1h1.1M504.4 325.5h1.1M498.5 327.7h1.1M469.3 336.4h1.1M463 338.5h1.1M460.5 340.8h1.1M437.4 352.6h1.1M425.1 361.1h1.1M628.4 316.9h1.1M619.2 316.2h1.1M612.7 315.1h1.1M601.6 313.3h1.1M594.6 313.8h1.1M583.2 313.5h1.1M581 312.3h1.1M578.6 313.4h1.1M576.3 313.9h1.1M535.4 315.6h1.1M517.3 317.7h1.1M498.3 322.4h1.1M469.1 330.6h1.1M456.7 334.6h1.1M444.3 340.8h1.1M436.4 344h1.1M419.3 355.4h1.1M414.6 357h1.1M409.4 361.6h1.1M622.2 311.9h1.1M614 309.3h1.1M609.2 309.8h1.1M582.2 308.2h1.1M561.9 308.9h1.1M552.9 309.5h1.1M548.6 310.2h1.1M525.7 311.2h1.1M484.7 319.6h1.1M470.2 323.7h1.1M458.5 328h1.1M439.1 335.6h1.1M421.1 344.5h1.1M588 303.8h1.1M579 303.2h1.1M572.3 303.6h1.1M570 303.4h1.1M563.3 303.6h1.1M550.1 304.9h1.1M547.7 304.5h1.1M530.1 306.7h1.1M512.3 308.6h1.1M510.1 308.9h1.1M478.5 316.1h1.1M466.4 319.7h1.1M441.1 328.9h1.1M419.1 338.9h1.1M413.5 341.5h1.1M642.2 303.1h1.1M617.9 300.6h1.1M615.6 300.8h1.1M575.9 298.6h1.1M540.5 300.6h1.1M503.3 305h1.1M500.9 305h1.1M494.6 306.5h1.1M424.5 328.4h1.1M415.1 334.2h1.1M409.2 336.6h1.1M402.1 340.2h1.1M398.8 342.1h1.1M395.1 344h1.1M380.5 354.8h1.1M623.4 296h1.1M612.2 295.6h1.1M610.2 295.2h1.1M586 294.5h1.1M550.8 294.8h1.1M530.9 295.9h1.1M529 296.7h1.1M494.6 301.8h1.1M490.1 302.4h1.1M486 303.3h1.1M465.4 308.4h1.1M454.2 312.6h1.1M447.4 313.9h1.1M443.6 315.2h1.1M432.2 319.6h1.1M400.8 333.2h1.1M381.6 345.1h1.1M367.7 354.6h1.1M365.2 355.5h1.1M643.3 294.2h1.1M572 290.1h1.1M565.4 289.3h1.1M558.9 290.1h1.1M552.3 290.2h1.1M526.2 292h1.1M496.6 296.8h1.1M469.8 302.6h1.1M461 304.1h1.1M433.6 312.9h1.1M429 313.9h1.1M421.6 316.9h1.1M412.7 321h1.1M407.3 323.4h1.1M387.9 332.9h1.1M383.7 334.5h1.1M379.3 336h1.1M377.9 338.7h1.1M650.4 290.5h1.1M641.8 289.5h1.1M612.1 286.1h1.1M597.1 285.2h1.1M551.7 285.7h1.1M519.7 288.9h1.1M517.2 288.3h1.1M515.1 288.7h1.1M502.6 290.9h1.1M490.1 293.2h1.1M481.7 294.6h1.1M378.2 330.7h1.1M366.5 337.3h1.1M348.2 350h1.1M666.7 360.6h1.1M620.1 344.7h1.1M724.3 386.5h1.1M692.3 357.7h1.1M678.1 349.9h1.1M649.5 339.2h1.1M744.7 378.6h1.1M729.8 363.7h1.1M703.6 347h1.1M693.1 341.2h1.1M684 338.7h1.1M764.7 370.9h1.1M721.9 340.1h1.1M648.2 316h1.1M639.9 313.5h1.1M761.5 347.9h1.1M820.4 376.5h1.1M795.4 351.7h1.1M778.2 341.5h1.1M770.9 334.6h1.1M767.1 332.8h1.1M752.8 325.5h1.1M730.5 315.7h1.1M690.1 302.9h1.1M846.4 376.7h1.1M844.8 373.9h1.1M840.2 368.7h1.1M817.8 349.6h1.1M803.2 338.5h1.1M799.1 336.7h1.1M838.7 344.8h1.1M776.8 310.8h1.1M774.8 308.4h1.1M720.4 289.8h1.1M704.8 285.1h1.1M891.5 371.9h1.1M880.8 359h1.1M847.6 334.2h1.1M733.1 282.8h1.1M729.7 281.3h1.1M689.1 272h1.1M912.5 366.9h1.1M909.2 361.6h1.1M870.3 331.8h1.1M869 329.3h1.1M810.6 298.2h1.1M757.4 279.3h1.1M722.1 269.8h1.1M693.5 264.3h1.1M916 344.6h1.1M885.7 325.6h1.1M853.4 306.2h1.1M849.8 304.5h1.1M800.2 282.4h1.1M769 272.9h1.1M749.5 267.6h1.1M686.2 254.4h1.1M947.2 352.2h1.1M918.2 329.4h1.1M873.6 301.6h1.1M828.5 283.4h1.1M757.5 260.2h1.1M730.8 253.4h1.1M710.6 250.1h1.1M655.1 447.8h1.1M680 411h1.1M679 395.7h1.1M677.3 454.2h1.1M695.7 436.3h1.1M697.7 394h1.1M679.5 473.5h1.1M680.8 493.2h1.1M743.9 440.7h1.1M742.7 397.5h1.1M693.3 506.8h1.1M747.1 474.6h1.1M772.3 414.7h1.1M700.9 525h1.1M781.9 465.1h1.1M792.9 440.8h1.1M795.3 432.7h1.1M792.6 412.6h1.1M787.4 397.3h1.1M784.7 393.6h1.1M729.7 535.7h1.1M815.2 451.2h1.1M737.1 554.1h1.1M750.1 547.6h1.1M771.8 539.7h1.1M795.6 519.5h1.1M829.3 483.3h1.1M550.8 411.8h1.1M544.1 411.5h1.1M545.3 412.6h1.1M539.1 413.6h1.1M542 418.3h1.1M542.9 419.5h1.1M545.2 420.1h1.1M530.7 413.7h1.1M537.1 421.7h1.1M540 423.7h1.1M526.5 418.3h1.1M535.8 425.1h1.1M517.9 417.2h1.1M520.9 421.8h1.1M528 425.1h1.1M530.5 427.1h1.1M512.2 420.7h1.1M517.8 426.1h1.1M505.3 420.5h1.1M506.6 422.9h1.1M508.6 423.7h1.1M513.7 429.2h1.1M515.5 431.5h1.1M522.6 434.7h1.1M524.2 437.5h1.1M497.4 420.5h1.1M508.3 432.8h1.1M513.9 436.8h1.1M520.1 438.6h1.1M490.1 421.7h1.1M497.4 429.4h1.1M499.9 431.5h1.1M483.2 421.6h1.1M487.4 427.3h1.1M489.4 428.1h1.1M490.9 430.5h1.1M502.1 443h1.1M504.6 445.3h1.1M477.3 430.6h1.1M483.2 431.8h1.1M505.7 449.1h1.1M481.2 438.6h1.1M485.1 443.3h1.1M495.7 450h1.1M462.6 426.3h1.1M467.9 431.8h1.1M469 435.6h1.1M471 439.4h1.1M475.1 444h1.1M478.6 444.2h1.1M485.7 450.9h1.1M490.5 453.7h1.1M493.1 454h1.1M495.8 456.3h1.1M587.5 436.3h1.1M550.6 440.4h1.1M574.5 443.5h1.1M589.4 442.7h1.1M594.1 441.8h1.1M541.9 447.2h1.1M561.8 449h1.1M566.7 449.2h1.1M615.3 445.1h1.1M526 449.5h1.1M608.8 455.1h1.1M518.6 454.7h1.1M525.4 459.5h1.1M544.9 463.2h1.1M610.6 461.3h1.1M500.7 458.6h1.1M513.3 463.5h1.1M546.5 471.4h1.1M622.8 466.8h1.1M633.3 465.8h1.1M513.7 472.6h1.1M615.8 476.7h1.1M635.3 472.5h1.1M809.1 380.3h1.1M809.8 385.8h1.1M811.1 387.6h1.1M476.5 419.7h1.1M476 436.3h1.1M474.5 439.9h1.1M580.2 402.2h1.1M555.5 405.5h1.1M579 382.4h1.1M568.3 403.2h1.1M554.5 401h1.1M544.8 399.8h1.1M575.4 398.3h1.1M558.6 401.5h1.1M572.9 409.5h1.1M546.8 391.7h1.1M571.9 417.1h1.1M578.9 405.8h1.1M560.8 405.6h1.1M547.6 407.5h1.1M607.5 402.4h1.1M556.2 403.7h1.1M597.8 403.5h1.1M561.6 400.8h1.1M564.4 402.5h1.1M583.4 386.4h1.1M558.7 408.7h1.1M568.2 405.4h1.1M587.2 398.2h1.1M544.9 396.3h1.1M576.4 408.8h1.1M572.6 420.3h1.1M559.4 410.1h1.1M567.5 408.9h1.1M564.7 391h1.1M594.3 383.9h1.1M609.1 395.7h1.1M581.8 389.9h1.1M558.3 401.2h1.1M569.6 413.2h1.1M590.3 392.4h1.1M581.7 420.3h1.1M593.2 446h1.1M591.7 408.2h1.1M580.9 402.9h1.1M611.6 427.9h1.1M604.2 430.7h1.1M596.9 404.6h1.1M583.4 427.2h1.1M571.8 425h1.1M593.4 407.9h1.1M603.9 415.8h1.1M589.5 433.4h1.1M587.7 421.1h1.1M565.1 402.9h1.1M564.1 424.8h1.1M584.5 432.4h1.1M601 423.2h1.1M591.7 406.5h1.1M494.6 264.1h1.1M499.5 261.5h1.1M501.2 259.6h1.1M502.1 260.7h1.1M502.7 258.4h1.1M507.7 253.5h1.1M511.4 251.6h1.1M513.1 251.6h1.1M516 249.7h1.1M933.8 318.8h1.1M933.6 330.6h1.1M931.8 341.3h1.1M929.8 353.7h1.1M928.2 372.9h1.1M923.3 418.8h1.1M922.8 430h1.1M920.1 451.1h1.1M918.6 458.1h1.1M916.6 481.7h1.1M915 492h1.1M909.9 542h1.1M986.4 398.5h1.1M985.6 402.3h1.1M983.6 405h1.1M984.5 414.2h1.1M983 419.7h1.1M982.6 424.8h1.1M980.8 427.4h1.1M892.9 458h1.1M892.4 459.9h1.1M891.9 461.8h1.1M890.7 463.6h1.1M890.3 467.3h1.1M890.8 468.9h1.1M889.4 474.2h1.1M888.8 475.5h1.1M888.1 479.9h1.1" stroke="#84e048"/><path d="M577.8 413.2h1.1M577.7 412.8h1.1M558.5 399.6h1.1M583 394.5h1.1M550.5 404.7h1.1M558.3 416.2h1.1M545.5 397.1h1.1M592.2 409.3h1.1M571.5 394.7h1.1M567.1 399.4h1.1M588.3 403h1.1M577.7 399.3h1.1M555.2 401.7h1.1M559.1 390.3h1.1M554.9 405.8h1.1M554.4 411.7h1.1M574.6 393.5h1.1M576.1 401.2h1.1M570.6 402.9h1.1M562.4 390.6h1.1M546.9 411.2h1.1M540.7 403.6h1.1M559.8 390.2h1.1M554.6 387.4h1.1M550.6 401.6h1.1M540.7 402.9h1.1M541 405.6h1.1M566.6 392.9h1.1M569.2 407.6h1.1" stroke="#e0e0e0"/><path d="M572.4 159.4h1.1M578.1 158.8h1.1M581.5 158.7h1.1M592.4 160.3h1.1M595.5 159.8h1.1M620.1 161.9h1.1M649.9 163.7h1.1M658.7 163.1h1.1M667.8 162.8h1.1M704.3 165.3h1.1M711.9 165.3h1.1M716.1 165h1.1M736.7 166.2h1.1M767.6 167.2h1.1M790.9 169.3h1.1M583.7 164.2h1.1M608.3 165.5h1.1M611 165.8h1.1M617.5 165.4h1.1M620.3 166.1h1.1M640.9 166.4h1.1M644.4 166.7h1.1M653.5 166.8h1.1M659.3 168h1.1M668.1 168.9h1.1M674.2 167.7h1.1M676.8 167.6h1.1M703.5 169.2h1.1M706.6 169.2h1.1M709.8 169.1h1.1M713.7 170h1.1M743 171.3h1.1M769.4 171.2h1.1M796.7 172.9h1.1M568.7 168.4h1.1M571.6 167.9h1.1M575 167.9h1.1M590.5 168.9h1.1M605 170.4h1.1M649.5 171.6h1.1M652.7 171.3h1.1M655.8 172.2h1.1M662.5 171.7h1.1M667.6 172.6h1.1M721.3 174.1h1.1M749 176.1h1.1M754.7 174.9h1.1M793.9 177.7h1.1M681.9 141.1h1.1M717.6 144.3h1.1M738.1 147.1h1.1M745.9 148.7h1.1M798.4 153.7h1.1M814.4 157.1h1.1M863.3 161.3h1.1M886.6 164.3h1.1M902.7 167.3h1.1M690.4 148.6h1.1M714.2 150.3h1.1M729.9 151.9h1.1M779.5 157.5h1.1M805.2 161.4h1.1M838.1 163.9h1.1M882.3 169.8h1.1M910 172.7h1.1M942.9 176.2h1.1M951.6 176.3h1.1M955.2 176.7h1.1M710.1 155.6h1.1M793.8 165h1.1M813.6 166.6h1.1M894.9 176.3h1.1M907.2 177.9h1.1M914.8 178.6h1.1M922.1 179.4h1.1M931.1 180.3h1.1M943.9 181.9h1.1M838 292.2h1.1M838.9 290.5h1.1M842 286.5h1.1M842.2 285.4h1.1M843.9 282h1.1M847.2 276.4h1.1M848.3 275.4h1.1M849.4 268.3h1.1M848.1 266.3h1.1M848.6 261.6h1.1M848.1 260.7h1.1M848.5 259h1.1M845.5 250.4h1.1M841.9 243.7h1.1M836.9 237.3h1.1M835.5 235.6h1.1M815.5 219.7h1.1M810 218h1.1M804.2 214.7h1.1M800.5 213.3h1.1M782.8 208.4h1.1M772 205.6h1.1M749.3 203.4h1.1M741.7 201.9h1.1M735.8 202.3h1.1M722.3 203.3h1.1M705.8 205.5h1.1M686 209.2h1.1M680.1 212.3h1.1M672.6 214.4h1.1M666.2 218.1h1.1M850.7 292.7h1.1M859.9 277.6h1.1M861 268.7h1.1M861.2 266.1h1.1M861.7 260.7h1.1M861.4 258.2h1.1M860.2 255.5h1.1M859.4 252.7h1.1M858.9 251.5h1.1M858.5 248.8h1.1M857.6 247.6h1.1M850.3 238.1h1.1M845.6 232.1h1.1M844.8 230.5h1.1M836 223.9h1.1M834.8 222.7h1.1M833.3 221.4h1.1M830.3 220.4h1.1M819.9 214.1h1.1M815.4 212.1h1.1M810 210.4h1.1M791.7 204.9h1.1M781 201.5h1.1M772.8 200.8h1.1M760.4 198h1.1M755.7 199h1.1M726.3 197.9h1.1M720.2 200h1.1M699.3 201h1.1M696 201.9h1.1M692.8 202.5h1.1M684 204.7h1.1M655.8 215h1.1M863.9 292.7h1.1M866 288.4h1.1M870.3 280.9h1.1M871.7 278.6h1.1M872.3 276.5h1.1M872.4 274.7h1.1M873.4 272.1h1.1M874 260.4h1.1M873.7 256.5h1.1M872 254.6h1.1M871.5 249.6h1.1M870.4 248.4h1.1M869.4 246.9h1.1M869.1 244.2h1.1M863.1 237.2h1.1M859.9 233.5h1.1M850.2 224.3h1.1M844.2 219.7h1.1M841.3 218.4h1.1M826.3 210.1h1.1M819.9 207.9h1.1M778.4 196.4h1.1M769.4 195.5h1.1M752.8 193.5h1.1M695.8 196.1h1.1M670.5 202.5h1.1M667.2 202.7h1.1M658.9 205.4h1.1M655.6 208.1h1.1M629.6 221.4h1.1M874.2 296.8h1.1M875 294.9h1.1M879.9 286.6h1.1M884.2 277.1h1.1M885.1 273h1.1M886.3 268.1h1.1M886.9 267.7h1.1M886.2 265.1h1.1M886.5 261.9h1.1M885.5 254.9h1.1M882.8 247.7h1.1M880 243.2h1.1M878.6 241.6h1.1M875 235.5h1.1M873.3 233.1h1.1M869.6 229.6h1.1M863.5 223h1.1M858.1 219h1.1M856.5 217.9h1.1M853.1 216.2h1.1M842 210.3h1.1M833.5 205.4h1.1M827.1 203h1.1M820 201.2h1.1M800.3 194.8h1.1M792.5 192.9h1.1M789 191.3h1.1M784.1 190.3h1.1M766.6 189.1h1.1M762.3 189.1h1.1M754.7 188.4h1.1M723.2 187.5h1.1M688.9 191.8h1.1M684.3 192.8h1.1M679.5 193.5h1.1M647.9 204.1h1.1M889.2 291.4h1.1M893.6 284.3h1.1M897.1 277.5h1.1M898.9 269.2h1.1M898.5 263h1.1M898.8 261.1h1.1M893.2 242.6h1.1M890.8 238.7h1.1M888.9 236.2h1.1M884.8 231.4h1.1M869.4 217.6h1.1M862.7 213.4h1.1M859.9 210.9h1.1M857.8 210.9h1.1M835.4 200.1h1.1M822.2 195.1h1.1M804.6 190.2h1.1M753.5 183h1.1M744.7 182.5h1.1M724.1 182.4h1.1M698.4 184.3h1.1M646.5 196.6h1.1M623.2 207.2h1.1M619.9 208.7h1.1M896.1 301h1.1M896.8 299.8h1.1M899.1 297.7h1.1M905.5 287.4h1.1M910.6 274.3h1.1M910.9 270.5h1.1M911.5 269h1.1M910.6 259.2h1.1M910.8 256.7h1.1M909.2 252.4h1.1M903.6 237.9h1.1M898.3 231.5h1.1M893.6 225.9h1.1M875.5 212.7h1.1M865.4 206.6h1.1M853.1 200.4h1.1M850.1 197.7h1.1M835.3 193.3h1.1M828.6 190.1h1.1M824.9 189.5h1.1M715.4 179h1.1M709.8 178.1h1.1M703.7 179.3h1.1M699.3 180.6h1.1M694.8 180.6h1.1M671 184.9h1.1M645 190.8h1.1M637.7 193.8h1.1M910.8 298.9h1.1M913.4 295.6h1.1M919.5 284.6h1.1M922.9 272.4h1.1M924 268h1.1M923.3 267.2h1.1M924.1 263.8h1.1M923.9 258.1h1.1M922.3 254.7h1.1M921.9 251.2h1.1M917.1 238.1h1.1M912.2 230.6h1.1M905.3 223.8h1.1M900.5 219.6h1.1M896.3 217.4h1.1M891.7 213.4h1.1M881.9 206.5h1.1M878.6 203.3h1.1M875 203h1.1M872.9 200.5h1.1M862.7 195.9h1.1M844.3 190.1h1.1M841 188.4h1.1M814.9 180.8h1.1M808.8 180.2h1.1M791.9 176.9h1.1M756.3 172.8h1.1M752.3 173.4h1.1M742.8 172.3h1.1M737.5 171.9h1.1M695.6 175.6h1.1M673.1 178.2h1.1M656 181.9h1.1M625.6 191.3h1.1M621.2 192.4h1.1M609.7 198.4h1.1M920.9 302.6h1.1M923.5 301.8h1.1M931.5 286.3h1.1M934.1 281.5h1.1M934.9 279.4h1.1M935.4 276.9h1.1M936.6 260.3h1.1M935.9 256.6h1.1M926.1 235.7h1.1M926 233.1h1.1M920.5 226.8h1.1M899.8 208.6h1.1M886.1 199.9h1.1M883.5 198.2h1.1M877.1 195.1h1.1M871.1 193.1h1.1M829.3 178.4h1.1M785.5 170.3h1.1M677.9 172.3h1.1M656.9 175.8h1.1M647.6 178.1h1.1M937.4 297.7h1.1M940.1 295.3h1.1M942.8 289h1.1M948.1 275.6h1.1M948.6 271.6h1.1M949.2 263.9h1.1M948 251.1h1.1M940.3 235.9h1.1M937.7 231.8h1.1M926.5 219.7h1.1M922.3 215.3h1.1M921 213.7h1.1M918 212h1.1M907.4 204.7h1.1M905.4 203.3h1.1M896.1 197.5h1.1M893.1 196.8h1.1M890.3 193.4h1.1M867.4 184.4h1.1M862.3 182h1.1M858.5 182h1.1M856.4 180.1h1.1M811.1 169.1h1.1M707 164.1h1.1M683.8 165h1.1M664.7 169.1h1.1M621.8 179.5h1.1M617.8 181h1.1M958.7 281.5h1.1M961.8 265h1.1M961.3 261.3h1.1M961.3 256.3h1.1M960.7 254h1.1M959.8 252h1.1M958.9 249.1h1.1M958.6 248h1.1M956.6 242.7h1.1M952.4 234h1.1M947.4 226.2h1.1M944.3 223.5h1.1M942 221.2h1.1M935.1 214.7h1.1M931.9 211.9h1.1M923.1 205.1h1.1M911.5 197.3h1.1M886.5 185.6h1.1M871.7 179h1.1M867 177.6h1.1M853.4 172.7h1.1M843.9 170h1.1M830.3 166.9h1.1M805.7 162.1h1.1M777.7 159.5h1.1M739.8 157.6h1.1M733.6 157.5h1.1M722.8 158h1.1M717.8 157.8h1.1M694.6 160h1.1M643.2 167.9h1.1M269.9 215.9h1.1M281.7 111.6h1.1M168.2 96.8h1.1M244.2 192.9h1.1M172.7 100.9h1.1M170 188.9h1.1M252.1 230.4h1.1M271.8 151.3h1.1M263.3 192.7h1.1M260.7 123.7h1.1M281.1 232.6h1.1M274.5 231.3h1.1M230 197.9h1.1M154.1 151.5h1.1M245.4 187.7h1.1M236.4 225h1.1M180.1 157h1.1M264.2 176.4h1.1M273.3 118.7h1.1M179.3 192.9h1.1M157.2 104.7h1.1M252.5 208.9h1.1M279.3 101.1h1.1M383.3 131.3h1.1M332.9 136.6h1.1M334.1 93h1.1M359.8 149.1h1.1M303.4 129.7h1.1M349.6 155h1.1M397.5 113.7h1.1M474.7 117.4h1.1M285.6 171h1.1M301.4 114.2h1.1M306 119.2h1.1M483.3 147.7h1.1M392 160.6h1.1M472.9 90.7h1.1M286.7 147.8h1.1M288.8 167.1h1.1M477.8 116.5h1.1M433.8 130.9h1.1M289.9 161.4h1.1M410.4 107.7h1.1M431.3 118.4h1.1M419.4 122.9h1.1M397.3 100.7h1.1M340 155h1.1M342.9 141.5h1.1M396.9 118.9h1.1M507.9 117.2h1.1M314.3 133h1.1M302 170.9h1.1M437.8 139.4h1.1M489.7 91.4h1.1M480.8 150.4h1.1M441.7 143.9h1.1M393.5 125.9h1.1M434.3 172.2h1.1M491.2 142.3h1.1M505 92h1.1M472.6 131.1h1.1M381.6 137.5h1.1M304.4 108.5h1.1M361.6 147.1h1.1M483.2 169h1.1M453.4 122.1h1.1M300.9 96.3h1.1M491.2 92.6h1.1M436.5 150h1.1M429.7 151.7h1.1M288.5 151.5h1.1M349 149.8h1.1M485 129.3h1.1M448.6 141.9h1.1M428.5 117.4h1.1M307.6 107.4h1.1M454.8 95.8h1.1M299.3 97.7h1.1M334.8 115.3h1.1M482.3 92.4h1.1M466.3 155.3h1.1M348.5 170.5h1.1M344.9 162.1h1.1M466.7 90.1h1.1M507.1 95.5h1.1M355 137.3h1.1M394.3 128.2h1.1M415.5 169.3h1.1M401.2 116h1.1M325 97.9h1.1M328.2 170.9h1.1M107.2 268h1.1M98.1 242.7h1.1M43.1 242.8h1.1M143.6 228.1h1.1M46.6 176.1h1.1M97.7 213.4h1.1M101.3 192.4h1.1M80.4 178.1h1.1M58.9 188.3h1.1M35.6 186.6h1.1M155.6 224.6h1.1M113.3 238.6h1.1M141.1 198.4h1.1M153 191.5h1.1M14 250.6h1.1M110.6 202.7h1.1M17 267h1.1M93.5 257.7h1.1M406.6 280.3h1.1M451.8 264.1h1.1M334.5 272.6h1.1M305.4 209.4h1.1M470.8 303.1h1.1M358.5 253.9h1.1M464.3 210.9h1.1M375.8 301.7h1.1M350.5 236.7h1.1M425.9 307.7h1.1M452.3 257h1.1M360.2 210.2h1.1M464.8 282.3h1.1M338.1 312.1h1.1M439.8 194.3h1.1M407.3 252.9h1.1M480.2 236.2h1.1M441.3 212.1h1.1M416.3 251.8h1.1M454.3 265.9h1.1M476.5 285.7h1.1M303.2 285.9h1.1M370.4 242.7h1.1M437.1 231.7h1.1M441.1 228h1.1M370.9 241.6h1.1M450.5 201h1.1M382.7 266.8h1.1M444.5 271.4h1.1M412.5 261.4h1.1M466.3 304.3h1.1M372.2 200.4h1.1M337.3 209.8h1.1M451.9 279.7h1.1M440 235.2h1.1M331.1 251.6h1.1M321.5 305.6h1.1M460.8 215.7h1.1M395.2 252.8h1.1M313.3 206.7h1.1M480.3 216.4h1.1M383.2 268.6h1.1M415.5 285.1h1.1M442.1 220.4h1.1M314.5 311.5h1.1M407.9 288.7h1.1M334.9 245.1h1.1" stroke="#257a3a"/></g>
</svg>
<span class="t" style="left:478.0px;top:18.1px;font-size:17.6px;letter-spacing:0.632px;font-weight:700;color:#3d3d3d">/home/kang/Workspace/WR_Pub/wr_devkit_navigation/src/wr_devkit_bringup/rviz/rtabmap.rviz* - RViz</span>
<span class="t" style="left:20.5px;top:48.9px;font-size:17.33px;letter-spacing:0.833px"><u>F</u>ile</span>
<span class="t" style="left:65.3px;top:48.9px;font-size:17.33px;letter-spacing:0.380px"><u>P</u>anels</span>
<span class="t" style="left:134.6px;top:48.9px;font-size:17.33px;letter-spacing:1.167px"><u>H</u>elp</span>
<span class="t" style="left:45.8px;top:87.0px;font-size:14.67px;letter-spacing:0.600px">Interact</span>
<span class="t" style="left:148.5px;top:87.0px;font-size:14.67px;letter-spacing:0.100px">Move Camera</span>
<span class="t" style="left:290.7px;top:87.0px;font-size:14.67px;letter-spacing:0.140px">Select</span>
<span class="t" style="left:382.6px;top:87.0px;font-size:14.67px;letter-spacing:-0.145px">Focus Camera</span>
<span class="t" style="left:525.6px;top:87.0px;font-size:14.67px;letter-spacing:0.400px">Measure</span>
<span class="t" style="left:633.7px;top:87.0px;font-size:14.67px;letter-spacing:0.093px">2D Pose Estimate</span>
<span class="t" style="left:801.8px;top:87.0px;font-size:14.67px;letter-spacing:-0.191px">2D Goal Pose</span>
<span class="t" style="left:940.6px;top:87.0px;font-size:14.67px;letter-spacing:0.283px">Publish Point</span>
<span class="t" style="left:37.3px;top:119.9px;font-size:17.33px;letter-spacing:0.157px">Displays</span>
<span class="t" style="left:60.7px;top:144.7px;font-size:17.33px;letter-spacing:0.600px">Global Options</span>
<span class="t" style="left:63.5px;top:167.7px;font-size:17.33px;letter-spacing:0.240px">Fixed Frame</span>
<span class="t" style="left:188.7px;top:167.7px;font-size:17.33px;letter-spacing:1.100px">map</span>
<span class="t" style="left:63.5px;top:190.7px;font-size:17.33px;letter-spacing:0.620px">Background…</span>
<span class="t" style="left:213.4px;top:190.7px;font-size:17.33px;letter-spacing:0.111px">48; 48; 48</span>
<span class="t" style="left:63.5px;top:213.7px;font-size:17.33px;letter-spacing:0.167px">Frame Rate</span>
<span class="t" style="left:188.7px;top:213.7px;font-size:17.33px;letter-spacing:0.900px">30</span>
<span class="t" style="left:60.7px;top:236.7px;font-size:17.33px;letter-spacing:0.583px">Global Statu…</span>
<span class="t" style="left:86.0px;top:259.7px;font-size:17.33px;letter-spacing:0.144px">Fixed Fra…</span>
<span class="t" style="left:188.7px;top:259.7px;font-size:17.33px;letter-spacing:0.300px">OK</span>
<span class="t" style="left:60.7px;top:282.7px;font-size:17.33px;letter-spacing:0.300px;font-weight:700;color:#1f6fc0">Grid</span>
<span class="t" style="left:60.7px;top:305.7px;font-size:17.33px;letter-spacing:0.500px;font-weight:700;color:#1f6fc0">MapCloud</span>
<span class="t" style="left:60.7px;top:328.7px;font-size:17.33px;letter-spacing:0.443px;font-weight:700;color:#1f6fc0">MapGraph</span>
<span class="t" style="left:60.7px;top:351.7px;font-size:17.33px;letter-spacing:0.370px;font-weight:700;color:#1f6fc0">PointCloud2</span>
<span class="t" style="left:60.7px;top:374.7px;font-size:17.33px;letter-spacing:1.350px;font-weight:700;color:#1f6fc0">Map</span>
<span class="t" style="left:60.7px;top:397.7px;font-size:17.33px;letter-spacing:1.100px;font-weight:700;color:#1f6fc0">Info</span>
<span class="t" style="left:35.5px;top:922.9px;font-size:17.33px;letter-spacing:1.200px">Add</span>
<span class="t" style="left:103.3px;top:922.9px;font-size:17.33px;letter-spacing:0.850px;color:#bdbdbd">Duplicate</span>
<span class="t" style="left:200.7px;top:922.9px;font-size:17.33px;letter-spacing:0.320px;color:#bdbdbd">Remove</span>
<span class="t" style="left:287.1px;top:922.9px;font-size:17.33px;letter-spacing:0.380px;color:#bdbdbd">Rename</span>
<span class="t" style="left:38.0px;top:961.0px;font-size:17.33px;letter-spacing:0.467px">Time</span>
<span class="t" style="left:20.9px;top:992.6px;font-size:17.33px;letter-spacing:-0.038px">ROS Time:</span>
<span class="t" style="left:115.4px;top:992.6px;font-size:17.33px;letter-spacing:0.392px">1726041459.04</span>
<span class="t" style="left:277.6px;top:992.6px;font-size:17.33px;letter-spacing:-0.145px">ROS Elapsed:</span>
<span class="t" style="left:395.0px;top:992.6px;font-size:17.33px;letter-spacing:0.325px">31.18</span>
<span class="t" style="left:558.6px;top:992.6px;font-size:17.33px;letter-spacing:0.489px">Wall Time:</span>
<span class="t" style="left:653.7px;top:992.6px;font-size:17.33px;letter-spacing:0.367px">1726041459.07</span>
<span class="t" style="left:816.3px;top:992.6px;font-size:17.33px;letter-spacing:0.292px">Wall Elapsed:</span>
<span class="t" style="left:933.6px;top:992.6px;font-size:17.33px;letter-spacing:0.350px">31.18</span>
<span class="t" style="left:1732.5px;top:992.6px;font-size:17.33px;letter-spacing:0.873px">Experimental</span>
<span class="t" style="left:19.8px;top:1029.4px;font-size:17.33px;letter-spacing:0.350px">Reset</span>
<span class="t" style="left:80.4px;top:1028.5px;font-size:17.33px;letter-spacing:0.650px;font-weight:700">Left-Click:</span>
<span class="t" style="left:173.8px;top:1028.5px;font-size:17.33px;letter-spacing:0.983px">Rotate.</span>
<span class="t" style="left:238.0px;top:1028.5px;font-size:17.33px;letter-spacing:0.517px;font-weight:700">Middle-Click:</span>
<span class="t" style="left:354.6px;top:1028.5px;font-size:17.33px;letter-spacing:0.675px">Move X/Y.</span>
<span class="t" style="left:440.6px;top:1028.5px;font-size:17.33px;letter-spacing:0.561px;font-weight:700">Right-Click/Mouse Wheel:</span>
<span class="t" style="left:667.8px;top:1028.5px;font-size:17.33px;letter-spacing:0.800px">Zoom.</span>
<span class="t" style="left:723.0px;top:1028.5px;font-size:17.33px;letter-spacing:0.740px;font-weight:700">Shift:</span>
<span class="t" style="left:773.4px;top:1028.5px;font-size:17.33px;letter-spacing:0.833px">More options.</span>
<span class="t" style="left:1784.5px;top:1025.7px;font-size:17.33px;letter-spacing:0.560px">31 fps</span>
<span class="t" style="left:1617.2px;top:119.8px;font-size:17.33px;letter-spacing:0.475px">Views</span>
<span class="t" style="left:1591.5px;top:153.8px;font-size:17.33px;letter-spacing:0.450px">Type:</span>
<span class="t" style="left:1797.7px;top:154.0px;font-size:17.33px;letter-spacing:1.100px">Zero</span>
<span class="t" style="left:1617.9px;top:188.7px;font-size:17.33px;letter-spacing:0.533px;font-weight:700">Current V…</span>
<span class="t" style="left:1726.4px;top:188.7px;font-size:17.33px;letter-spacing:0.700px;font-weight:700">Orbit (rviz)</span>
<span class="t" style="left:1642.5px;top:209.7px;font-size:17.33px;letter-spacing:0.329px">Near Cl…</span>
<span class="t" style="left:1726.4px;top:209.7px;font-size:17.33px;letter-spacing:0.133px">0.01</span>
<span class="t" style="left:1641.5px;top:230.7px;font-size:17.33px;letter-spacing:1.043px">Invert …</span>
<span class="t" style="left:1643.5px;top:251.7px;font-size:17.33px;letter-spacing:0.786px">Target …</span>
<span class="t" style="left:1726.4px;top:251.7px;font-size:17.33px;letter-spacing:0.125px">&lt;Fixed Frame&gt;</span>
<span class="t" style="left:1642.5px;top:272.7px;font-size:17.33px;letter-spacing:0.500px">Distance</span>
<span class="t" style="left:1726.4px;top:272.7px;font-size:17.33px;letter-spacing:0.500px">18.6538</span>
<span class="t" style="left:1642.5px;top:293.7px;font-size:17.33px;letter-spacing:-0.100px">Focal S…</span>
<span class="t" style="left:1726.4px;top:293.7px;font-size:17.33px;letter-spacing:0.433px">0.05</span>
<span class="t" style="left:1642.5px;top:314.7px;font-size:17.33px;letter-spacing:-0.100px">Focal S…</span>
<span class="t" style="left:1642.5px;top:335.7px;font-size:17.33px;letter-spacing:0.150px">Yaw</span>
<span class="t" style="left:1726.4px;top:335.7px;font-size:17.33px;letter-spacing:0.580px">5.2204</span>
<span class="t" style="left:1642.5px;top:356.7px;font-size:17.33px;letter-spacing:0.675px">Pitch</span>
<span class="t" style="left:1726.4px;top:356.7px;font-size:17.33px;letter-spacing:0.429px">0.574797</span>
<span class="t" style="left:1642.5px;top:377.7px;font-size:17.33px;letter-spacing:-0.100px">Focal P…</span>
<span class="t" style="left:1726.4px;top:377.7px;font-size:17.33px;letter-spacing:-0.100px">0; 0; 0</span>
<span class="t" style="left:1613.4px;top:924.8px;font-size:17.33px;letter-spacing:-0.467px">Save</span>
<span class="t" style="left:1691.0px;top:924.8px;font-size:17.33px;letter-spacing:0.360px">Remove</span>
<span class="t" style="left:1782.2px;top:924.8px;font-size:17.33px;letter-spacing:0.280px">Rename</span>
</body></html>
